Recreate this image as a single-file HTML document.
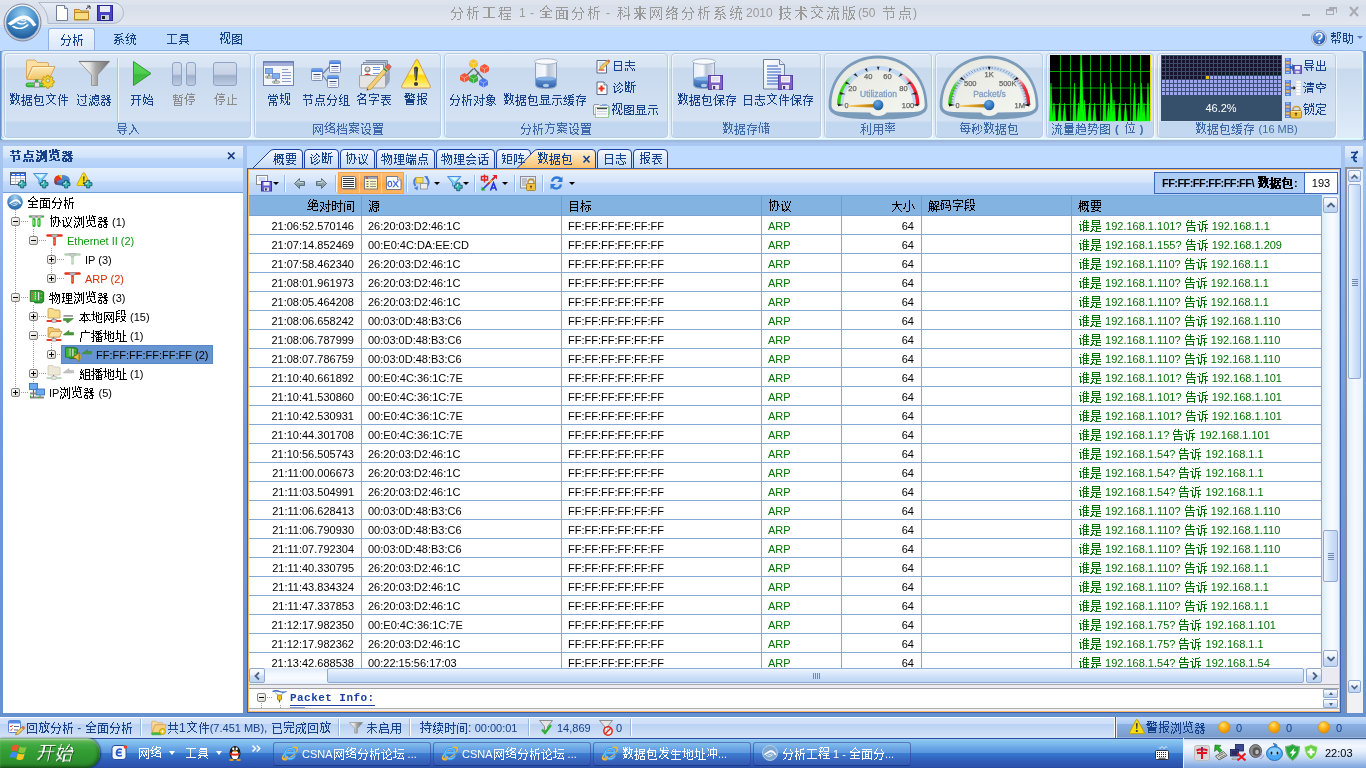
<!DOCTYPE html>
<html lang="zh">
<head>
<meta charset="utf-8">
<title>分析工程 1 - 全面分析 - 科来网络分析系统2010 技术交流版(50 节点)</title>
<style>
*{box-sizing:border-box;margin:0;padding:0}
html,body{width:1366px;height:768px;overflow:hidden}
body{will-change:transform}
body{position:relative;font-family:"Liberation Sans",sans-serif;font-size:11px;color:#000;background:#6593cf;line-height:1}
.c{font-size:12px}
i{display:inline-block;position:relative;overflow:hidden;width:12px;height:13px;font-size:0;line-height:0;vertical-align:-2px;font-style:normal}
i svg{position:absolute;left:0;top:0;width:12px;height:13px;stroke:currentColor;stroke-width:1;fill:none;shape-rendering:crispEdges}
.abs{position:absolute}
svg{display:block;overflow:visible}
/* ---------- title bar ---------- */
#title{position:absolute;left:0;top:0;width:1366px;height:27px;background:linear-gradient(#dfe4ee 0,#dce2ec 5px,#d8deea 5px,#dce2ec 14px,#e2e6ef 24px,#dfe9eb 24px,#dfe9eb 25px,#ccd8ea 25px,#ccd8ea 26px,#dde2ee 26px,#dde2ee 27px)}
#title .txt{position:absolute;left:0;top:5px;white-space:nowrap;color:#9a9a98;font-size:12px;height:16px;line-height:16px}
#title i{width:16px;height:15px;vertical-align:-3px}
#title i svg{width:14px;height:15px}
#title .txt span{position:absolute;top:0}
#left .hd i{width:13px}
#left .hd i svg,.bd i svg{filter:drop-shadow(1px 0 0 currentColor)}
#start i{width:19px;height:18px;vertical-align:0}
#start i svg{width:18px;height:18px;shape-rendering:auto;transform:skewX(-12deg);filter:drop-shadow(1px 1px 0 #1b4d1b)}
#qat{position:absolute;left:40px;top:2px;width:84px;height:22px}
#orb{position:absolute;left:3px;top:3px;width:39px;height:39px}
/* ---------- ribbon ---------- */
#tabrow{position:absolute;left:0;top:27px;width:1366px;height:24px;background:#bfdbff}
.rtab{position:absolute;top:1px;height:23px;line-height:23px;color:#15428b;text-align:center;font-size:12px}
.rtab.on{border:1px solid #8db2e3;border-bottom:none;border-radius:3px 3px 0 0;background:linear-gradient(#f3f8ff,#e1ecfb 60%,#dbe7f7)}
#ribbon{position:absolute;left:1px;top:50px;width:1363px;height:88px;border:1px solid #8db2e3;border-bottom:none;border-radius:4px 4px 3px 3px;background:linear-gradient(#eef5fd 0,#e4eefa 1px,#dde8f5 3px,#d9e4f3 17px,#c8d9ee 18px,#dfecfa 87px);box-shadow:0 1px 0 #e6fdff,0 2px 0 #d2f3fa,inset -1px 0 0 #e8f6fc}
.grp{position:absolute;top:2px;height:85px;border:1px solid #b7cce3;border-radius:4px;background:linear-gradient(#dde8f5 0,#d8e4f3 13px,#c8d9ee 14px,#d4e2f3 67px,#c1d7f0 68px,#c3d8f0 83px);box-shadow:inset 1px 1px 0 rgba(255,255,255,.6),1px 1px 0 rgba(255,255,255,.7)}
.grp .cap{position:absolute;left:0;right:0;bottom:0;height:16px;line-height:16px;text-align:center;color:#3e6aaa;font-size:12px;white-space:nowrap}
.rb{position:absolute;top:1px;margin-left:1px;text-align:center;color:#15428b;font-size:12px;white-space:nowrap}
.rb .ic{position:absolute;top:5px;left:50%;margin-left:-16px;width:32px;height:32px}
.rb .lb{position:absolute;top:38px;left:-20px;right:-20px;height:14px;line-height:14px}
.rb.dis{color:#8d8d8d}
.sb{position:absolute;margin:0;height:18px;line-height:18px;color:#15428b;font-size:12px;white-space:nowrap}
.sb svg{position:absolute;left:0;top:1px}
/* ---------- panels ---------- */
#frame{position:absolute;left:0;top:140px;width:1366px;height:577px;background:linear-gradient(#9db2d3 0,#a3bce2 2px,#a9c7f0 3px,#a4c3ef 30px,#8fb3ea 90px,#7099dd 290px,#6591cf 577px)}
#left{position:absolute;left:3px;top:146px;width:240px;height:567px;background:#fff}
#left .hd{position:absolute;left:0;top:0;width:240px;height:22px;background:linear-gradient(#e3eefd 0,#d0e2fb 50%,#bbd6f9 58%,#b1d0f9 100%);color:#15428b;font-weight:bold;font-size:12px;line-height:21px;padding-left:6px}
#left .tb{position:absolute;left:0;top:22px;width:240px;height:25px;background:linear-gradient(#e6f0fd,#d6e6fc 50%,#c4dbfa 60%,#b3d0f7);border-bottom:1px solid #6f9dd9}
.tn{position:absolute;margin-left:-1px;height:19px;line-height:21px;white-space:nowrap;font-size:11px}
.tn .c{font-size:12px}
i{display:inline-block;position:relative;overflow:hidden;width:12px;height:13px;font-size:0;line-height:0;vertical-align:-2px;font-style:normal}
i svg{position:absolute;left:0;top:0;width:12px;height:13px;stroke:currentColor;stroke-width:1;fill:none;shape-rendering:crispEdges}
.xb{position:absolute;width:9px;height:9px;border:1px solid #848484;border-radius:2px;background:linear-gradient(135deg,#fff,#d8d4c8)}
.xb:before{content:"";position:absolute;left:1px;top:3px;width:5px;height:1px;background:#000}
.xb.p:after{content:"";position:absolute;left:3px;top:1px;width:1px;height:5px;background:#000}
.dh{position:absolute;height:1px;background-image:linear-gradient(90deg,#9a9a9a 50%,transparent 50%);background-size:2px 1px}
.dv{position:absolute;width:1px;background-image:linear-gradient(#9a9a9a 50%,transparent 50%);background-size:1px 2px}
/* main */
#mtabs{position:absolute;left:247px;top:146px;width:1094px;height:23px;background:#bfdbff}
#main{position:absolute;left:247px;top:168px;width:1094px;height:545px;border:1px solid #3c5ea8;background:#eeeef8}
#main .in{position:absolute;left:0;top:0;right:0;bottom:0;border:1px solid #ffb95e}
#mtb{position:absolute;left:249px;top:170px;width:1090px;height:25px;background:linear-gradient(#e6effd,#d6e5fb 45%,#c3d9f8 55%,#b5d3fb)}
#th{position:absolute;left:249px;top:195px;width:1073px;height:21px;background:#83b4e1;border-top:1px solid #74a6dc;border-bottom:1px solid #7aa3d4}
.th{position:absolute;top:0;height:19px;line-height:21px;font-size:12px;white-space:nowrap}
.vs{position:absolute;top:0;width:1px;height:19px;background:#6f9fd2}
#tb{position:absolute;left:249px;top:216px;width:1073px;height:452px;overflow:hidden;background:#fff}
.tr{position:relative;height:19px;border-bottom:1px solid #86a8d6;white-space:nowrap}
.td{position:absolute;top:0;height:18px;line-height:20px;border-right:1px solid #86a8d6;overflow:hidden}
.td .c{font-size:12px}
i{display:inline-block;position:relative;overflow:hidden;width:12px;height:13px;font-size:0;line-height:0;vertical-align:-2px;font-style:normal}
i svg{position:absolute;left:0;top:0;width:12px;height:13px;stroke:currentColor;stroke-width:1;fill:none;shape-rendering:crispEdges}
.c1{left:0;width:113px;text-align:right;padding-right:7px}
.c2{left:113px;width:200px;padding-left:6px}
.c3{left:313px;width:200px;padding-left:6px}
.c4{left:513px;width:80px;padding-left:6px}
.c5{left:593px;width:80px;text-align:right;padding-right:7px}
.c6{left:673px;width:150px}
.c7{left:823px;width:250px;padding-left:6px}
.g{color:#006e00}
.mt{position:absolute;top:5px;height:16px;line-height:16px;font-size:12px;color:#15428b;white-space:nowrap}
.tsep{position:absolute;top:5px;width:2px;height:17px;border-left:1px solid #9ab9e6;border-right:1px solid #f2f7ff}
.dar{position:absolute;top:12px;border:3px solid transparent;border-bottom:none;border-top:3px solid #000;width:0;height:0}
/* scrollbars */
.sbtn{position:absolute;border:1px solid #8fa9d2;border-radius:2px;background:linear-gradient(#fafcff 0,#e9f1fc 45%,#cfdff6 52%,#bfd4f1 100%)}
/* status */
#status{position:absolute;left:0;top:717px;width:1366px;height:21px;background:linear-gradient(#fff 0,#fff 1px,#d4e3f9 1px,#cfdff7 7px,#b9d1f4 7px,#d4e3f6 21px);color:#15428b;font-size:12px;line-height:23px;white-space:nowrap}
#status .it{position:absolute;top:0;height:21px}
#status .sep{position:absolute;top:2px;width:2px;height:17px;border-left:1px solid #9ab5da;border-right:1px solid #fff}
/* taskbar */
#task{position:absolute;left:0;top:738px;width:1366px;height:30px;background:linear-gradient(#2a48a8 0,#2a48a8 1px,#9ccef4 1px,#84c3ec 3px,#7cb9ec 6px,#69a5e6 10px,#5894de 15.500px,#3478cc 15.500px,#3370c8 18px,#3060bc 22px,#2c54b0 27px,#2a50ac 29px,#27479a 30px);color:#fff;font-size:12px;white-space:nowrap}
.tk{position:absolute;top:4px;width:158px;height:24px;line-height:22px;border-radius:3px;background:rgba(255,255,255,.04);border:1px solid rgba(50,60,150,.55);border-bottom-color:#1c3a88;padding-left:28px;color:#fff;overflow:hidden;font-size:11px}
</style>
</head>
<body>
<svg class="abs" style="left:0;top:0" width="0" height="0"><defs><path id="g4ef6" d="M3 1.5h1M7 1.5h1M3 2.5h1M5 2.5h1M7 2.5h1M2 3.5h1M5 3.5h1M7 3.5h1M2 4.5h1M5 4.5h6M1 5.5h2M4 5.5h1M7 5.5h1M2 6.5h1M7 6.5h1M2 7.5h1M4 7.5h7M2 8.5h1M7 8.5h1M2 9.5h1M7 9.5h1M2 10.5h1M7 10.5h1M2 11.5h1M7 11.5h1M2 12.5h1M7 12.5h1"/><path id="g4f1a" d="M6 1.5h1M5 2.5h2M4 3.5h1M7 3.5h1M2 4.5h2M8 4.5h2M1 5.5h10M1 8.5h10M4 9.5h1M3 10.5h1M8 10.5h1M2 11.5h1M5 11.5h5M2 12.5h3M10 12.5h1"/><path id="g4f4d" d="M3 .5h1M7 .5h1M3 1.5h1M7 1.5h1M2 2.5h1M4 2.5h7M2 3.5h1M1 4.5h2M5 4.5h1M9 4.5h1M2 5.5h1M5 5.5h1M9 5.5h1M2 6.5h1M6 6.5h1M9 6.5h1M2 7.5h1M6 7.5h1M9 7.5h1M2 8.5h1M6 8.5h1M8 8.5h1M2 9.5h1M8 9.5h1M2 10.5h1M4 10.5h7M2 11.5h1"/><path id="g4fdd" d="M3 1.5h1M3 2.5h1M5 2.5h6M2 3.5h1M4 3.5h1M10 3.5h1M2 4.5h1M4 4.5h1M10 4.5h1M1 5.5h2M5 5.5h6M0 6.5h1M2 6.5h1M7 6.5h1M2 7.5h1M4 7.5h7M2 8.5h1M6 8.5h3M2 9.5h1M6 9.5h2M9 9.5h1M2 10.5h1M5 10.5h1M7 10.5h1M9 10.5h1M2 11.5h3M7 11.5h1M10 11.5h2M2 12.5h1M7 12.5h1"/><path id="g505c" d="M3 .5h1M7 .5h1M3 1.5h8M2 2.5h1M2 3.5h1M5 3.5h5M1 4.5h2M5 4.5h5M0 5.5h3M2 6.5h1M4 6.5h7M2 7.5h2M10 7.5h1M2 8.5h1M5 8.5h5M2 9.5h1M7 9.5h1M2 10.5h1M7 10.5h1M2 11.5h1M5 11.5h3"/><path id="g50a8" d="M2 .5h1M7 .5h1M2 1.5h1M4 1.5h1M6 1.5h5M2 2.5h1M7 2.5h1M9 2.5h1M1 3.5h1M7 3.5h1M9 3.5h1M1 4.5h1M3 4.5h2M6 4.5h6M0 5.5h2M4 5.5h1M7 5.5h1M1 6.5h1M4 6.5h1M6 6.5h5M1 7.5h1M4 7.5h1M7 7.5h1M10 7.5h1M1 8.5h1M4 8.5h1M7 8.5h4M1 9.5h1M4 9.5h2M7 9.5h1M10 9.5h1M1 10.5h1M4 10.5h1M7 10.5h4M7 11.5h1M10 11.5h1"/><path id="g5165" d="M4 2.5h1M4 3.5h2M5 4.5h1M5 5.5h2M5 6.5h3M5 7.5h1M7 7.5h1M4 8.5h1M7 8.5h2M3 9.5h2M8 9.5h1M3 10.5h1M9 10.5h1M1 11.5h2M10 11.5h1M1 12.5h1"/><path id="g5168" d="M6 .5h1M5 1.5h2M4 2.5h1M7 2.5h1M3 3.5h1M8 3.5h1M1 4.5h2M9 4.5h2M1 5.5h10M5 6.5h1M5 7.5h1M2 8.5h8M5 9.5h1M5 10.5h1M1 11.5h10"/><path id="g5171" d="M3 1.5h1M8 1.5h1M3 2.5h1M8 2.5h1M3 3.5h1M8 3.5h1M1 4.5h10M3 5.5h1M8 5.5h1M3 6.5h1M8 6.5h1M3 7.5h1M8 7.5h1M1 8.5h10M3 10.5h1M8 10.5h1M2 11.5h1M9 11.5h1M1 12.5h1M10 12.5h1"/><path id="g5177" d="M3 2.5h7M3 3.5h7M2 4.5h1M9 4.5h1M3 5.5h7M2 6.5h1M9 6.5h1M3 7.5h7M2 8.5h1M9 8.5h1M1 9.5h10M3 10.5h1M7 10.5h2M2 11.5h2M9 11.5h1M1 12.5h1M10 12.5h1"/><path id="g51b2" d="M7 .5h1M1 1.5h1M7 1.5h1M2 2.5h1M4 2.5h7M2 3.5h1M4 3.5h1M7 3.5h1M10 3.5h1M4 4.5h1M7 4.5h1M10 4.5h1M4 5.5h1M7 5.5h1M10 5.5h1M4 6.5h1M7 6.5h1M10 6.5h1M2 7.5h1M4 7.5h7M2 8.5h1M4 8.5h1M7 8.5h1M10 8.5h1M1 9.5h1M7 9.5h1M7 10.5h1M7 11.5h1"/><path id="g51fa" d="M5 1.5h1M2 2.5h1M5 2.5h1M9 2.5h1M2 3.5h1M5 3.5h1M9 3.5h1M2 4.5h1M5 4.5h1M9 4.5h1M2 5.5h1M5 5.5h1M9 5.5h1M2 6.5h8M5 7.5h1M1 8.5h1M5 8.5h1M10 8.5h1M1 9.5h1M5 9.5h1M10 9.5h1M1 10.5h1M5 10.5h1M10 10.5h1M1 11.5h10M10 12.5h1"/><path id="g5206" d="M4 1.5h1M3 2.5h1M8 2.5h1M3 3.5h1M8 3.5h1M2 4.5h1M9 4.5h1M1 5.5h2M10 5.5h1M1 6.5h10M4 7.5h1M9 7.5h1M4 8.5h1M9 8.5h1M4 9.5h1M9 9.5h1M3 10.5h1M8 10.5h1M2 11.5h2M8 11.5h1M1 12.5h1M6 12.5h3"/><path id="g5229" d="M4 1.5h2M10 1.5h1M1 2.5h3M10 2.5h1M3 3.5h1M7 3.5h1M10 3.5h1M3 4.5h1M7 4.5h1M10 4.5h1M1 5.5h5M7 5.5h1M10 5.5h1M3 6.5h1M7 6.5h1M10 6.5h1M2 7.5h3M7 7.5h1M10 7.5h1M2 8.5h2M5 8.5h1M7 8.5h1M10 8.5h1M1 9.5h1M3 9.5h1M7 9.5h1M10 9.5h1M0 10.5h1M3 10.5h1M10 10.5h1M3 11.5h1M10 11.5h1M3 12.5h1M8 12.5h3"/><path id="g52a9" d="M1 2.5h4M7 2.5h1M1 3.5h1M4 3.5h1M7 3.5h1M1 4.5h4M6 4.5h5M1 5.5h1M4 5.5h1M7 5.5h1M10 5.5h1M1 6.5h1M4 6.5h1M7 6.5h1M10 6.5h1M1 7.5h4M7 7.5h1M10 7.5h1M1 8.5h1M4 8.5h1M7 8.5h1M10 8.5h1M1 9.5h1M4 9.5h2M7 9.5h1M10 9.5h1M1 10.5h4M6 10.5h1M10 10.5h1M5 11.5h2M10 11.5h1M5 12.5h1M8 12.5h2"/><path id="g52bf" d="M2 1.5h1M7 1.5h1M1 2.5h9M2 3.5h1M7 3.5h1M9 3.5h1M1 4.5h4M6 4.5h1M9 4.5h1M2 5.5h1M6 5.5h4M11 5.5h1M1 6.5h2M5 6.5h1M10 6.5h1M5 7.5h1M1 8.5h9M4 9.5h1M9 9.5h1M4 10.5h1M9 10.5h1M2 11.5h2M9 11.5h1M1 12.5h2M7 12.5h2"/><path id="g5305" d="M3 1.5h1M3 2.5h1M2 3.5h8M1 4.5h2M9 4.5h1M1 5.5h6M9 5.5h1M2 6.5h1M6 6.5h1M9 6.5h1M2 7.5h1M6 7.5h1M9 7.5h1M2 8.5h5M9 8.5h1M2 9.5h1M8 9.5h2M2 10.5h1M2 11.5h1M10 11.5h1M3 12.5h8"/><path id="g534f" d="M2 .5h1M2 1.5h1M6 1.5h1M2 2.5h1M4 2.5h6M1 3.5h3M6 3.5h1M9 3.5h1M2 4.5h1M6 4.5h1M9 4.5h1M2 5.5h1M4 5.5h1M6 5.5h1M9 5.5h2M2 6.5h1M4 6.5h1M6 6.5h1M9 6.5h2M2 7.5h1M4 7.5h1M6 7.5h1M9 7.5h1M11 7.5h1M2 8.5h1M5 8.5h1M9 8.5h1M2 9.5h1M5 9.5h1M9 9.5h1M2 10.5h1M4 10.5h1M9 10.5h1M2 11.5h1M4 11.5h1M7 11.5h2"/><path id="g53d1" d="M5 .5h1M8 .5h1M2 1.5h1M5 1.5h1M9 1.5h1M2 2.5h1M5 2.5h1M2 3.5h9M4 4.5h2M4 5.5h6M4 6.5h1M9 6.5h1M3 7.5h1M5 7.5h1M8 7.5h1M2 8.5h1M6 8.5h3M1 9.5h2M6 9.5h2M1 10.5h1M5 10.5h1M8 10.5h2M3 11.5h2M9 11.5h2"/><path id="g540d" d="M4 .5h2M4 1.5h6M2 2.5h2M8 2.5h2M1 3.5h2M8 3.5h1M4 4.5h1M6 4.5h2M5 5.5h2M2 6.5h8M1 7.5h1M3 7.5h1M9 7.5h1M3 8.5h1M9 8.5h1M3 9.5h1M9 9.5h1M3 10.5h7M3 11.5h1M9 11.5h1"/><path id="g542f" d="M5 1.5h1M6 2.5h1M2 3.5h8M2 4.5h1M9 4.5h1M2 5.5h1M9 5.5h1M2 6.5h8M2 7.5h1M2 8.5h9M1 9.5h1M3 9.5h1M10 9.5h1M1 10.5h1M3 10.5h1M10 10.5h1M1 11.5h1M3 11.5h8M3 12.5h1M10 12.5h1"/><path id="g544a" d="M3 1.5h1M6 1.5h1M2 2.5h1M6 2.5h1M2 3.5h8M1 4.5h1M6 4.5h1M1 5.5h1M6 5.5h1M1 6.5h10M2 8.5h8M2 9.5h1M9 9.5h1M2 10.5h1M9 10.5h1M2 11.5h8M2 12.5h1M9 12.5h1"/><path id="g5668" d="M2 2.5h3M7 2.5h3M1 3.5h1M4 3.5h1M6 3.5h1M9 3.5h1M2 4.5h3M7 4.5h3M5 5.5h1M7 5.5h2M1 6.5h10M3 7.5h1M7 7.5h2M2 8.5h1M8 8.5h2M1 9.5h4M7 9.5h4M1 10.5h1M4 10.5h1M6 10.5h1M9 10.5h1M1 11.5h1M4 11.5h1M6 11.5h1M9 11.5h1M2 12.5h3M7 12.5h3"/><path id="g56de" d="M1 2.5h10M1 3.5h1M10 3.5h1M1 4.5h1M4 4.5h4M10 4.5h1M1 5.5h1M3 5.5h1M7 5.5h1M10 5.5h1M1 6.5h1M3 6.5h1M7 6.5h1M10 6.5h1M1 7.5h1M3 7.5h1M7 7.5h1M10 7.5h1M1 8.5h1M4 8.5h4M10 8.5h1M1 9.5h1M10 9.5h1M1 10.5h1M10 10.5h1M1 11.5h10M1 12.5h1M10 12.5h1"/><path id="g56fe" d="M1 2.5h10M1 3.5h1M5 3.5h1M10 3.5h1M1 4.5h1M4 4.5h5M10 4.5h1M1 5.5h4M7 5.5h1M10 5.5h1M1 6.5h1M5 6.5h2M10 6.5h1M1 7.5h4M7 7.5h4M1 8.5h1M5 8.5h3M10 8.5h1M1 9.5h1M3 9.5h3M10 9.5h1M1 10.5h1M6 10.5h2M10 10.5h1M1 11.5h10M1 12.5h1M10 12.5h1"/><path id="g5730" d="M2 1.5h1M2 2.5h1M5 2.5h1M7 2.5h1M2 3.5h1M5 3.5h1M7 3.5h1M10 3.5h1M0 4.5h4M5 4.5h1M8 4.5h3M2 5.5h1M5 5.5h3M10 5.5h1M2 6.5h1M4 6.5h2M7 6.5h1M10 6.5h1M2 7.5h1M5 7.5h1M7 7.5h1M10 7.5h1M2 8.5h1M5 8.5h1M7 8.5h1M10 8.5h1M2 9.5h2M5 9.5h1M7 9.5h1M9 9.5h2M1 10.5h1M5 10.5h1M5 11.5h1M10 11.5h1M6 12.5h5"/><path id="g5740" d="M2 1.5h1M8 1.5h1M2 2.5h1M8 2.5h1M2 3.5h1M8 3.5h1M1 4.5h5M8 4.5h1M2 5.5h1M5 5.5h1M8 5.5h1M2 6.5h1M5 6.5h1M8 6.5h3M2 7.5h1M5 7.5h1M8 7.5h1M2 8.5h1M5 8.5h1M8 8.5h1M2 9.5h2M5 9.5h1M8 9.5h1M0 10.5h2M5 10.5h1M8 10.5h1M5 11.5h1M8 11.5h1M4 12.5h8"/><path id="g575b" d="M2 1.5h1M2 2.5h1M5 2.5h6M2 3.5h1M0 4.5h4M2 5.5h1M2 6.5h1M4 6.5h7M2 7.5h1M7 7.5h1M2 8.5h1M6 8.5h1M9 8.5h1M2 9.5h2M6 9.5h1M9 9.5h1M0 10.5h3M5 10.5h1M10 10.5h1M4 11.5h7M10 12.5h1"/><path id="g5927" d="M5 2.5h1M5 3.5h1M5 4.5h1M1 5.5h10M5 6.5h2M5 7.5h2M4 8.5h1M7 8.5h1M4 9.5h1M7 9.5h1M3 10.5h1M8 10.5h1M2 11.5h1M9 11.5h1M1 12.5h1M10 12.5h1"/><path id="g59cb" d="M2 1.5h1M7 1.5h1M2 2.5h1M7 2.5h1M2 3.5h1M7 3.5h1M9 3.5h1M1 4.5h4M6 4.5h1M9 4.5h1M1 5.5h1M4 5.5h2M10 5.5h1M1 6.5h1M3 6.5h1M5 6.5h6M1 7.5h1M3 7.5h1M1 8.5h1M3 8.5h1M6 8.5h5M2 9.5h2M5 9.5h1M10 9.5h1M2 10.5h1M4 10.5h2M10 10.5h1M1 11.5h1M6 11.5h5M10 12.5h1"/><path id="g5b57" d="M5 .5h1M1 1.5h10M1 2.5h1M10 2.5h1M1 3.5h1M10 3.5h1M3 4.5h6M7 5.5h1M6 6.5h1M1 7.5h10M5 8.5h1M5 9.5h1M5 10.5h1M4 11.5h2"/><path id="g5b58" d="M5 1.5h1M4 2.5h1M1 3.5h10M3 4.5h1M3 5.5h1M5 5.5h6M2 6.5h1M9 6.5h1M1 7.5h2M7 7.5h2M2 8.5h1M4 8.5h7M2 9.5h1M7 9.5h1M2 10.5h1M7 10.5h1M2 11.5h1M7 11.5h1M2 12.5h1M6 12.5h2"/><path id="g5b8c" d="M5 .5h1M1 1.5h10M1 2.5h1M10 2.5h1M1 3.5h1M10 3.5h1M1 4.5h1M3 4.5h6M10 4.5h1M1 6.5h10M4 7.5h1M7 7.5h1M4 8.5h1M7 8.5h1M3 9.5h1M7 9.5h1M3 10.5h1M7 10.5h1M10 10.5h1M1 11.5h2M7 11.5h4"/><path id="g5b9a" d="M5 .5h1M1 1.5h10M1 2.5h1M10 2.5h1M1 3.5h1M10 3.5h1M3 4.5h7M5 5.5h1M3 6.5h1M5 6.5h1M2 7.5h1M6 7.5h4M2 8.5h2M5 8.5h1M2 9.5h2M5 9.5h1M1 10.5h1M4 10.5h2M0 11.5h2M5 11.5h6"/><path id="g5bf9" d="M9 1.5h1M9 2.5h1M1 3.5h4M9 3.5h1M4 4.5h1M9 4.5h1M4 5.5h1M6 5.5h6M1 6.5h1M4 6.5h1M9 6.5h1M2 7.5h1M4 7.5h1M6 7.5h1M9 7.5h1M3 8.5h1M7 8.5h1M9 8.5h1M3 9.5h2M7 9.5h1M9 9.5h1M2 10.5h1M5 10.5h1M9 10.5h1M1 11.5h2M9 11.5h1M1 12.5h1M7 12.5h3"/><path id="g5bfc" d="M2 1.5h8M2 2.5h1M9 2.5h1M2 3.5h1M9 3.5h1M2 4.5h8M2 5.5h1M10 5.5h1M2 6.5h8M8 7.5h1M1 8.5h10M3 9.5h1M8 9.5h1M3 10.5h2M8 10.5h1M4 11.5h1M8 11.5h1M6 12.5h2"/><path id="g5c0f" d="M6 1.5h1M6 2.5h1M6 3.5h1M2 4.5h1M6 4.5h1M2 5.5h1M6 5.5h1M9 5.5h1M2 6.5h1M6 6.5h1M9 6.5h1M2 7.5h1M6 7.5h1M10 7.5h1M1 8.5h1M6 8.5h1M10 8.5h1M0 9.5h2M6 9.5h1M11 9.5h1M6 10.5h1M6 11.5h1M3 12.5h3"/><path id="g5de5" d="M1 2.5h10M5 3.5h1M5 4.5h1M5 5.5h1M5 6.5h1M5 7.5h1M5 8.5h1M5 9.5h1M5 10.5h1M1 11.5h10"/><path id="g5df2" d="M1 2.5h9M9 3.5h1M2 4.5h1M9 4.5h1M2 5.5h1M9 5.5h1M2 6.5h8M2 7.5h1M9 7.5h1M2 8.5h1M2 9.5h1M10 9.5h1M2 10.5h1M10 10.5h1M2 11.5h1M10 11.5h1M2 12.5h9"/><path id="g5e2e" d="M3 1.5h1M7 1.5h4M1 2.5h5M7 2.5h1M10 2.5h1M3 3.5h1M7 3.5h1M9 3.5h1M1 4.5h5M7 4.5h1M9 4.5h1M1 5.5h5M7 5.5h1M10 5.5h1M3 6.5h1M7 6.5h1M10 6.5h1M2 7.5h1M7 7.5h1M9 7.5h1M1 8.5h1M5 8.5h1M2 9.5h8M2 10.5h1M5 10.5h1M9 10.5h1M2 11.5h1M5 11.5h1M8 11.5h2M5 12.5h1"/><path id="g5e38" d="M2 1.5h1M6 1.5h1M9 1.5h1M3 2.5h1M6 2.5h1M8 2.5h1M1 3.5h10M1 4.5h1M10 4.5h1M1 5.5h1M3 5.5h6M10 5.5h1M3 6.5h1M8 6.5h1M3 7.5h6M6 8.5h1M2 9.5h8M2 10.5h1M6 10.5h1M9 10.5h1M2 11.5h1M6 11.5h1M9 11.5h1M2 12.5h1M6 12.5h1M8 12.5h2"/><path id="g5e7f" d="M6 1.5h1M6 2.5h1M2 3.5h9M2 4.5h1M2 5.5h1M2 6.5h1M2 7.5h1M2 8.5h1M1 9.5h1M1 10.5h1M1 11.5h1M1 12.5h1"/><path id="g5f00" d="M1 2.5h10M3 3.5h1M8 3.5h1M3 4.5h1M8 4.5h1M3 5.5h1M8 5.5h1M1 6.5h10M3 7.5h1M8 7.5h1M3 8.5h1M8 8.5h1M3 9.5h1M8 9.5h1M2 10.5h2M8 10.5h1M2 11.5h1M8 11.5h1M1 12.5h1M8 12.5h1"/><path id="g5fd7" d="M5 1.5h1M5 2.5h1M1 3.5h10M5 4.5h1M5 5.5h1M1 6.5h10M5 7.5h1M6 8.5h1M1 9.5h1M3 9.5h1M7 9.5h1M9 9.5h1M1 10.5h1M3 10.5h1M8 10.5h1M10 10.5h1M1 11.5h1M3 11.5h1M8 11.5h1M10 11.5h1M4 12.5h5"/><path id="g6210" d="M8 1.5h1M6 2.5h1M9 2.5h2M2 3.5h9M1 4.5h1M7 4.5h1M1 5.5h1M7 5.5h1M10 5.5h1M2 6.5h4M7 6.5h1M9 6.5h1M1 7.5h1M5 7.5h1M7 7.5h1M9 7.5h1M1 8.5h1M4 8.5h1M7 8.5h2M1 9.5h1M4 9.5h1M7 9.5h2M1 10.5h1M3 10.5h2M7 10.5h2M10 10.5h1M1 11.5h1M6 11.5h1M8 11.5h1M10 11.5h1M0 12.5h2M5 12.5h1M9 12.5h2"/><path id="g62a5" d="M2 .5h1M5 .5h6M2 1.5h1M5 1.5h1M10 1.5h1M2 2.5h1M5 2.5h1M10 2.5h1M1 3.5h5M7 3.5h3M2 4.5h1M5 4.5h1M2 5.5h1M5 5.5h6M2 6.5h5M10 6.5h1M1 7.5h2M5 7.5h1M7 7.5h1M9 7.5h1M2 8.5h1M5 8.5h1M7 8.5h3M2 9.5h1M5 9.5h1M8 9.5h1M2 10.5h1M5 10.5h1M7 10.5h3M1 11.5h2M5 11.5h2M10 11.5h1"/><path id="g6301" d="M2 .5h1M7 .5h1M2 1.5h1M7 1.5h1M0 2.5h4M5 2.5h6M2 3.5h1M7 3.5h1M2 4.5h1M4 4.5h8M2 5.5h1M9 5.5h1M2 6.5h2M9 6.5h1M0 7.5h3M4 7.5h7M2 8.5h1M5 8.5h1M9 8.5h1M2 9.5h1M6 9.5h1M9 9.5h1M2 10.5h1M9 10.5h1M1 11.5h2M8 11.5h2"/><path id="g636e" d="M2 1.5h1M2 2.5h1M5 2.5h6M2 3.5h1M5 3.5h1M10 3.5h1M0 4.5h4M5 4.5h6M2 5.5h1M5 5.5h1M8 5.5h1M2 6.5h1M5 6.5h6M1 7.5h3M5 7.5h1M8 7.5h1M0 8.5h3M4 8.5h1M8 8.5h1M2 9.5h1M4 9.5h1M6 9.5h5M2 10.5h1M4 10.5h1M6 10.5h1M10 10.5h1M2 11.5h1M4 11.5h1M6 11.5h1M10 11.5h1M1 12.5h3M6 12.5h5"/><path id="g64ad" d="M2 1.5h1M9 1.5h2M2 2.5h1M4 2.5h5M2 3.5h1M5 3.5h1M7 3.5h1M9 3.5h1M0 4.5h3M4 4.5h7M2 5.5h1M6 5.5h3M2 6.5h2M5 6.5h1M7 6.5h1M9 6.5h1M2 7.5h1M4 7.5h1M7 7.5h1M10 7.5h2M0 8.5h3M5 8.5h6M2 9.5h1M5 9.5h1M7 9.5h1M10 9.5h1M2 10.5h1M5 10.5h6M2 11.5h1M5 11.5h1M7 11.5h1M10 11.5h1M1 12.5h2M5 12.5h6"/><path id="g653e" d="M7 .5h1M3 1.5h1M7 1.5h1M1 2.5h5M7 2.5h5M2 3.5h1M6 3.5h1M10 3.5h1M2 4.5h1M6 4.5h2M9 4.5h1M2 5.5h3M6 5.5h2M9 5.5h1M2 6.5h1M4 6.5h1M7 6.5h1M9 6.5h1M2 7.5h1M4 7.5h1M7 7.5h1M9 7.5h1M2 8.5h1M4 8.5h1M8 8.5h1M1 9.5h1M4 9.5h1M7 9.5h3M1 10.5h1M4 10.5h1M6 10.5h2M9 10.5h2M3 11.5h4M10 11.5h1"/><path id="g6570" d="M1 .5h1M3 .5h1M5 .5h1M7 .5h1M1 1.5h1M3 1.5h2M7 1.5h1M1 2.5h5M7 2.5h4M2 3.5h3M7 3.5h1M9 3.5h1M2 4.5h2M5 4.5h1M7 4.5h1M9 4.5h1M1 5.5h1M3 5.5h1M6 5.5h2M9 5.5h1M3 6.5h1M6 6.5h2M9 6.5h1M1 7.5h5M8 7.5h2M2 8.5h1M4 8.5h1M8 8.5h1M2 9.5h3M8 9.5h2M2 10.5h3M7 10.5h1M10 10.5h1M1 11.5h1M6 11.5h1M10 11.5h1"/><path id="g6587" d="M5 .5h1M6 1.5h1M1 2.5h10M3 3.5h1M8 3.5h1M3 4.5h1M8 4.5h1M4 5.5h1M7 5.5h2M4 6.5h1M7 6.5h1M5 7.5h2M5 8.5h2M4 9.5h1M7 9.5h1M2 10.5h2M8 10.5h2M1 11.5h1M10 11.5h1"/><path id="g65ad" d="M1 .5h1M4 .5h1M10 .5h1M1 1.5h2M4 1.5h2M7 1.5h3M1 2.5h2M4 2.5h2M7 2.5h1M1 3.5h1M4 3.5h1M7 3.5h1M1 4.5h5M7 4.5h5M1 5.5h1M3 5.5h2M7 5.5h1M9 5.5h1M1 6.5h1M3 6.5h3M7 6.5h1M9 6.5h1M1 7.5h2M4 7.5h1M7 7.5h1M9 7.5h1M1 8.5h2M4 8.5h1M7 8.5h1M9 8.5h1M1 9.5h1M4 9.5h1M6 9.5h1M9 9.5h1M1 10.5h6M9 10.5h1M6 11.5h1M9 11.5h1"/><path id="g65b9" d="M5 .5h1M6 1.5h1M1 2.5h10M4 3.5h1M4 4.5h1M4 5.5h6M4 6.5h1M9 6.5h1M3 7.5h1M9 7.5h1M3 8.5h1M9 8.5h1M3 9.5h1M9 9.5h1M2 10.5h1M8 10.5h1M1 11.5h1M6 11.5h3"/><path id="g65e5" d="M2 2.5h8M2 3.5h1M9 3.5h1M2 4.5h1M9 4.5h1M2 5.5h1M9 5.5h1M2 6.5h8M2 7.5h1M9 7.5h1M2 8.5h1M9 8.5h1M2 9.5h1M9 9.5h1M2 10.5h1M9 10.5h1M2 11.5h8M2 12.5h1M9 12.5h1"/><path id="g65f6" d="M9 1.5h1M1 2.5h4M9 2.5h1M1 3.5h1M4 3.5h1M9 3.5h1M1 4.5h1M4 4.5h8M1 5.5h1M4 5.5h1M9 5.5h1M1 6.5h4M6 6.5h1M9 6.5h1M1 7.5h1M4 7.5h1M6 7.5h1M9 7.5h1M1 8.5h1M4 8.5h1M7 8.5h1M9 8.5h1M1 9.5h1M4 9.5h1M9 9.5h1M1 10.5h4M9 10.5h1M1 11.5h1M9 11.5h1M7 12.5h3"/><path id="g662f" d="M2 1.5h8M2 2.5h1M9 2.5h1M2 3.5h8M2 4.5h1M9 4.5h1M2 5.5h8M1 7.5h10M3 8.5h1M6 8.5h1M2 9.5h1M6 9.5h5M2 10.5h2M6 10.5h1M1 11.5h2M4 11.5h1M6 11.5h1M0 12.5h2M5 12.5h6"/><path id="g663e" d="M2 2.5h8M2 3.5h1M9 3.5h1M2 4.5h8M2 5.5h1M9 5.5h1M2 6.5h8M4 7.5h1M7 7.5h1M2 8.5h1M4 8.5h1M7 8.5h1M9 8.5h1M2 9.5h1M4 9.5h1M7 9.5h1M9 9.5h1M4 10.5h1M7 10.5h1M0 11.5h12"/><path id="g6682" d="M3 1.5h1M10 1.5h1M1 2.5h5M7 2.5h3M1 3.5h1M3 3.5h1M7 3.5h1M1 4.5h5M7 4.5h4M3 5.5h1M6 5.5h1M9 5.5h1M1 6.5h6M9 6.5h1M3 7.5h1M6 7.5h1M9 7.5h1M2 8.5h8M2 9.5h1M9 9.5h1M2 10.5h8M2 11.5h1M9 11.5h1M2 12.5h8"/><path id="g672a" d="M5 1.5h1M5 2.5h1M2 3.5h8M5 4.5h1M5 5.5h1M1 6.5h10M5 7.5h2M4 8.5h2M7 8.5h1M3 9.5h1M5 9.5h1M8 9.5h1M2 10.5h1M5 10.5h1M9 10.5h1M1 11.5h1M5 11.5h1M10 11.5h1M5 12.5h1"/><path id="g672c" d="M5 2.5h1M5 3.5h1M1 4.5h10M4 5.5h2M7 5.5h1M4 6.5h2M7 6.5h1M3 7.5h1M5 7.5h1M8 7.5h1M2 8.5h2M5 8.5h1M8 8.5h1M2 9.5h1M5 9.5h1M9 9.5h1M0 10.5h2M3 10.5h6M10 10.5h2M5 11.5h1M5 12.5h1"/><path id="g6790" d="M2 1.5h1M9 1.5h1M2 2.5h1M6 2.5h4M2 3.5h1M6 3.5h1M1 4.5h4M6 4.5h1M2 5.5h1M6 5.5h1M2 6.5h2M6 6.5h5M2 7.5h1M4 7.5h1M6 7.5h1M9 7.5h1M1 8.5h2M4 8.5h1M6 8.5h1M9 8.5h1M1 9.5h2M5 9.5h1M9 9.5h1M2 10.5h1M5 10.5h1M9 10.5h1M2 11.5h1M5 11.5h1M9 11.5h1M2 12.5h1M5 12.5h1M9 12.5h1"/><path id="g6807" d="M2 1.5h1M2 2.5h1M6 2.5h5M2 3.5h1M1 4.5h4M2 5.5h1M2 6.5h2M5 6.5h6M1 7.5h2M4 7.5h1M8 7.5h1M1 8.5h2M6 8.5h1M8 8.5h2M0 9.5h1M2 9.5h1M5 9.5h1M8 9.5h1M10 9.5h1M2 10.5h1M5 10.5h1M8 10.5h1M10 10.5h1M2 11.5h1M8 11.5h1M2 12.5h1M6 12.5h2"/><path id="g6848" d="M5 .5h1M1 1.5h10M1 2.5h1M5 2.5h1M10 2.5h1M1 3.5h10M3 4.5h1M8 4.5h1M2 5.5h6M4 6.5h1M7 6.5h4M2 7.5h2M5 7.5h1M1 8.5h10M4 9.5h2M7 9.5h1M2 10.5h2M5 10.5h1M8 10.5h2M1 11.5h1M10 11.5h1"/><path id="g6863" d="M2 1.5h1M7 1.5h1M2 2.5h1M5 2.5h1M7 2.5h1M10 2.5h1M2 3.5h1M5 3.5h1M7 3.5h1M10 3.5h1M1 4.5h5M7 4.5h1M9 4.5h1M2 5.5h1M7 5.5h1M2 6.5h2M5 6.5h6M1 7.5h2M4 7.5h1M10 7.5h1M1 8.5h2M5 8.5h6M0 9.5h1M2 9.5h1M10 9.5h1M2 10.5h1M10 10.5h1M2 11.5h1M4 11.5h7M2 12.5h1M10 12.5h1"/><path id="g6982" d="M2 1.5h1M2 2.5h1M4 2.5h7M2 3.5h1M4 3.5h1M6 3.5h1M8 3.5h2M1 4.5h7M9 4.5h1M2 5.5h1M4 5.5h1M6 5.5h2M9 5.5h1M1 6.5h2M4 6.5h7M1 7.5h4M9 7.5h1M1 8.5h2M4 8.5h1M6 8.5h1M9 8.5h1M0 9.5h1M2 9.5h1M4 9.5h1M6 9.5h1M8 9.5h2M2 10.5h1M4 10.5h2M8 10.5h2M2 11.5h1M7 11.5h1M9 11.5h2M2 12.5h1M6 12.5h1M9 12.5h2"/><path id="g6b62" d="M6 1.5h1M6 2.5h1M6 3.5h1M2 4.5h1M6 4.5h1M2 5.5h1M6 5.5h5M2 6.5h1M6 6.5h1M2 7.5h1M6 7.5h1M2 8.5h1M6 8.5h1M2 9.5h1M6 9.5h1M2 10.5h1M6 10.5h1M1 11.5h10"/><path id="g6bb5" d="M3 .5h2M6 .5h4M1 1.5h2M6 1.5h1M9 1.5h1M1 2.5h1M6 2.5h1M9 2.5h1M1 3.5h4M6 3.5h1M9 3.5h1M1 4.5h1M6 4.5h1M9 4.5h2M1 5.5h1M1 6.5h4M6 6.5h5M1 7.5h1M6 7.5h1M9 7.5h1M1 8.5h1M3 8.5h2M7 8.5h1M9 8.5h1M0 9.5h3M7 9.5h2M1 10.5h1M7 10.5h3M1 11.5h1M5 11.5h2M10 11.5h1"/><path id="g6bcf" d="M3 .5h1M2 1.5h9M2 2.5h1M1 3.5h1M3 3.5h7M2 4.5h1M5 4.5h1M9 4.5h1M2 5.5h1M6 5.5h1M9 5.5h1M1 6.5h11M2 7.5h1M4 7.5h2M9 7.5h1M2 8.5h1M6 8.5h1M9 8.5h1M2 9.5h9M8 10.5h1M7 11.5h2"/><path id="g6d41" d="M1 1.5h1M7 1.5h1M2 2.5h1M7 2.5h1M4 3.5h7M6 4.5h1M9 4.5h1M1 5.5h1M5 5.5h1M9 5.5h1M2 6.5h1M4 6.5h5M10 6.5h1M5 7.5h1M7 7.5h1M9 7.5h1M5 8.5h1M7 8.5h1M9 8.5h1M2 9.5h1M5 9.5h1M7 9.5h1M9 9.5h1M2 10.5h1M4 10.5h1M7 10.5h1M9 10.5h1M1 11.5h1M4 11.5h1M7 11.5h1M9 11.5h1M11 11.5h1M1 12.5h1M3 12.5h1M9 12.5h2"/><path id="g6d4f" d="M1 1.5h1M5 1.5h1M10 1.5h1M2 2.5h1M5 2.5h1M8 2.5h1M10 2.5h1M2 3.5h7M10 3.5h1M6 4.5h1M8 4.5h1M10 4.5h1M1 5.5h1M6 5.5h1M8 5.5h1M10 5.5h1M2 6.5h1M4 6.5h1M6 6.5h1M8 6.5h1M10 6.5h1M5 7.5h1M8 7.5h1M10 7.5h1M2 8.5h1M5 8.5h1M8 8.5h1M10 8.5h1M2 9.5h1M5 9.5h2M8 9.5h1M10 9.5h1M1 10.5h1M4 10.5h1M6 10.5h1M10 10.5h1M1 11.5h1M3 11.5h2M10 11.5h1M1 12.5h1M3 12.5h1M9 12.5h2"/><path id="g6e05" d="M1 1.5h1M7 1.5h1M2 2.5h1M4 2.5h7M4 3.5h7M7 4.5h1M0 5.5h2M3 5.5h8M2 6.5h1M4 7.5h6M2 8.5h1M4 8.5h6M2 9.5h1M4 9.5h1M9 9.5h1M2 10.5h1M4 10.5h6M1 11.5h1M4 11.5h1M9 11.5h1M1 12.5h1M4 12.5h1M8 12.5h2"/><path id="g6e90" d="M1 1.5h1M2 2.5h1M4 2.5h7M4 3.5h1M8 3.5h1M4 4.5h1M6 4.5h5M1 5.5h1M4 5.5h2M10 5.5h1M2 6.5h1M4 6.5h1M6 6.5h5M4 7.5h2M10 7.5h1M2 8.5h1M4 8.5h1M6 8.5h5M2 9.5h1M4 9.5h1M8 9.5h1M2 10.5h2M5 10.5h1M8 10.5h1M10 10.5h1M1 11.5h1M3 11.5h1M5 11.5h1M8 11.5h1M10 11.5h1M1 12.5h1M3 12.5h1M6 12.5h3"/><path id="g6ee4" d="M7 1.5h1M2 2.5h1M7 2.5h4M4 3.5h7M4 4.5h1M6 4.5h1M10 4.5h1M1 5.5h1M4 5.5h7M2 6.5h1M4 6.5h1M6 6.5h1M10 6.5h1M4 7.5h1M7 7.5h4M2 8.5h1M4 8.5h1M2 9.5h2M5 9.5h2M8 9.5h1M10 9.5h1M1 10.5h1M3 10.5h1M5 10.5h2M10 10.5h1M1 11.5h1M3 11.5h2M6 11.5h1M9 11.5h1M11 11.5h1M1 12.5h1M3 12.5h1M7 12.5h3"/><path id="g70b9" d="M5 1.5h1M5 2.5h6M5 3.5h1M5 4.5h1M2 5.5h8M2 6.5h1M9 6.5h1M2 7.5h1M9 7.5h1M2 8.5h8M2 10.5h1M4 10.5h1M7 10.5h1M9 10.5h1M1 11.5h1M4 11.5h1M7 11.5h1M10 11.5h1M1 12.5h1M4 12.5h1M7 12.5h1M10 12.5h1"/><path id="g7269" d="M3 1.5h1M6 1.5h1M1 2.5h1M3 2.5h1M6 2.5h1M1 3.5h1M3 3.5h1M6 3.5h5M1 4.5h5M7 4.5h1M9 4.5h2M0 5.5h1M3 5.5h1M5 5.5h1M7 5.5h1M9 5.5h2M3 6.5h1M6 6.5h1M8 6.5h1M10 6.5h1M3 7.5h2M6 7.5h1M8 7.5h1M10 7.5h1M0 8.5h4M5 8.5h1M8 8.5h1M10 8.5h1M3 9.5h1M5 9.5h1M7 9.5h1M10 9.5h1M3 10.5h1M7 10.5h1M10 10.5h1M3 11.5h1M6 11.5h1M10 11.5h1M3 12.5h1M8 12.5h2"/><path id="g7387" d="M5 .5h1M1 1.5h10M5 2.5h1M1 3.5h2M4 3.5h1M7 3.5h1M9 3.5h2M2 4.5h1M4 4.5h3M8 4.5h2M3 5.5h1M5 5.5h1M7 5.5h1M1 6.5h2M4 6.5h4M9 6.5h2M1 8.5h10M5 9.5h1M5 10.5h1"/><path id="g7406" d="M1 2.5h3M5 2.5h6M2 3.5h1M5 3.5h1M7 3.5h1M10 3.5h1M2 4.5h1M5 4.5h6M2 5.5h1M5 5.5h1M7 5.5h1M10 5.5h1M1 6.5h3M5 6.5h1M7 6.5h1M10 6.5h1M2 7.5h1M5 7.5h6M2 8.5h1M7 8.5h1M2 9.5h1M5 9.5h6M1 10.5h3M7 10.5h1M1 11.5h1M7 11.5h1M4 12.5h8"/><path id="g751f" d="M3 2.5h1M5 2.5h1M2 3.5h1M5 3.5h1M2 4.5h9M1 5.5h1M5 5.5h1M1 6.5h1M5 6.5h1M2 7.5h8M5 8.5h1M5 9.5h1M5 10.5h1M5 11.5h1M1 12.5h10"/><path id="g7528" d="M2 2.5h9M2 3.5h1M6 3.5h1M10 3.5h1M2 4.5h1M6 4.5h1M10 4.5h1M2 5.5h9M2 6.5h1M6 6.5h1M10 6.5h1M2 7.5h1M6 7.5h1M10 7.5h1M2 8.5h9M2 9.5h1M6 9.5h1M10 9.5h1M1 10.5h1M6 10.5h1M10 10.5h1M1 11.5h1M6 11.5h1M10 11.5h1M0 12.5h1M6 12.5h1M8 12.5h2"/><path id="g76ee" d="M2 2.5h8M2 3.5h1M9 3.5h1M2 4.5h1M9 4.5h1M2 5.5h8M2 6.5h1M9 6.5h1M2 7.5h1M9 7.5h1M2 8.5h8M2 9.5h1M9 9.5h1M2 10.5h1M9 10.5h1M2 11.5h8M2 12.5h1M9 12.5h1"/><path id="g77e9" d="M2 1.5h1M1 2.5h1M6 2.5h5M1 3.5h4M6 3.5h1M1 4.5h1M3 4.5h1M6 4.5h5M3 5.5h1M6 5.5h1M10 5.5h1M1 6.5h4M6 6.5h1M10 6.5h1M3 7.5h1M6 7.5h1M10 7.5h1M2 8.5h2M6 8.5h5M2 9.5h2M6 9.5h1M2 10.5h1M4 10.5h1M6 10.5h1M1 11.5h1M6 11.5h5"/><path id="g7801" d="M1 1.5h9M2 2.5h1M9 2.5h1M1 3.5h1M6 3.5h1M9 3.5h1M1 4.5h3M6 4.5h1M9 4.5h1M1 5.5h1M3 5.5h1M5 5.5h1M9 5.5h1M0 6.5h2M3 6.5h1M6 6.5h5M1 7.5h1M3 7.5h1M10 7.5h1M1 8.5h1M3 8.5h1M5 8.5h4M10 8.5h1M1 9.5h1M3 9.5h1M10 9.5h1M1 10.5h2M10 10.5h1M8 11.5h2"/><path id="g793a" d="M2 2.5h8M1 5.5h10M6 6.5h1M6 7.5h1M2 8.5h1M6 8.5h1M9 8.5h1M2 9.5h1M6 9.5h1M9 9.5h1M1 10.5h1M6 10.5h1M10 10.5h1M1 11.5h1M6 11.5h1M10 11.5h1M4 12.5h2"/><path id="g79d2" d="M4 1.5h1M1 2.5h3M7 2.5h1M2 3.5h1M7 3.5h1M9 3.5h1M2 4.5h1M6 4.5h2M10 4.5h1M1 5.5h5M7 5.5h1M10 5.5h1M2 6.5h2M5 6.5h1M7 6.5h1M10 6.5h1M1 7.5h3M5 7.5h1M7 7.5h1M1 8.5h2M4 8.5h1M7 8.5h1M10 8.5h1M1 9.5h2M9 9.5h1M2 10.5h1M8 10.5h1M2 11.5h1M6 11.5h2M5 12.5h1"/><path id="g7a0b" d="M2 .5h3M6 .5h5M1 1.5h1M3 1.5h1M5 1.5h1M10 1.5h1M2 2.5h1M5 2.5h1M10 2.5h1M2 3.5h1M5 3.5h1M10 3.5h1M1 4.5h4M6 4.5h5M2 5.5h1M1 6.5h1M3 6.5h1M5 6.5h6M1 7.5h2M4 7.5h1M8 7.5h1M0 8.5h3M5 8.5h6M2 9.5h1M8 9.5h1M2 10.5h1M8 10.5h1M2 11.5h1M5 11.5h7"/><path id="g7a7a" d="M5 1.5h1M5 2.5h2M1 3.5h10M1 4.5h1M10 4.5h1M1 5.5h1M3 5.5h2M7 5.5h2M1 6.5h2M9 6.5h2M2 7.5h8M5 8.5h1M5 9.5h1M5 10.5h1M5 11.5h1M1 12.5h10"/><path id="g7aef" d="M2 1.5h1M2 2.5h1M5 2.5h1M7 2.5h1M10 2.5h1M1 3.5h5M7 3.5h1M10 3.5h1M5 4.5h6M1 5.5h1M3 5.5h1M1 6.5h1M3 6.5h8M1 7.5h1M3 7.5h1M7 7.5h1M1 8.5h1M3 8.5h1M5 8.5h6M1 9.5h1M3 9.5h1M5 9.5h2M8 9.5h1M10 9.5h1M2 10.5h5M8 10.5h1M10 10.5h1M1 11.5h1M5 11.5h2M8 11.5h1M10 11.5h1M5 12.5h2M8 12.5h1M10 12.5h1"/><path id="g7cfb" d="M8 1.5h2M1 2.5h7M4 3.5h1M3 4.5h1M7 4.5h2M2 5.5h5M4 6.5h2M8 6.5h1M2 7.5h2M6 7.5h4M1 8.5h6M10 8.5h1M3 9.5h1M6 9.5h1M8 9.5h1M2 10.5h2M6 10.5h1M9 10.5h1M1 11.5h2M6 11.5h1M10 11.5h1M4 12.5h2"/><path id="g7d44" d="M2 2.5h1M6 2.5h5M2 3.5h1M4 3.5h1M6 3.5h1M10 3.5h1M1 4.5h1M3 4.5h1M6 4.5h1M10 4.5h1M1 5.5h3M6 5.5h5M2 6.5h1M4 6.5h1M6 6.5h1M10 6.5h1M1 7.5h4M6 7.5h1M10 7.5h1M4 8.5h1M6 8.5h5M1 9.5h1M4 9.5h1M6 9.5h1M10 9.5h1M1 10.5h2M4 10.5h1M6 10.5h1M10 10.5h1M1 11.5h2M4 11.5h1M6 11.5h1M10 11.5h1M0 12.5h1M5 12.5h7"/><path id="g7ec4" d="M3 1.5h1M2 2.5h1M6 2.5h4M2 3.5h1M6 3.5h1M9 3.5h1M1 4.5h1M4 4.5h1M6 4.5h1M9 4.5h1M1 5.5h3M6 5.5h4M2 6.5h1M6 6.5h1M9 6.5h1M2 7.5h1M6 7.5h1M9 7.5h1M1 8.5h3M6 8.5h4M6 9.5h1M9 9.5h1M3 10.5h2M6 10.5h1M9 10.5h1M1 11.5h2M6 11.5h1M9 11.5h1M5 12.5h7"/><path id="g7edc" d="M3 .5h1M6 .5h1M2 1.5h1M6 1.5h5M2 2.5h1M5 2.5h2M10 2.5h1M1 3.5h1M4 3.5h3M9 3.5h1M0 4.5h4M7 4.5h2M2 5.5h1M6 5.5h4M2 6.5h1M5 6.5h2M10 6.5h1M1 7.5h3M6 7.5h5M5 8.5h1M10 8.5h1M3 9.5h3M10 9.5h1M1 10.5h2M6 10.5h5M10 11.5h1"/><path id="g7edd" d="M3 .5h1M6 .5h1M2 1.5h1M6 1.5h4M2 2.5h1M5 2.5h1M9 2.5h1M1 3.5h1M4 3.5h2M8 3.5h1M1 4.5h1M3 4.5h1M5 4.5h6M2 5.5h1M5 5.5h1M7 5.5h1M10 5.5h1M2 6.5h1M5 6.5h1M7 6.5h1M10 6.5h1M1 7.5h10M5 8.5h1M4 9.5h2M0 10.5h4M5 10.5h1M10 10.5h1M6 11.5h5"/><path id="g7edf" d="M3 1.5h1M7 1.5h1M2 2.5h1M8 2.5h1M2 3.5h1M5 3.5h6M1 4.5h1M4 4.5h1M7 4.5h1M9 4.5h1M0 5.5h4M6 5.5h1M9 5.5h1M2 6.5h1M5 6.5h6M2 7.5h1M6 7.5h1M8 7.5h1M10 7.5h1M1 8.5h3M6 8.5h1M8 8.5h1M6 9.5h1M8 9.5h1M3 10.5h1M6 10.5h1M8 10.5h1M1 11.5h2M5 11.5h1M8 11.5h1M10 11.5h1M4 12.5h1M9 12.5h2"/><path id="g7eed" d="M3 1.5h1M7 1.5h1M2 2.5h1M5 2.5h6M2 3.5h1M7 3.5h1M1 4.5h1M3 4.5h1M5 4.5h6M1 5.5h3M10 5.5h1M2 6.5h1M6 6.5h1M8 6.5h1M10 6.5h1M2 7.5h1M5 7.5h1M8 7.5h1M1 8.5h3M6 8.5h1M8 8.5h1M1 9.5h1M5 9.5h6M3 10.5h1M7 10.5h1M1 11.5h2M6 11.5h1M9 11.5h1M4 12.5h2M10 12.5h1"/><path id="g7f13" d="M9 1.5h2M2 2.5h1M5 2.5h4M2 3.5h1M5 3.5h1M7 3.5h1M9 3.5h1M1 4.5h1M3 4.5h1M5 4.5h6M0 5.5h4M6 5.5h1M2 6.5h1M4 6.5h7M1 7.5h1M6 7.5h1M1 8.5h3M6 8.5h5M5 9.5h2M9 9.5h1M3 10.5h1M5 10.5h1M7 10.5h3M0 11.5h3M4 11.5h1M7 11.5h3M5 12.5h2M10 12.5h1"/><path id="g7f51" d="M1 2.5h10M1 3.5h1M10 3.5h1M1 4.5h1M5 4.5h1M8 4.5h1M10 4.5h1M1 5.5h1M3 5.5h2M6 5.5h1M8 5.5h1M10 5.5h1M1 6.5h1M3 6.5h2M7 6.5h2M10 6.5h1M1 7.5h1M4 7.5h1M7 7.5h1M10 7.5h1M1 8.5h1M3 8.5h1M5 8.5h1M7 8.5h2M10 8.5h1M1 9.5h1M3 9.5h1M5 9.5h2M8 9.5h1M10 9.5h1M1 10.5h2M6 10.5h1M10 10.5h1M1 11.5h1M10 11.5h1M1 12.5h1M8 12.5h3"/><path id="g7f6e" d="M1 1.5h10M1 2.5h1M4 2.5h1M7 2.5h1M10 2.5h1M1 3.5h10M5 4.5h1M1 5.5h10M2 6.5h8M2 7.5h1M9 7.5h1M2 8.5h8M2 9.5h8M2 10.5h8M2 11.5h1M9 11.5h1M1 12.5h10"/><path id="g8282" d="M3 1.5h1M8 1.5h1M1 2.5h10M3 3.5h1M8 3.5h1M3 4.5h1M8 4.5h1M1 6.5h9M4 7.5h1M9 7.5h1M4 8.5h1M9 8.5h1M4 9.5h1M9 9.5h1M4 10.5h1M7 10.5h3M4 11.5h1M4 12.5h1"/><path id="g8868" d="M1 2.5h10M5 3.5h1M2 4.5h8M5 5.5h1M1 6.5h10M4 7.5h1M6 7.5h1M3 8.5h1M7 8.5h1M9 8.5h1M1 9.5h3M7 9.5h2M3 10.5h1M8 10.5h1M3 11.5h4M9 11.5h2M3 12.5h1"/><path id="g8981" d="M1 1.5h10M4 2.5h1M7 2.5h1M1 3.5h10M1 4.5h1M4 4.5h1M7 4.5h1M10 4.5h1M1 5.5h1M4 5.5h1M7 5.5h1M10 5.5h1M1 6.5h10M4 7.5h1M1 8.5h10M3 9.5h1M8 9.5h1M2 10.5h3M7 10.5h1M5 11.5h4M1 12.5h4M9 12.5h2"/><path id="g89c4" d="M2 .5h1M6 .5h5M2 1.5h1M6 1.5h1M10 1.5h1M1 2.5h4M6 2.5h1M10 2.5h1M2 3.5h1M6 3.5h1M8 3.5h1M10 3.5h1M2 4.5h1M6 4.5h1M8 4.5h1M10 4.5h1M1 5.5h4M6 5.5h1M8 5.5h1M10 5.5h1M2 6.5h1M6 6.5h1M8 6.5h1M10 6.5h1M2 7.5h2M8 7.5h1M2 8.5h1M4 8.5h1M7 8.5h2M2 9.5h1M4 9.5h1M7 9.5h2M10 9.5h1M1 10.5h1M6 10.5h1M8 10.5h1M10 10.5h1M5 11.5h1M8 11.5h3"/><path id="g89c6" d="M2 .5h1M5 .5h6M2 1.5h1M5 1.5h1M10 1.5h1M1 2.5h5M8 2.5h1M10 2.5h1M3 3.5h1M5 3.5h1M8 3.5h1M10 3.5h1M3 4.5h1M5 4.5h1M8 4.5h1M10 4.5h1M2 5.5h1M5 5.5h1M7 5.5h1M10 5.5h1M1 6.5h3M5 6.5h1M7 6.5h1M10 6.5h1M1 7.5h2M4 7.5h1M7 7.5h2M2 8.5h1M7 8.5h2M2 9.5h1M6 9.5h1M8 9.5h1M11 9.5h1M2 10.5h1M5 10.5h2M8 10.5h1M10 10.5h1M2 11.5h1M8 11.5h3"/><path id="g89c8" d="M4 .5h1M7 .5h1M1 1.5h1M4 1.5h1M7 1.5h4M1 2.5h1M4 2.5h1M6 2.5h1M8 2.5h1M1 3.5h1M4 3.5h1M6 3.5h1M8 3.5h2M4 4.5h1M9 4.5h1M2 5.5h8M2 6.5h1M9 6.5h1M2 7.5h1M5 7.5h1M9 7.5h1M2 8.5h1M5 8.5h1M9 8.5h1M5 9.5h2M3 10.5h2M6 10.5h1M10 10.5h1M1 11.5h2M7 11.5h4"/><path id="g89e3" d="M2 1.5h1M2 2.5h3M6 2.5h5M1 3.5h1M4 3.5h1M7 3.5h1M10 3.5h1M1 4.5h5M7 4.5h1M10 4.5h1M1 5.5h1M3 5.5h1M5 5.5h2M9 5.5h2M1 6.5h1M3 6.5h1M5 6.5h1M7 6.5h2M1 7.5h5M7 7.5h4M1 8.5h1M3 8.5h1M5 8.5h2M8 8.5h1M1 9.5h6M8 9.5h1M1 10.5h1M3 10.5h1M5 10.5h7M1 11.5h1M3 11.5h1M5 11.5h1M8 11.5h1M0 12.5h1M4 12.5h1M8 12.5h1"/><path id="g8b66" d="M1 .5h5M7 .5h1M2 1.5h1M4 1.5h1M7 1.5h4M1 2.5h7M9 2.5h1M0 3.5h4M5 3.5h1M8 3.5h2M1 4.5h3M5 4.5h1M7 4.5h1M9 4.5h2M4 5.5h2M1 6.5h10M2 7.5h8M2 8.5h8M2 9.5h8M2 10.5h1M9 10.5h1M2 11.5h8"/><path id="g8bae" d="M2 2.5h1M4 2.5h1M7 2.5h1M10 2.5h1M5 3.5h1M7 3.5h1M10 3.5h1M5 4.5h1M9 4.5h1M1 5.5h2M5 5.5h1M9 5.5h1M2 6.5h1M5 6.5h1M9 6.5h1M2 7.5h1M6 7.5h1M8 7.5h1M2 8.5h1M6 8.5h1M8 8.5h1M2 9.5h1M7 9.5h1M2 10.5h3M6 10.5h3M2 11.5h2M5 11.5h2M9 11.5h1M4 12.5h1M10 12.5h1"/><path id="g8bba" d="M7 1.5h1M2 2.5h1M7 2.5h2M3 3.5h1M6 3.5h1M8 3.5h1M5 4.5h1M9 4.5h1M0 5.5h3M4 5.5h2M10 5.5h1M2 6.5h1M5 6.5h1M9 6.5h1M2 7.5h1M5 7.5h1M8 7.5h2M2 8.5h1M6 8.5h2M2 9.5h1M6 9.5h1M2 10.5h1M4 10.5h2M10 10.5h1M2 11.5h2M5 11.5h1M10 11.5h1M2 12.5h1M6 12.5h5"/><path id="g8bbe" d="M1 1.5h2M6 1.5h4M2 2.5h2M6 2.5h1M9 2.5h1M6 3.5h1M9 3.5h1M5 4.5h1M9 4.5h1M1 5.5h2M4 5.5h2M9 5.5h2M2 6.5h1M2 7.5h1M5 7.5h6M2 8.5h1M5 8.5h1M9 8.5h1M2 9.5h1M6 9.5h1M9 9.5h1M2 10.5h3M7 10.5h2M2 11.5h2M6 11.5h4M4 12.5h2M9 12.5h2"/><path id="g8bc9" d="M9 1.5h1M2 2.5h1M5 2.5h4M3 3.5h1M5 3.5h1M5 4.5h1M0 5.5h3M5 5.5h6M2 6.5h1M5 6.5h1M8 6.5h1M2 7.5h1M5 7.5h1M8 7.5h1M2 8.5h1M5 8.5h1M7 8.5h2M2 9.5h1M5 9.5h1M8 9.5h3M2 10.5h4M8 10.5h1M2 11.5h1M4 11.5h1M8 11.5h1M4 12.5h1M8 12.5h1"/><path id="g8bca" d="M7 1.5h1M2 2.5h1M7 2.5h2M3 3.5h1M6 3.5h1M9 3.5h1M5 4.5h1M9 4.5h2M1 5.5h2M4 5.5h1M7 5.5h1M2 6.5h1M6 6.5h1M2 7.5h1M5 7.5h1M8 7.5h1M2 8.5h1M7 8.5h1M10 8.5h1M2 9.5h1M5 9.5h2M10 9.5h1M2 10.5h3M8 10.5h2M2 11.5h2M7 11.5h2M5 12.5h2"/><path id="g8bdd" d="M9 1.5h2M2 2.5h1M4 2.5h5M7 3.5h1M7 4.5h1M1 5.5h2M4 5.5h8M2 6.5h1M7 6.5h1M2 7.5h1M7 7.5h1M2 8.5h1M5 8.5h6M2 9.5h1M5 9.5h1M10 9.5h1M2 10.5h4M10 10.5h1M2 11.5h2M5 11.5h1M10 11.5h1M2 12.5h1M5 12.5h6"/><path id="g8c01" d="M6 1.5h1M8 1.5h1M2 2.5h1M5 2.5h1M8 2.5h1M5 3.5h6M5 4.5h1M8 4.5h1M1 5.5h2M4 5.5h2M8 5.5h1M2 6.5h1M5 6.5h6M2 7.5h1M5 7.5h1M8 7.5h1M2 8.5h1M5 8.5h6M2 9.5h1M5 9.5h1M8 9.5h1M2 10.5h2M5 10.5h1M8 10.5h1M2 11.5h1M5 11.5h6M5 12.5h1"/><path id="g8c61" d="M4 1.5h1M3 2.5h5M2 3.5h1M6 3.5h1M1 4.5h9M2 5.5h1M5 5.5h1M9 5.5h1M2 6.5h8M2 7.5h2M5 7.5h1M9 7.5h1M1 8.5h1M4 8.5h5M2 9.5h2M6 9.5h1M8 9.5h1M4 10.5h2M7 10.5h1M9 10.5h1M1 11.5h3M6 11.5h1M10 11.5h1M4 12.5h3"/><path id="g8d8b" d="M3 1.5h1M7 1.5h1M3 2.5h1M7 2.5h3M1 3.5h4M6 3.5h1M9 3.5h1M3 4.5h1M5 4.5h2M9 4.5h1M1 5.5h10M3 6.5h1M10 6.5h1M1 7.5h1M3 7.5h8M1 8.5h1M3 8.5h1M10 8.5h1M1 9.5h1M3 9.5h1M6 9.5h5M1 10.5h3M1 11.5h1M3 11.5h1M0 12.5h1M4 12.5h7"/><path id="g8fc7" d="M1 1.5h1M9 1.5h1M2 2.5h1M9 2.5h1M2 3.5h1M4 3.5h7M9 4.5h1M9 5.5h1M1 6.5h2M5 6.5h1M9 6.5h1M2 7.5h1M6 7.5h1M9 7.5h1M2 8.5h1M9 8.5h1M2 9.5h1M9 9.5h1M2 10.5h1M7 10.5h2M1 11.5h1M3 11.5h1M4 12.5h7"/><path id="g91cf" d="M2 1.5h8M2 2.5h1M9 2.5h1M2 3.5h8M2 4.5h8M1 5.5h10M2 6.5h8M2 7.5h1M5 7.5h1M9 7.5h1M2 8.5h8M2 9.5h8M2 10.5h8M5 11.5h1M1 12.5h10"/><path id="g9501" d="M2 .5h1M8 .5h1M10 .5h1M1 1.5h4M6 1.5h1M8 1.5h1M10 1.5h1M1 2.5h1M6 2.5h1M8 2.5h2M0 3.5h1M6 3.5h5M1 4.5h5M10 4.5h1M2 5.5h1M5 5.5h1M8 5.5h1M10 5.5h1M1 6.5h5M8 6.5h1M10 6.5h1M2 7.5h1M5 7.5h1M8 7.5h1M10 7.5h1M2 8.5h1M5 8.5h1M7 8.5h1M10 8.5h1M2 9.5h1M4 9.5h1M7 9.5h1M2 10.5h2M6 10.5h1M9 10.5h2M2 11.5h1M5 11.5h1M10 11.5h1"/><path id="g95f4" d="M2 2.5h1M4 2.5h7M10 3.5h1M1 4.5h1M10 4.5h1M1 5.5h1M4 5.5h4M10 5.5h1M1 6.5h1M4 6.5h1M7 6.5h1M10 6.5h1M1 7.5h1M4 7.5h4M10 7.5h1M1 8.5h1M4 8.5h1M7 8.5h1M10 8.5h1M1 9.5h1M4 9.5h1M7 9.5h1M10 9.5h1M1 10.5h1M4 10.5h4M10 10.5h1M1 11.5h1M10 11.5h1M1 12.5h1M9 12.5h2"/><path id="g9635" d="M7 1.5h1M1 2.5h3M7 2.5h1M1 3.5h1M3 3.5h1M5 3.5h6M1 4.5h1M3 4.5h1M6 4.5h1M1 5.5h1M3 5.5h1M6 5.5h1M8 5.5h1M1 6.5h1M3 6.5h1M5 6.5h6M1 7.5h1M3 7.5h1M8 7.5h1M1 8.5h1M3 8.5h1M8 8.5h1M1 9.5h3M8 9.5h1M1 10.5h1M5 10.5h7M1 11.5h1M8 11.5h1M1 12.5h1M8 12.5h1"/><path id="g9762" d="M1 2.5h10M5 3.5h1M1 4.5h10M1 5.5h1M4 5.5h1M7 5.5h1M10 5.5h1M1 6.5h1M4 6.5h1M7 6.5h1M10 6.5h1M1 7.5h1M4 7.5h4M10 7.5h1M1 8.5h1M4 8.5h1M7 8.5h1M10 8.5h1M1 9.5h1M4 9.5h4M10 9.5h1M1 10.5h1M4 10.5h1M7 10.5h1M10 10.5h1M1 11.5h10M1 12.5h1M10 12.5h1"/><path id="h4ea4" d="M6 .5h1M7 1.5h1M1 2.5h12M4 4.5h1M9 4.5h2M3 5.5h1M10 5.5h2M1 6.5h2M4 6.5h1M9 6.5h1M11 6.5h2M4 7.5h2M9 7.5h1M5 8.5h1M8 8.5h1M6 9.5h3M6 10.5h2M5 11.5h2M8 11.5h2M2 12.5h3M9 12.5h3M1 13.5h2M12 13.5h1"/><path id="h5168" d="M7 .5h1M6 1.5h2M5 2.5h1M8 2.5h1M4 3.5h2M8 3.5h2M3 4.5h2M10 4.5h1M1 5.5h2M11 5.5h2M1 6.5h1M3 6.5h8M12 6.5h1M6 7.5h2M6 8.5h2M3 9.5h8M6 10.5h2M6 11.5h2M1 12.5h12"/><path id="h5206" d="M4 2.5h1M9 2.5h1M4 3.5h1M9 3.5h2M3 4.5h1M10 4.5h1M2 5.5h2M11 5.5h1M1 6.5h2M11 6.5h2M1 7.5h1M3 7.5h8M12 7.5h1M5 8.5h1M10 8.5h1M5 9.5h1M10 9.5h1M5 10.5h1M10 10.5h1M4 11.5h2M10 11.5h1M4 12.5h1M10 12.5h1M3 13.5h1M10 13.5h1M1 14.5h2M7 14.5h3"/><path id="h5de5" d="M1 2.5h12M6 3.5h2M6 4.5h2M6 5.5h2M6 6.5h2M6 7.5h2M6 8.5h2M6 9.5h2M6 10.5h2M6 11.5h2M1 12.5h12"/><path id="h6280" d="M2 1.5h2M9 1.5h1M2 2.5h2M9 2.5h1M2 3.5h2M5 3.5h8M1 4.5h4M9 4.5h1M2 5.5h2M9 5.5h1M2 6.5h2M9 6.5h1M2 7.5h2M6 7.5h7M2 8.5h3M6 8.5h1M11 8.5h1M1 9.5h3M7 9.5h1M11 9.5h1M2 10.5h2M7 10.5h1M10 10.5h1M2 11.5h2M8 11.5h2M2 12.5h2M8 12.5h2M2 13.5h2M6 13.5h2M10 13.5h2M1 14.5h2M5 14.5h1M11 14.5h2"/><path id="h672f" d="M6 1.5h2M6 2.5h2M9 2.5h2M6 3.5h2M10 3.5h2M6 4.5h2M1 5.5h12M6 6.5h2M5 7.5h4M5 8.5h5M4 9.5h1M6 9.5h2M9 9.5h2M3 10.5h1M6 10.5h2M10 10.5h2M2 11.5h1M6 11.5h2M11 11.5h2M1 12.5h1M6 12.5h2M12 12.5h1M6 13.5h2M6 14.5h2"/><path id="h6765" d="M6 1.5h2M6 2.5h2M1 3.5h12M3 4.5h1M6 4.5h2M3 5.5h1M6 5.5h2M10 5.5h1M3 6.5h2M6 6.5h2M10 6.5h1M4 7.5h1M6 7.5h2M9 7.5h1M1 8.5h12M5 9.5h4M4 10.5h6M3 11.5h2M6 11.5h2M9 11.5h2M2 12.5h2M6 12.5h2M10 12.5h2M1 13.5h2M6 13.5h2M11 13.5h2M6 14.5h2"/><path id="h6790" d="M3 1.5h1M11 1.5h1M3 2.5h1M7 2.5h4M3 3.5h1M7 3.5h1M1 4.5h5M7 4.5h1M3 5.5h1M7 5.5h1M2 6.5h2M7 6.5h6M2 7.5h3M7 7.5h1M10 7.5h1M2 8.5h2M5 8.5h1M7 8.5h1M10 8.5h1M1 9.5h1M3 9.5h1M7 9.5h1M10 9.5h1M1 10.5h1M3 10.5h1M7 10.5h1M10 10.5h1M3 11.5h1M6 11.5h1M10 11.5h1M3 12.5h1M6 12.5h1M10 12.5h1M3 13.5h1M6 13.5h1M10 13.5h1M3 14.5h1M10 14.5h1"/><path id="h6d41" d="M8 1.5h1M2 2.5h2M8 2.5h1M3 3.5h10M7 4.5h1M10 4.5h1M6 5.5h1M11 5.5h1M1 6.5h2M5 6.5h8M5 7.5h2M12 7.5h1M6 8.5h1M8 8.5h1M11 8.5h1M3 9.5h1M6 9.5h1M8 9.5h1M11 9.5h1M3 10.5h1M6 10.5h1M8 10.5h1M11 10.5h1M2 11.5h2M5 11.5h1M8 11.5h1M11 11.5h1M2 12.5h1M5 12.5h1M8 12.5h1M11 12.5h2M1 13.5h2M5 13.5h1M8 13.5h1M11 13.5h2M1 14.5h1M4 14.5h1M8 14.5h1M11 14.5h2"/><path id="h70b9" d="M6 1.5h1M6 2.5h1M6 3.5h7M6 4.5h1M6 5.5h1M2 6.5h10M2 7.5h1M11 7.5h1M2 8.5h1M11 8.5h1M2 9.5h10M2 11.5h1M5 11.5h1M8 11.5h1M11 11.5h1M2 12.5h1M5 12.5h1M8 12.5h1M11 12.5h1M1 13.5h1M5 13.5h1M8 13.5h1M12 13.5h1M1 14.5h1M5 14.5h1M12 14.5h1"/><path id="h7248" d="M1 1.5h1M4 1.5h1M11 1.5h2M1 2.5h1M4 2.5h1M7 2.5h4M1 3.5h1M4 3.5h1M7 3.5h1M1 4.5h1M4 4.5h1M7 4.5h1M1 5.5h5M7 5.5h6M1 6.5h1M7 6.5h2M12 6.5h1M1 7.5h1M7 7.5h2M12 7.5h1M1 8.5h4M7 8.5h1M9 8.5h1M11 8.5h1M1 9.5h1M4 9.5h1M7 9.5h1M9 9.5h1M11 9.5h1M1 10.5h1M4 10.5h1M7 10.5h1M9 10.5h3M1 11.5h1M4 11.5h1M6 11.5h1M10 11.5h1M1 12.5h1M4 12.5h1M6 12.5h1M9 12.5h3M1 13.5h1M4 13.5h1M6 13.5h1M8 13.5h2M11 13.5h2M0 14.5h1M4 14.5h1M6 14.5h3M12 14.5h1"/><path id="h79d1" d="M11 1.5h1M1 2.5h4M7 2.5h1M11 2.5h1M3 3.5h1M8 3.5h2M11 3.5h1M3 4.5h1M11 4.5h1M1 5.5h5M11 5.5h1M3 6.5h1M7 6.5h1M11 6.5h1M2 7.5h3M8 7.5h1M11 7.5h1M2 8.5h2M5 8.5h1M11 8.5h1M1 9.5h1M3 9.5h1M5 9.5h1M11 9.5h2M1 10.5h1M3 10.5h1M7 10.5h6M0 11.5h1M3 11.5h1M6 11.5h2M11 11.5h1M3 12.5h1M11 12.5h1M3 13.5h1M11 13.5h1M3 14.5h1M11 14.5h1"/><path id="h7a0b" d="M2 2.5h3M6 2.5h7M1 3.5h1M3 3.5h1M6 3.5h1M12 3.5h1M3 4.5h1M6 4.5h1M12 4.5h1M1 5.5h12M3 6.5h1M2 7.5h2M2 8.5h3M6 8.5h7M2 9.5h2M5 9.5h1M9 9.5h1M1 10.5h1M3 10.5h1M9 10.5h1M0 11.5h2M3 11.5h1M6 11.5h7M3 12.5h1M9 12.5h1M3 13.5h1M9 13.5h1M3 14.5h1M5 14.5h8"/><path id="h7cfb" d="M9 1.5h3M2 2.5h7M5 3.5h1M4 4.5h2M9 4.5h2M3 5.5h2M8 5.5h2M2 6.5h6M5 7.5h2M9 7.5h2M3 8.5h2M10 8.5h2M2 9.5h8M11 9.5h1M7 10.5h1M12 10.5h1M3 11.5h2M7 11.5h1M9 11.5h2M2 12.5h2M7 12.5h1M10 12.5h2M1 13.5h2M7 13.5h1M11 13.5h2M5 14.5h3"/><path id="h7edc" d="M3 1.5h1M8 1.5h1M3 2.5h1M7 2.5h2M2 3.5h2M7 3.5h6M2 4.5h1M6 4.5h2M11 4.5h1M1 5.5h1M4 5.5h3M8 5.5h1M10 5.5h2M1 6.5h4M8 6.5h3M3 7.5h1M7 7.5h2M10 7.5h2M2 8.5h1M5 8.5h2M11 8.5h2M1 9.5h4M7 9.5h5M1 10.5h1M7 10.5h1M11 10.5h1M7 11.5h1M11 11.5h1M2 12.5h3M7 12.5h1M11 12.5h1M1 13.5h2M7 13.5h5M7 14.5h1M11 14.5h1"/><path id="h7edf" d="M3 1.5h1M8 1.5h2M3 2.5h1M9 2.5h1M2 3.5h1M6 3.5h7M2 4.5h1M4 4.5h1M8 4.5h1M1 5.5h1M4 5.5h1M7 5.5h2M11 5.5h1M1 6.5h3M7 6.5h1M11 6.5h1M3 7.5h1M5 7.5h8M2 8.5h1M7 8.5h1M10 8.5h1M12 8.5h1M1 9.5h4M7 9.5h1M10 9.5h1M1 10.5h2M7 10.5h1M10 10.5h1M7 11.5h1M10 11.5h1M3 12.5h2M6 12.5h2M10 12.5h1M12 12.5h1M1 13.5h2M6 13.5h1M10 13.5h1M12 13.5h1M5 14.5h1M10 14.5h3"/><path id="h7f51" d="M1 2.5h12M1 3.5h1M12 3.5h1M1 4.5h1M6 4.5h1M10 4.5h1M12 4.5h1M1 5.5h1M3 5.5h1M5 5.5h1M7 5.5h1M9 5.5h1M12 5.5h1M1 6.5h1M3 6.5h1M5 6.5h1M7 6.5h1M9 6.5h1M12 6.5h1M1 7.5h1M4 7.5h2M8 7.5h2M12 7.5h1M1 8.5h1M5 8.5h1M9 8.5h1M12 8.5h1M1 9.5h1M4 9.5h2M8 9.5h2M12 9.5h1M1 10.5h1M4 10.5h1M6 10.5h1M8 10.5h1M10 10.5h1M12 10.5h1M1 11.5h1M3 11.5h1M7 11.5h1M10 11.5h1M12 11.5h1M1 12.5h3M7 12.5h1M12 12.5h1M1 13.5h1M12 13.5h1M1 14.5h1M10 14.5h3"/><path id="h8282" d="M4 1.5h1M9 1.5h1M4 2.5h1M9 2.5h1M1 3.5h12M4 4.5h1M9 4.5h1M1 6.5h11M5 7.5h1M11 7.5h1M5 8.5h1M11 8.5h1M5 9.5h1M11 9.5h1M5 10.5h1M11 10.5h1M5 11.5h1M11 11.5h1M5 12.5h1M8 12.5h4M5 13.5h1M5 14.5h1"/><path id="h9762" d="M1 2.5h12M6 3.5h1M6 4.5h1M1 5.5h12M1 6.5h1M4 6.5h1M8 6.5h1M11 6.5h2M1 7.5h1M4 7.5h1M8 7.5h1M11 7.5h2M1 8.5h1M4 8.5h5M11 8.5h2M1 9.5h1M4 9.5h1M8 9.5h1M11 9.5h2M1 10.5h1M4 10.5h5M11 10.5h2M1 11.5h1M4 11.5h1M8 11.5h1M11 11.5h2M1 12.5h1M4 12.5h1M8 12.5h1M11 12.5h2M1 13.5h12M1 14.5h1M11 14.5h2"/><path id="k59cb" d="M3 .5h1M11 .5h1M3 1.5h1M11 1.5h1M3 2.5h1M10 2.5h2M3 3.5h1M10 3.5h1M13 3.5h2M1 4.5h6M9 4.5h2M14 4.5h2M2 5.5h2M6 5.5h1M9 5.5h1M15 5.5h1M2 6.5h1M6 6.5h1M8 6.5h1M11 6.5h6M2 7.5h1M5 7.5h12M2 8.5h1M5 8.5h2M16 8.5h1M1 9.5h2M5 9.5h1M1 10.5h2M5 10.5h1M8 10.5h8M2 11.5h4M8 11.5h2M15 11.5h1M3 12.5h2M8 12.5h2M15 12.5h1M4 13.5h2M8 13.5h2M15 13.5h1M3 14.5h4M8 14.5h2M15 14.5h1M2 15.5h2M6 15.5h1M8 15.5h2M15 15.5h1M1 16.5h2M8 16.5h8M1 17.5h1M8 17.5h2M15 17.5h1"/><path id="k5f00" d="M2 1.5h15M5 2.5h2M12 2.5h1M5 3.5h2M12 3.5h1M5 4.5h2M12 4.5h1M5 5.5h2M12 5.5h1M5 6.5h2M12 6.5h1M1 7.5h16M5 8.5h2M12 8.5h1M5 9.5h1M12 9.5h1M5 10.5h1M12 10.5h1M4 11.5h2M12 11.5h1M4 12.5h2M12 12.5h1M3 13.5h2M12 13.5h1M2 14.5h2M12 14.5h1M1 15.5h3M12 15.5h1M12 16.5h1"/></defs></svg>
<div id="title">
  <div id="qat"><svg class="abs" style="left:-40px;top:-2px" width="130" height="27" viewBox="0 0 130 27"><defs><linearGradient id="gQat" x1="0" y1="0" x2="0" y2="1"><stop offset="0" stop-color="#e8edf5"/><stop offset="1" stop-color="#d0d9e7"/></linearGradient></defs><path d="M38.600 2.500H113A10.500 10.500 0 0 1 113 23.500H48A26 26 0 0 0 38.600 2.500z" fill="url(#gQat)" stroke="#aebbd0"/></svg>
    <svg class="abs" style="left:14px;top:3px" width="16" height="16" viewBox="0 0 16 16"><path d="M2.5 .5h8l3 3v12h-11z" fill="#fff" stroke="#6f7f98"/><path d="M10.5 .5v3h3" fill="#dfe6f0" stroke="#6f7f98"/></svg>
    <svg class="abs" style="left:34px;top:3px" width="18" height="16" viewBox="0 0 18 16"><path d="M.5 4.500h5l1.500 1.500h7.500v9h-14z" fill="#f2c95a" stroke="#b8882a"/><path d="M.5 7.500h14v7h-14z" fill="#f7dc84" stroke="#b8882a"/><path d="M12 4l4-3m-3 0h3v3" fill="none" stroke="#3a3a3a"/></svg>
    <svg class="abs" style="left:57px;top:3px" width="16" height="16" viewBox="0 0 16 16"><rect x=".5" y=".5" width="15" height="15" fill="#4b43c7" stroke="#2b2592"/><rect x="3" y="1" width="10" height="6" fill="#e9ecf6"/><rect x="4" y="10" width="8" height="5" fill="#c9cde6"/><rect x="5" y="11" width="3" height="3" fill="#222"/></svg>
  </div>
  <div class="txt"><span style="left:450px"><i>分<svg><use href="#h5206"/></svg></i><i>析<svg><use href="#h6790"/></svg></i><i>工<svg><use href="#h5de5"/></svg></i><i>程<svg><use href="#h7a0b"/></svg></i></span><span style="left:519px"> 1</span><span style="left:530px"> -</span><span style="left:539px"> <i>全<svg><use href="#h5168"/></svg></i><i>面<svg><use href="#h9762"/></svg></i><i>分<svg><use href="#h5206"/></svg></i><i>析<svg><use href="#h6790"/></svg></i></span><span style="left:606px"> -</span><span style="left:617px"> <i>科<svg><use href="#h79d1"/></svg></i><i>来<svg><use href="#h6765"/></svg></i><i>网<svg><use href="#h7f51"/></svg></i><i>络<svg><use href="#h7edc"/></svg></i><i>分<svg><use href="#h5206"/></svg></i><i>析<svg><use href="#h6790"/></svg></i><i>系<svg><use href="#h7cfb"/></svg></i><i>统<svg><use href="#h7edf"/></svg></i></span><span style="left:746px">2010</span><span style="left:778px"> <i>技<svg><use href="#h6280"/></svg></i><i>术<svg><use href="#h672f"/></svg></i><i>交<svg><use href="#h4ea4"/></svg></i><i>流<svg><use href="#h6d41"/></svg></i><i>版<svg><use href="#h7248"/></svg></i></span><span style="left:858px">(50</span><span style="left:882px"> <i>节<svg><use href="#h8282"/></svg></i><i>点<svg><use href="#h70b9"/></svg></i></span><span style="left:913px">)</span></div>
  <!-- window buttons -->
  <div class="abs" style="left:1302px;top:14px;width:8px;height:2px;background:#a8abb3"></div>
  <div class="abs" style="left:1326px;top:9px;width:8px;height:6px;border:1px solid #a8abb3;border-top-width:2px"></div>
  <div class="abs" style="left:1329px;top:7px;width:8px;height:6px;border:1px solid #a8abb3;border-top-width:2px;border-left:none;border-bottom:none"></div>
  <svg class="abs" style="left:1349px;top:7px" width="10" height="9" viewBox="0 0 10 9"><path d="M1 0l8 9M9 0L1 9" stroke="#a8abb3" stroke-width="2"/></svg>
</div>
<svg id="orb" style="z-index:5" viewBox="0 0 39 39" width="39" height="39">
  <defs>
    <radialGradient id="og" cx=".5" cy=".25" r=".8"><stop offset="0" stop-color="#9fd0f0"/><stop offset=".45" stop-color="#4f97d0"/><stop offset="1" stop-color="#154f90"/></radialGradient>
    <linearGradient id="orr" x1="0" y1="0" x2="0" y2="1"><stop offset="0" stop-color="#f4f6fa"/><stop offset="1" stop-color="#b9bfcc"/></linearGradient>
  </defs>
  <circle cx="19.5" cy="19.5" r="18.500" fill="url(#orr)" stroke="#80869a" stroke-width="1"/>
  <circle cx="19.5" cy="19.5" r="16.200" fill="url(#og)" stroke="#5d8fc8" stroke-width=".6"/>
  <path d="M4.500 20.500C9 18 13 13.500 20 12.500c6-.8 10 4 13.500 9.500l-3.200 1.600C27.500 18.500 24 15.500 19.500 16.300c-4 .7-7.500 4.200-11.800 6.200z" fill="#fff"/>
  <path d="M8.500 23.500c5 3.500 12.500 4 17.500-1.800l-1.800-.5c-4 4.200-9.800 4.300-13.300 1.600z" fill="#fff"/>
  <path d="M13.500 19.800c3.200 2.600 7.800 2.400 10.500-.6l-1.500-.5c-2.200 2-5.200 2-7.600.4z" fill="#fff"/>
  <path d="M17.500 17c1.800 1 4 1 5.500 0" stroke="#fff" stroke-width="1" fill="none"/>
</svg>
<div id="tabrow">
  <div class="rtab on" style="left:48px;width:47px"><i>分<svg><use href="#g5206"/></svg></i><i>析<svg><use href="#g6790"/></svg></i></div>
  <div class="rtab" style="left:101px;width:47px"><i>系<svg><use href="#g7cfb"/></svg></i><i>统<svg><use href="#g7edf"/></svg></i></div>
  <div class="rtab" style="left:154px;width:47px"><i>工<svg><use href="#g5de5"/></svg></i><i>具<svg><use href="#g5177"/></svg></i></div>
  <div class="rtab" style="left:207px;width:47px"><i>视<svg><use href="#g89c6"/></svg></i><i>图<svg><use href="#g56fe"/></svg></i></div>
  <div class="abs" style="left:1330px;top:3px;color:#15428b;font-size:12px;line-height:16px"><i>帮<svg><use href="#g5e2e"/></svg></i><i>助<svg><use href="#g52a9"/></svg></i></div>
</div>
<div id="ribbon">
  <div class="grp" style="left:2px;width:247px">
    <div class="rb" style="left:3px;width:60px"><div class="ic" id="i-pkt"></div><div class="lb"><i>数<svg><use href="#g6570"/></svg></i><i>据<svg><use href="#g636e"/></svg></i><i>包<svg><use href="#g5305"/></svg></i><i>文<svg><use href="#g6587"/></svg></i><i>件<svg><use href="#g4ef6"/></svg></i></div></div>
    <div class="rb" style="left:70px;width:36px"><div class="ic" id="i-flt"></div><div class="lb"><i>过<svg><use href="#g8fc7"/></svg></i><i>滤<svg><use href="#g6ee4"/></svg></i><i>器<svg><use href="#g5668"/></svg></i></div></div>
    <div class="abs" style="left:112px;top:4px;width:1px;height:64px;background:#a9c5e8;border-right:1px solid #eef4fc;width:2px"></div>
    <div class="rb" style="left:124px;width:24px"><div class="ic" id="i-play"></div><div class="lb"><i>开<svg><use href="#g5f00"/></svg></i><i>始<svg><use href="#g59cb"/></svg></i></div></div>
    <div class="rb dis" style="left:166px;width:24px"><div class="ic" id="i-pause"></div><div class="lb"><i>暂<svg><use href="#g6682"/></svg></i><i>停<svg><use href="#g505c"/></svg></i></div></div>
    <div class="rb dis" style="left:208px;width:24px"><div class="ic" id="i-stop"></div><div class="lb"><i>停<svg><use href="#g505c"/></svg></i><i>止<svg><use href="#g6b62"/></svg></i></div></div>
    <div class="cap"><i>导<svg><use href="#g5bfc"/></svg></i><i>入<svg><use href="#g5165"/></svg></i></div>
  </div>
  <div class="grp" style="left:252px;width:187px">
    <div class="rb" style="left:11px;width:24px"><div class="ic" id="i-gen"></div><div class="lb"><i>常<svg><use href="#g5e38"/></svg></i><i>规<svg><use href="#g89c4"/></svg></i></div></div>
    <div class="rb" style="left:46px;width:48px"><div class="ic" id="i-node"></div><div class="lb"><i>节<svg><use href="#g8282"/></svg></i><i>点<svg><use href="#g70b9"/></svg></i><i>分<svg><use href="#g5206"/></svg></i><i>组<svg><use href="#g7ec4"/></svg></i></div></div>
    <div class="rb" style="left:100px;width:36px"><div class="ic" id="i-name"></div><div class="lb"><i>名<svg><use href="#g540d"/></svg></i><i>字<svg><use href="#g5b57"/></svg></i><i>表<svg><use href="#g8868"/></svg></i></div></div>
    <div class="rb" style="left:148px;width:24px"><div class="ic" id="i-alarm"></div><div class="lb"><i>警<svg><use href="#g8b66"/></svg></i><i>报<svg><use href="#g62a5"/></svg></i></div></div>
    <div class="cap"><i>网<svg><use href="#g7f51"/></svg></i><i>络<svg><use href="#g7edc"/></svg></i><i>档<svg><use href="#g6863"/></svg></i><i>案<svg><use href="#g6848"/></svg></i><i>设<svg><use href="#g8bbe"/></svg></i><i>置<svg><use href="#g7f6e"/></svg></i></div>
  </div>
  <div class="grp" style="left:442px;width:224px">
    <div class="rb" style="left:3px;width:48px"><div class="ic" id="i-obj"></div><div class="lb"><i>分<svg><use href="#g5206"/></svg></i><i>析<svg><use href="#g6790"/></svg></i><i>对<svg><use href="#g5bf9"/></svg></i><i>象<svg><use href="#g8c61"/></svg></i></div></div>
    <div class="rb" style="left:57px;width:84px"><div class="ic" id="i-buf"></div><div class="lb"><i>数<svg><use href="#g6570"/></svg></i><i>据<svg><use href="#g636e"/></svg></i><i>包<svg><use href="#g5305"/></svg></i><i>显<svg><use href="#g663e"/></svg></i><i>示<svg><use href="#g793a"/></svg></i><i>缓<svg><use href="#g7f13"/></svg></i><i>存<svg><use href="#g5b58"/></svg></i></div></div>
    <div class="sb" style="left:150px;top:2px;padding-left:17px"><i>日<svg><use href="#g65e5"/></svg></i><i>志<svg><use href="#g5fd7"/></svg></i></div>
    <div class="sb" style="left:150px;top:24px;padding-left:17px"><i>诊<svg><use href="#g8bca"/></svg></i><i>断<svg><use href="#g65ad"/></svg></i></div>
    <div class="sb" style="left:147px;top:46px;padding-left:19px"><i>视<svg><use href="#g89c6"/></svg></i><i>图<svg><use href="#g56fe"/></svg></i><i>显<svg><use href="#g663e"/></svg></i><i>示<svg><use href="#g793a"/></svg></i></div>
    <div class="cap"><i>分<svg><use href="#g5206"/></svg></i><i>析<svg><use href="#g6790"/></svg></i><i>方<svg><use href="#g65b9"/></svg></i><i>案<svg><use href="#g6848"/></svg></i><i>设<svg><use href="#g8bbe"/></svg></i><i>置<svg><use href="#g7f6e"/></svg></i></div>
  </div>
  <div class="grp" style="left:669px;width:150px">
    <div class="rb" style="left:4px;width:60px"><div class="ic" id="i-psave"></div><div class="lb"><i>数<svg><use href="#g6570"/></svg></i><i>据<svg><use href="#g636e"/></svg></i><i>包<svg><use href="#g5305"/></svg></i><i>保<svg><use href="#g4fdd"/></svg></i><i>存<svg><use href="#g5b58"/></svg></i></div></div>
    <div class="rb" style="left:69px;width:72px"><div class="ic" id="i-lsave"></div><div class="lb"><i>日<svg><use href="#g65e5"/></svg></i><i>志<svg><use href="#g5fd7"/></svg></i><i>文<svg><use href="#g6587"/></svg></i><i>件<svg><use href="#g4ef6"/></svg></i><i>保<svg><use href="#g4fdd"/></svg></i><i>存<svg><use href="#g5b58"/></svg></i></div></div>
    <div class="cap"><i>数<svg><use href="#g6570"/></svg></i><i>据<svg><use href="#g636e"/></svg></i><i>存<svg><use href="#g5b58"/></svg></i><i>储<svg><use href="#g50a8"/></svg></i></div>
  </div>
  <div class="grp" style="left:822px;width:108px"><div class="cap"><i>利<svg><use href="#g5229"/></svg></i><i>用<svg><use href="#g7528"/></svg></i><i>率<svg><use href="#g7387"/></svg></i></div></div>
  <div class="grp" style="left:933px;width:108px"><div class="cap"><i>每<svg><use href="#g6bcf"/></svg></i><i>秒<svg><use href="#g79d2"/></svg></i><i>数<svg><use href="#g6570"/></svg></i><i>据<svg><use href="#g636e"/></svg></i><i>包<svg><use href="#g5305"/></svg></i></div></div>
  <div class="grp" style="left:1044px;width:108px"><div class="cap" style="text-align:left;padding-left:4px"><i>流<svg><use href="#g6d41"/></svg></i><i>量<svg><use href="#g91cf"/></svg></i><i>趋<svg><use href="#g8d8b"/></svg></i><i>势<svg><use href="#g52bf"/></svg></i><i>图<svg><use href="#g56fe"/></svg></i><b style="margin-left:4px;font-size:11px">(</b><span style="margin-left:5px"><i>位<svg><use href="#g4f4d"/></svg></i></span><b style="margin-left:4px;font-size:11px">)</b></div></div>
  <div class="grp" style="left:1155px;width:179px">
    <div class="sb" style="left:126px;top:2px;padding-left:19px"><i>导<svg><use href="#g5bfc"/></svg></i><i>出<svg><use href="#g51fa"/></svg></i></div>
    <div class="sb" style="left:126px;top:24px;padding-left:19px"><i>清<svg><use href="#g6e05"/></svg></i><i>空<svg><use href="#g7a7a"/></svg></i></div>
    <div class="sb" style="left:126px;top:46px;padding-left:19px"><i>锁<svg><use href="#g9501"/></svg></i><i>定<svg><use href="#g5b9a"/></svg></i></div>
    <div class="cap"><i>数<svg><use href="#g6570"/></svg></i><i>据<svg><use href="#g636e"/></svg></i><i>包<svg><use href="#g5305"/></svg></i><i>缓<svg><use href="#g7f13"/></svg></i><i>存<svg><use href="#g5b58"/></svg></i> <span style="font-size:11px">(16 MB)</span></div>
  </div>
</div>
<svg class="abs" style="left:0;top:0" width="0" height="0"><defs>
  <linearGradient id="gFold" x1="0" y1="0" x2="0" y2="1"><stop offset="0" stop-color="#fdeab8"/><stop offset="1" stop-color="#f2c466"/></linearGradient>
  <linearGradient id="gFun" x1="0" y1="0" x2="1" y2="0"><stop offset="0" stop-color="#fafafa"/><stop offset=".35" stop-color="#e2e2e2"/><stop offset=".55" stop-color="#a8a8a8"/><stop offset="1" stop-color="#6e6e6e"/></linearGradient>
  <linearGradient id="gPlay" x1="0" y1="0" x2="0" y2="1"><stop offset="0" stop-color="#5fdc5f"/><stop offset=".5" stop-color="#4ccc4c"/><stop offset=".55" stop-color="#3db83d"/><stop offset="1" stop-color="#46c646"/></linearGradient>
  <linearGradient id="gDis" x1="0" y1="0" x2="0" y2="1"><stop offset="0" stop-color="#d3ddec"/><stop offset=".5" stop-color="#c6d2e6"/><stop offset=".58" stop-color="#9fb0cc"/><stop offset="1" stop-color="#c0cde2"/></linearGradient>
  <linearGradient id="gWarn" x1="0" y1="0" x2="0" y2="1"><stop offset="0" stop-color="#ffe600"/><stop offset=".5" stop-color="#fff08a"/><stop offset=".58" stop-color="#ffd800"/><stop offset="1" stop-color="#fff3a0"/></linearGradient>
  <linearGradient id="gHdr" x1="0" y1="0" x2="0" y2="1"><stop offset="0" stop-color="#7fb0f4"/><stop offset="1" stop-color="#3c74d8"/></linearGradient>
  <linearGradient id="gWat" x1="0" y1="0" x2="0" y2="1"><stop offset="0" stop-color="#6fa0dc"/><stop offset="1" stop-color="#2c5ea8"/></linearGradient>
  <linearGradient id="gGlass" x1="0" y1="0" x2="1" y2="0"><stop offset="0" stop-color="#e6edf6"/><stop offset=".45" stop-color="#f6f9fd"/><stop offset=".6" stop-color="#b9c3d3"/><stop offset=".85" stop-color="#cfd8e6"/><stop offset="1" stop-color="#e8eef7"/></linearGradient>
  <linearGradient id="gDoc" x1="0" y1="0" x2="1" y2="1"><stop offset="0" stop-color="#ffffff"/><stop offset="1" stop-color="#d6def0"/></linearGradient>
  <g id="beaker">
    <path d="M1.500 3.500V27q0 3.500 10.500 3.500T22.500 27V3.500" fill="url(#gGlass)" stroke="#8da0bd" stroke-width="1"/>
    <path d="M2 20.500q10-3 20 0V27q0 3-10 3T2 27z" fill="url(#gWat)"/>
    <ellipse cx="12" cy="20.500" rx="10" ry="2" fill="#86b2e6"/>
    <ellipse cx="12" cy="27.500" rx="3" ry="1.800" fill="#cfe2f8" opacity=".8"/>
    <ellipse cx="12" cy="3.500" rx="11.500" ry="2.800" fill="#f7f9fc" stroke="#a7b4c8" stroke-width="1"/>
  </g>
  <g id="floppy">
    <rect x=".5" y=".5" width="14" height="14" fill="#7f63c4" stroke="#5a3fa6"/>
    <rect x="3" y="1" width="9" height="6.500" fill="#f4f2f8"/>
    <path d="M4 3h7M4 5h7" stroke="#c9c4d8" stroke-width=".8"/>
    <rect x="4" y="10" width="7" height="4.500" fill="#e8e4f2"/>
    <rect x="5" y="11" width="2.200" height="3" fill="#4a3590"/>
  </g>
  <g id="cube"><path d="M0 2.500L4.500 0 9 2.500V7L4.500 9.500 0 7z"/><path d="M0 2.500L4.500 5 9 2.500M4.500 5V9.500" fill="none" stroke="#fff" stroke-opacity=".55" stroke-width=".7"/></g>
</defs></svg>
<!-- 1 packet file: folder + cable + gear -->
<svg class="abs" style="left:25px;top:58px" width="32" height="32" viewBox="25 58 32 32">
  <path d="M26.500 61.500q0-1.500 1.500-1.500h7l2.500 2.500h9.500q1.500 0 1.500 1.500V66.500H32.500L26.500 79z" fill="#f9dfa0" stroke="#dba965"/>
  <path d="M27 79.500L32.500 66.500H55L49 79.500z" fill="url(#gFold)" stroke="#d8a45a"/>
  <path d="M28.600 78.300L33.300 67.600H53.300" fill="none" stroke="#fff4d0" stroke-width=".8"/>
  <rect x="26" y="83" width="20" height="3.800" rx="1.900" fill="#35c035" stroke="#1c941c" stroke-width=".8"/>
  <path d="M27.500 84.200h17" stroke="#9aee9a" stroke-width=".8"/>
  <rect x="35.200" y="79.800" width="2.800" height="3" fill="#35c035" stroke="#1c941c" stroke-width=".5"/>
  <rect x="34.500" y="82.200" width="5" height="4.800" fill="#e4e4e4" stroke="#8a8a8a" stroke-width=".8"/>
  <g transform="translate(47.800 80.600) scale(.74)"><path d="M-1.300 -7h2.600l.5 2 1.700.7 1.800-1.100 1.800 1.800-1.100 1.800.7 1.700 2 .5v2.600l-2 .5-.7 1.700 1.100 1.800-1.800 1.800-1.800-1.100-1.700.7-.5 2h-2.600l-.5-2-1.700-.7-1.800 1.100-1.800-1.800 1.100-1.800-.7-1.700-2-.5v-2.600l2-.5.7-1.700-1.100-1.800 1.800-1.800 1.800 1.100 1.700-.7z" fill="#f2d22e" stroke="#b08c06" stroke-width="1.100"/><circle r="2.500" fill="#dbe6f5" stroke="#b08c06" stroke-width="1.100"/></g>
</svg>
<!-- 2 filter funnel -->
<svg class="abs" style="left:78px;top:58px" width="32" height="32" viewBox="78 58 32 32">
  <path d="M79 61.500H109.500L97.500 75V85.500H91.500V75z" fill="url(#gFun)" stroke="#8a8a8a" stroke-width=".8"/>
  <path d="M79 61.500H109.500" stroke="#7a7a7a" stroke-width="1.200"/>
</svg>
<!-- 3 play -->
<svg class="abs" style="left:126px;top:58px" width="32" height="32" viewBox="126 58 32 32">
  <path d="M133.500 61.500L151 73.500 133.500 85.500z" fill="url(#gPlay)" stroke="#2b9a2b" stroke-linejoin="round"/>
</svg>
<!-- 4 pause -->
<svg class="abs" style="left:168px;top:58px" width="32" height="32" viewBox="168 58 32 32">
  <rect x="172.500" y="62.500" width="9" height="23" rx="2.500" fill="url(#gDis)" stroke="#8ea3c8"/>
  <rect x="186.500" y="62.500" width="9" height="23" rx="2.500" fill="url(#gDis)" stroke="#8ea3c8"/>
</svg>
<!-- 5 stop -->
<svg class="abs" style="left:209px;top:58px" width="32" height="32" viewBox="209 58 32 32">
  <rect x="213.500" y="62.500" width="23" height="23" rx="2.500" fill="url(#gDis)" stroke="#8ea3c8"/>
</svg>
<!-- 6 general -->
<svg class="abs" style="left:262px;top:58px" width="32" height="32" viewBox="262 58 32 32">
  <rect x="263.500" y="61.500" width="30" height="24" fill="#f4f6fc" stroke="#6e82b4"/>
  <rect x="264" y="62" width="29" height="4" fill="#a3afd6"/><path d="M264 62.500h29" stroke="#7a8cc6" stroke-width="1"/>
  <rect x="265.500" y="68.500" width="7" height="5" fill="#82b0ee" stroke="#5a86cc" stroke-width=".8"/>
  <rect x="272.500" y="73.500" width="7" height="5" fill="#82b0ee" stroke="#5a86cc" stroke-width=".8"/>
  <path d="M269 74v2M276 79v2" stroke="#444" stroke-width="1"/>
  <rect x="265.500" y="76" width="7" height="2.200" rx="1" fill="#d8d8d8" stroke="#777" stroke-width=".6"/>
  <rect x="272.500" y="81" width="7" height="2.200" rx="1" fill="#d8d8d8" stroke="#777" stroke-width=".6"/>
  <path d="M267 77.100h1M274 82.100h1" stroke="#1fb01f" stroke-width="1.200"/>
  <path d="M282 69.500h6M282 72.500h9M282 75.500h9M282 78.500h9M282 81.500h9" stroke="#8a9ccc" stroke-width="1"/>
</svg>
<!-- 7 node group -->
<svg class="abs" style="left:310px;top:58px" width="32" height="32" viewBox="310 58 32 32">
  <path d="M322.500 74l7-7.500M322.500 75l6 8" stroke="#6e82a8" stroke-width="1.200"/>
  <g><rect x="311.500" y="68.500" width="11" height="12" rx="1" fill="#f4f6fb" stroke="#7f90b0"/><path d="M311.500 72v-2.500q0-1 1-1h9q1 0 1 1V72z" fill="url(#gHdr)"/><path d="M313.500 74.500h7" stroke="#3c4c78"/><path d="M313.500 76.500h7M313.500 78.500h7" stroke="#9aa8cc" stroke-width=".8"/></g>
  <g transform="translate(18 -8)"><rect x="311.500" y="68.500" width="11" height="12" rx="1" fill="#f4f6fb" stroke="#7f90b0"/><path d="M311.500 72v-2.500q0-1 1-1h9q1 0 1 1V72z" fill="url(#gHdr)"/><path d="M313.500 74.500h7" stroke="#3c4c78"/><path d="M313.500 76.500h7M313.500 78.500h7" stroke="#9aa8cc" stroke-width=".8"/></g>
  <g transform="translate(16 7)"><rect x="311.500" y="68.500" width="11" height="12" rx="1" fill="#f4f6fb" stroke="#7f90b0"/><path d="M311.500 72v-2.500q0-1 1-1h9q1 0 1 1V72z" fill="url(#gHdr)"/><path d="M313.500 74.500h7" stroke="#3c4c78"/><path d="M313.500 76.500h7M313.500 78.500h7" stroke="#9aa8cc" stroke-width=".8"/></g>
</svg>
<!-- 8 name table -->
<svg class="abs" style="left:358px;top:58px" width="32" height="32" viewBox="358 58 32 32">
  <path d="M365.500 60.500h22v5l1.500 1.500v13l-6 5.500" fill="#b0bdd0" stroke="#8494b0"/>
  <rect x="363.500" y="62.500" width="22" height="14" fill="#c4d0e0" stroke="#8494b0"/>
  <rect x="361.500" y="64.500" width="22" height="14" fill="#ffffff" stroke="#8494b0"/>
  <circle cx="367.500" cy="69.500" r="3" fill="#8a8a8a"/><circle cx="367.500" cy="69" r="1.800" fill="#d8d8d8"/>
  <path d="M364 75q3.500-3 7 0v1.500h-7z" fill="#d82818"/>
  <path d="M373 67.500h7M373 69.500h7M373 73.500h6" stroke="#6f9be0" stroke-width="1"/>
  <path d="M359.500 75.500h26v11q0 1.500-1.500 1.500h-23q-1.500 0-1.500-1.500z" fill="#e4e4e4" stroke="#a4a4a4"/>
  <path d="M385.500 75.500l4-3.500v10l-4 5z" fill="#9aa6b8"/>
  <path d="M366.800 90.300l1.300-3.700 17.400-19.600 3 2.600-17.400 19.600z" fill="#f3cf78" stroke="#b48a3c" stroke-width=".7"/>
  <path d="M385.500 67l2-2.300q.8-.8 1.800 0l1.400 1.200q.8.800 0 1.700l-2 2.300z" fill="#e26a5a" stroke="#a03a30" stroke-width=".6"/>
  <path d="M384 68.700l3 2.600" stroke="#2f8f4f" stroke-width="1.600"/>
  <path d="M366.800 90.300l.6-1.700 1.100.9z" fill="#333"/>
</svg>
<!-- 9 alarm -->
<svg class="abs" style="left:400px;top:58px" width="32" height="32" viewBox="400 58 32 32">
  <path d="M416 60q.9-1.500 1.800 0L430.300 86q.8 2-1.300 2H403q-2.100 0-1.300-2z" fill="url(#gWarn)" stroke="#d49a5a" stroke-width="1"/>
  <path d="M413.800 68q2.200-3 4.400 0l-1.300 12.500h-1.800z" fill="#3f3f3f"/><path d="M415 68.500l.6 11" stroke="#7a7a7a" stroke-width="1"/>
  <circle cx="416" cy="84" r="2.100" fill="#3a3a3a"/>
</svg>
<!-- 10 analysis objects -->
<svg class="abs" style="left:458px;top:58px" width="32" height="32" viewBox="458 58 32 32">
  <path d="M465 77l9-9M471 81l8-9M474 68l10 12" stroke="#666" stroke-width="1.200"/>
  <use href="#cube" x="469" y="59" fill="#f2c628"/>
  <use href="#cube" x="480" y="64" fill="#f0583a"/>
  <use href="#cube" x="460" y="73" fill="#f0583a"/>
  <use href="#cube" x="469" y="74" fill="#3fae3f"/>
  <use href="#cube" x="479" y="78" fill="#4a78e8"/>
</svg>
<!-- 11 buffer beaker -->
<svg class="abs" style="left:530px;top:58px" width="32" height="32" viewBox="0 0 32 32"><use href="#beaker" x="4" y="0"/></svg>
<!-- 12 packet save -->
<svg class="abs" style="left:691px;top:58px" width="32" height="32" viewBox="0 0 32 32"><use href="#beaker" x="1" y="0"/><use href="#floppy" x="17" y="17"/></svg>
<!-- 13 log save -->
<svg class="abs" style="left:762px;top:58px" width="32" height="32" viewBox="0 0 32 32">
  <path d="M1.500 1.500h16l5 5V31h-21z" fill="url(#gDoc)" stroke="#6c7f9f"/><path d="M17.500 1.500v5h5" fill="#e4eaf4" stroke="#6c7f9f"/>
  <path d="M5 8h11M5 11h14M5 14h14M5 17h14M5 20h11M5 23h11M5 26h11" stroke="#2f5fc0" stroke-width="1"/>
  <use href="#floppy" x="16" y="17"/>
</svg>
<!-- small: log -->
<svg class="abs" style="left:596px;top:59px" width="16" height="16" viewBox="0 0 16 16">
  <path d="M1 1.500h9.500V14H1z" fill="#fff" stroke="#56688c"/><path d="M3 4h5M3 6h5M3 8h4" stroke="#9fb0d0" stroke-width=".8"/><path d="M2.500 11h6" stroke="#e03020" stroke-width="1.200"/>
  <path d="M3.500 10.500l1-2.800 6.500-6 2 2-6.600 6.200z" fill="#f2cc60" stroke="#9a7420" stroke-width=".6"/><path d="M11 1.700l1-.9q.6-.4 1.100 0l.9.900q.4.500 0 1l-1 1z" fill="#d06a4a"/>
</svg>
<!-- small: diagnose -->
<svg class="abs" style="left:596px;top:81px" width="16" height="16" viewBox="0 0 16 16">
  <path d="M1 1h7l3 3v9.500H1z" fill="#fff" stroke="#56688c"/><path d="M8 1v3h3" fill="#dfe6f2" stroke="#56688c" stroke-width=".8"/>
  <path d="M5.500 4.500v6M2.500 7.500h6" stroke="#e83020" stroke-width="2.200"/>
</svg>
<!-- small: view -->
<svg class="abs" style="left:593px;top:103px" width="17" height="16" viewBox="0 0 17 16">
  <path d="M.5 3q0-1.500 1.500-1.500h4l1 1h7.500q1.500 0 1.500 1.500v7.500H.5z" fill="#f2f4f8" stroke="#8a98b4"/>
  <rect x="9" y="1" width="5" height="2" fill="#88a8e0"/>
  <rect x="2.500" y="4.500" width="13" height="10" fill="#fafbfd" stroke="#4fb040" stroke-dasharray="1 1"/>
  <path d="M4 5.500h10" stroke="#445" stroke-width="1.400"/><path d="M4 8.500h10M4 11h10" stroke="#b8c0d0" stroke-width=".8"/>
</svg>
<!-- export / clear / lock -->
<svg class="abs" style="left:0;top:0" width="0" height="0"><defs>
  <g id="stack"><rect x="0" y="0" width="6" height="16" fill="#3f6fd8"/><rect x=".5" y="0" width="5" height="3" fill="#5a8af0"/><rect x=".5" y="3.300" width="5" height="3" fill="#c89850"/><rect x=".5" y="6.600" width="5" height="3" fill="#5a8af0"/><rect x=".5" y="9.900" width="5" height="3" fill="#c89850"/><rect x=".5" y="13.100" width="5" height="2.900" fill="#5a8af0"/><path d="M1 1.200h3M1 4.800h3M1 8h3M1 11.300h3M1 14.500h3" stroke="#fff" stroke-opacity=".7" stroke-width=".8"/></g>
</defs></svg>
<svg class="abs" style="left:1285px;top:58px" width="17" height="16" viewBox="0 0 17 16"><use href="#stack"/><path d="M5 8.500h2.500v-2l3 3-3 3v-2H5z" fill="#2a6ae0" stroke="#1a3a90" stroke-width=".5"/><rect x="8.500" y="7.500" width="8" height="8" fill="#7a6ac8" stroke="#4a3aa0" stroke-width=".8"/><rect x="10" y="8" width="5" height="3.500" fill="#f0f0f8"/><rect x="10.500" y="13" width="4" height="2.500" fill="#d8d8e8"/></svg>
<svg class="abs" style="left:1285px;top:80px" width="17" height="16" viewBox="0 0 17 16"><use href="#stack"/><path d="M6 8h3.500" stroke="#222" stroke-width="1.200"/><path d="M8.500 6l2.500 2-2.500 2z" fill="#222"/><rect x="11" y=".5" width="5" height="15" fill="#fff" stroke="#d0d4dc" stroke-width=".6"/><path d="M11 3.500h5M11 6.500h5M11 9.500h5M11 12.500h5" stroke="#d4d8e0" stroke-width=".8"/></svg>
<svg class="abs" style="left:1285px;top:102px" width="17" height="16" viewBox="0 0 17 16"><use href="#stack"/><path d="M8 9V7.500q0-3 3.500-3t3.500 3V9" stroke="#c8a040" stroke-width="1.600" fill="none"/><rect x="5.500" y="8.500" width="11" height="7.500" rx="1.200" fill="#f0c040" stroke="#a07818" stroke-width=".8"/><path d="M6 9.500h10" stroke="#fae8a0" stroke-width="1"/><path d="M11 10.500v3.500M9.800 11.700h2.400" stroke="#5a4208" stroke-width="1"/></svg>
<!-- help -->
<svg class="abs" style="left:1311px;top:30px" width="16" height="16" viewBox="0 0 16 16"><defs><radialGradient id="gHelp" cx=".4" cy=".3" r=".8"><stop offset="0" stop-color="#7aa8e8"/><stop offset=".6" stop-color="#3a72c8"/><stop offset="1" stop-color="#1f4f9a"/></radialGradient></defs><circle cx="8" cy="8" r="7.600" fill="#e8ecf2" stroke="#8a94a8" stroke-width=".8"/><circle cx="8" cy="8" r="6.400" fill="url(#gHelp)"/><path d="M5.500 6q0-2.500 2.700-2.500T10.800 6q0 1.400-1.300 2.200T8.300 10" stroke="#fff" stroke-width="1.700" fill="none"/><circle cx="8.300" cy="12.300" r="1" fill="#fff"/></svg>
<div class="abs" style="left:1357px;top:36px;border:3px solid transparent;border-bottom:none;border-top:3.500px solid #5a7cc0"></div>
<svg class="abs" style="left:0;top:0" width="0" height="0"><defs>
  <linearGradient id="gGa" x1="0" y1="0" x2="1" y2="1"><stop offset="0" stop-color="#e6e6e0"/><stop offset="1" stop-color="#f4f7f0"/></linearGradient>
  <linearGradient id="gGr" x1="0" y1="1" x2="0.600" y2="0" ><stop offset="0" stop-color="#2fcc10"/><stop offset=".7" stop-color="#4fd828"/><stop offset="1" stop-color="#c3d8f2"/></linearGradient>
  <linearGradient id="gRd" x1="1" y1="1" x2="0.300" y2="0"><stop offset="0" stop-color="#f01020"/><stop offset=".65" stop-color="#f43040"/><stop offset="1" stop-color="#f2c8d0"/></linearGradient>
  <linearGradient id="gNd" x1="0" y1="0" x2="1" y2="0"><stop offset="0" stop-color="#f6d878"/><stop offset=".5" stop-color="#e0a020"/><stop offset="1" stop-color="#b07810"/></linearGradient>
  <radialGradient id="gKn" cx=".4" cy=".3" r=".8"><stop offset="0" stop-color="#6aa8e0"/><stop offset=".6" stop-color="#2f74bc"/><stop offset="1" stop-color="#1c4f8c"/></radialGradient>
</defs></svg>
<svg class="abs" style="left:826px;top:55px" width="104" height="67" viewBox="826 55 104 67">
<path d="M828.600 106C828.600 76 850 55.500 878 55.500S927.500 76 927.500 106C927.500 112.500 921 115.500 914 116.800C898 120.500 858 120.500 842 116.800C835 115.500 828.600 112.500 828.600 106z" fill="#7b9bba"/>
<path d="M831.500 105C831.500 77 852 58.500 878 58.500S924.700 77 924.700 105C924.700 110 920.500 111.600 914 112L886.500 112.500C884 117 872.500 117 870 112.500L842 112C835.500 111.600 831.500 110 831.500 105z" fill="url(#gGa)"/>
<path d="M837.00 105.00A41.2 39.3 0 0 1 919.40 105.00L913.00 105.00A34.8 35 0 0 0 843.40 105.00z" fill="#c3d8f2"/>
<path d="M837.00 105.00A41.2 39.3 0 0 1 853.98 73.21L855.98 74.90A37.8 37.2 0 0 0 840.40 105.00z" fill="url(#gGr)"/>
<path d="M903.57 74.03A41.2 39.3 0 0 1 919.40 105.00L916.00 105.00A37.8 37.2 0 0 0 901.47 75.69z" fill="url(#gRd)"/>
<path d="M838.00 106.30L838.00 103.70L843.90 105.00z" fill="#2a2a2a"/>
<path d="M839.57 94.40L840.37 91.93L845.58 94.34z" fill="#2a2a2a"/>
<path d="M844.91 83.54L846.44 81.44L850.45 84.72z" fill="#2a2a2a"/>
<path d="M853.52 74.78L855.62 73.25L858.04 77.09z" fill="#2a2a2a"/>
<path d="M864.54 68.98L867.01 68.17L867.60 72.19z" fill="#2a2a2a"/>
<path d="M876.90 66.70L879.50 66.70L878.20 70.50z" fill="#2a2a2a"/>
<path d="M889.39 68.17L891.86 68.98L888.80 72.19z" fill="#2a2a2a"/>
<path d="M900.78 73.25L902.88 74.78L898.36 77.09z" fill="#2a2a2a"/>
<path d="M909.96 81.44L911.49 83.54L905.95 84.72z" fill="#2a2a2a"/>
<path d="M916.03 91.93L916.83 94.40L910.82 94.34z" fill="#2a2a2a"/>
<path d="M918.40 103.70L918.40 106.30L912.50 105.00z" fill="#2a2a2a"/>
<text x="846.5" y="107.8" font-size="7.500" fill="#686868" text-anchor="middle" font-family="Liberation Sans,sans-serif" stroke="#686868" stroke-width=".25">0</text>
<text x="852.5" y="90.5" font-size="7.500" fill="#686868" text-anchor="middle" font-family="Liberation Sans,sans-serif" stroke="#686868" stroke-width=".25">20</text>
<text x="868.2" y="78.8" font-size="7.500" fill="#686868" text-anchor="middle" font-family="Liberation Sans,sans-serif" stroke="#686868" stroke-width=".25">40</text>
<text x="887.5" y="78.8" font-size="7.500" fill="#686868" text-anchor="middle" font-family="Liberation Sans,sans-serif" stroke="#686868" stroke-width=".25">60</text>
<text x="903.5" y="90.5" font-size="7.500" fill="#686868" text-anchor="middle" font-family="Liberation Sans,sans-serif" stroke="#686868" stroke-width=".25">80</text>
<text x="908" y="107.8" font-size="7.500" fill="#686868" text-anchor="middle" font-family="Liberation Sans,sans-serif" stroke="#686868" stroke-width=".25">100</text>
<text x="878.500" y="97" font-size="8.500" fill="#7d9cc4" text-anchor="middle" font-family="Liberation Sans,sans-serif" stroke="#7d9cc4" stroke-width=".3">Utilization</text>
<path d="M848 105.200L874 104v3.500L848 106.800z" fill="url(#gNd)"/>
<circle cx="878.200" cy="105" r="5.200" fill="url(#gKn)"/>
</svg>
<svg class="abs" style="left:937px;top:55px" width="104" height="67" viewBox="826 55 104 67">
<path d="M828.600 106C828.600 76 850 55.500 878 55.500S927.500 76 927.500 106C927.500 112.500 921 115.500 914 116.800C898 120.500 858 120.500 842 116.800C835 115.500 828.600 112.500 828.600 106z" fill="#7b9bba"/>
<path d="M831.500 105C831.500 77 852 58.500 878 58.500S924.700 77 924.700 105C924.700 110 920.500 111.600 914 112L886.500 112.500C884 117 872.500 117 870 112.500L842 112C835.500 111.600 831.500 110 831.500 105z" fill="url(#gGa)"/>
<path d="M837.00 105.00A41.2 39.3 0 0 1 919.40 105.00L913.00 105.00A34.8 35 0 0 0 843.40 105.00z" fill="#c3d8f2"/>
<path d="M837.00 105.00A41.2 39.3 0 0 1 848.56 77.70L851.01 79.16A37.8 37.2 0 0 0 840.40 105.00z" fill="url(#gGr)"/>
<path d="M907.84 77.70A41.2 39.3 0 0 1 919.40 105.00L916.00 105.00A37.8 37.2 0 0 0 905.39 79.16z" fill="url(#gRd)"/>
<path d="M842.01 102.16L838.82 102.02M842.35 99.34L839.19 99.06M842.90 96.55L839.79 96.13M843.68 93.81L840.63 93.26M844.66 91.15L841.71 90.46M845.86 88.57L843.01 87.75M847.25 86.09L844.52 85.15M848.83 83.72L846.24 82.66M850.60 81.49L848.16 80.32M854.63 77.47L852.55 76.10M856.86 75.71L854.98 74.26M859.23 74.13L857.56 72.60M861.72 72.75L860.27 71.14M864.31 71.56L863.08 69.89M866.98 70.57L865.99 68.86M869.73 69.80L868.98 68.05M872.52 69.25L872.02 67.47M875.35 68.91L875.10 67.12M881.05 68.91L881.30 67.12M883.88 69.25L884.38 67.47M886.67 69.80L887.42 68.05M889.42 70.57L890.41 68.86M892.09 71.56L893.32 69.89M894.68 72.75L896.13 71.14M897.17 74.13L898.84 72.60M899.54 75.71L901.42 74.26M901.77 77.47L903.85 76.10M905.80 81.49L908.24 80.32M907.57 83.72L910.16 82.66M909.15 86.09L911.88 85.15M910.54 88.57L913.39 87.75M911.74 91.15L914.69 90.46M912.72 93.81L915.77 93.26M913.50 96.55L916.61 96.13M914.05 99.34L917.21 99.06M914.39 102.16L917.58 102.02" stroke="#6a6a6a" stroke-width=".7" fill="none"/>
<path d="M838.00 106.40L838.00 103.60L843.90 105.00z" fill="#1a1a1a"/>
<path d="M848.78 78.91L850.76 76.93L853.95 80.60z" fill="#1a1a1a"/>
<path d="M876.80 66.70L879.60 66.70L878.20 70.50z" fill="#1a1a1a"/>
<path d="M905.64 76.93L907.62 78.91L902.45 80.60z" fill="#1a1a1a"/>
<path d="M918.40 103.60L918.40 106.40L912.50 105.00z" fill="#1a1a1a"/>
<text x="846.5" y="107.8" font-size="7.500" fill="#686868" text-anchor="middle" font-family="Liberation Sans,sans-serif" stroke="#686868" stroke-width=".25">0</text>
<text x="859.3" y="86.2" font-size="7.500" fill="#686868" text-anchor="middle" font-family="Liberation Sans,sans-serif" stroke="#686868" stroke-width=".25">500</text>
<text x="878.2" y="76.5" font-size="7.500" fill="#686868" text-anchor="middle" font-family="Liberation Sans,sans-serif" stroke="#686868" stroke-width=".25">1K</text>
<text x="896.8" y="86.2" font-size="7.500" fill="#686868" text-anchor="middle" font-family="Liberation Sans,sans-serif" stroke="#686868" stroke-width=".25">500K</text>
<text x="908.8" y="107.8" font-size="7.500" fill="#686868" text-anchor="middle" font-family="Liberation Sans,sans-serif" stroke="#686868" stroke-width=".25">1M</text>
<text x="878.500" y="97" font-size="8.500" fill="#7d9cc4" text-anchor="middle" font-family="Liberation Sans,sans-serif" stroke="#7d9cc4" stroke-width=".3">Packet/s</text>
<path d="M848 105.200L874 104v3.500L848 106.800z" fill="url(#gNd)"/>
<circle cx="878.200" cy="105" r="5.200" fill="url(#gKn)"/>
</svg>
<svg class="abs" style="left:1050px;top:55px" width="101" height="66" viewBox="1050 55 101 66">
<rect x="1050" y="55" width="101" height="66" fill="#000"/>
<path d="M1060.5 55V121M1070.5 55V121M1080.5 55V121M1090.5 55V121M1100.5 55V121M1110.5 55V121M1120.5 55V121M1130.5 55V121M1140.5 55V121M1050 71.5H1150M1050 88H1150M1050 104.5H1150" stroke="#00a800" stroke-width="1" fill="none"/>
<path d="M1049.3 121L1051.0 83L1052.7 121zM1052.3 121L1054.0 103L1055.7 121zM1057.8 121L1059.5 103L1061.2 121zM1062.8 121L1064.5 103L1066.2 121zM1072.8 121L1074.5 83L1076.2 121zM1076.8 121L1078.5 103L1080.2 121zM1079.2 121L1081.5 55L1083.8 121zM1082.8 121L1084.5 100L1086.2 121zM1087.8 121L1089.5 103L1091.2 121zM1092.8 121L1094.5 103L1096.2 121zM1102.8 121L1104.5 83L1106.2 121zM1106.8 121L1108.5 103L1110.2 121zM1109.8 121L1111.5 83L1113.2 121zM1112.3 121L1114.0 100L1115.7 121zM1117.8 121L1119.5 103L1121.2 121zM1123.8 121L1125.5 103L1127.2 121zM1132.8 121L1134.5 83L1136.2 121zM1136.8 121L1138.5 103L1140.2 121zM1139.8 121L1141.5 83L1143.2 121zM1142.3 121L1144.0 103L1145.7 121zM1146.3 121L1148.0 83L1149.7 121z" fill="#00f400" stroke="#00ff00" stroke-width=".5"/>
<path d="M1150.500 55V121" stroke="#e8d820" stroke-width="1"/>
</svg>
<svg class="abs" style="left:1161px;top:55px" width="121" height="66" viewBox="0 0 121 66" shape-rendering="crispEdges">
<rect width="121" height="66" fill="#364f6a"/>
<rect x="45" y="21" width="3" height="3" fill="#f0c010"/>
<path d="M1 1h3v3h-3zM5 1h3v3h-3zM9 1h3v3h-3zM13 1h3v3h-3zM17 1h3v3h-3zM21 1h3v3h-3zM25 1h3v3h-3zM29 1h3v3h-3zM33 1h3v3h-3zM37 1h3v3h-3zM41 1h3v3h-3zM45 1h3v3h-3zM49 1h3v3h-3zM53 1h3v3h-3zM57 1h3v3h-3zM61 1h3v3h-3zM65 1h3v3h-3zM69 1h3v3h-3zM73 1h3v3h-3zM77 1h3v3h-3zM81 1h3v3h-3zM85 1h3v3h-3zM89 1h3v3h-3zM93 1h3v3h-3zM97 1h3v3h-3zM101 1h3v3h-3zM105 1h3v3h-3zM109 1h3v3h-3zM113 1h3v3h-3zM117 1h3v3h-3zM1 5h3v3h-3zM5 5h3v3h-3zM9 5h3v3h-3zM13 5h3v3h-3zM17 5h3v3h-3zM21 5h3v3h-3zM25 5h3v3h-3zM29 5h3v3h-3zM33 5h3v3h-3zM37 5h3v3h-3zM41 5h3v3h-3zM45 5h3v3h-3zM49 5h3v3h-3zM53 5h3v3h-3zM57 5h3v3h-3zM61 5h3v3h-3zM65 5h3v3h-3zM69 5h3v3h-3zM73 5h3v3h-3zM77 5h3v3h-3zM81 5h3v3h-3zM85 5h3v3h-3zM89 5h3v3h-3zM93 5h3v3h-3zM97 5h3v3h-3zM101 5h3v3h-3zM105 5h3v3h-3zM109 5h3v3h-3zM113 5h3v3h-3zM117 5h3v3h-3zM1 9h3v3h-3zM5 9h3v3h-3zM9 9h3v3h-3zM13 9h3v3h-3zM17 9h3v3h-3zM21 9h3v3h-3zM25 9h3v3h-3zM29 9h3v3h-3zM33 9h3v3h-3zM37 9h3v3h-3zM41 9h3v3h-3zM45 9h3v3h-3zM49 9h3v3h-3zM53 9h3v3h-3zM57 9h3v3h-3zM61 9h3v3h-3zM65 9h3v3h-3zM69 9h3v3h-3zM73 9h3v3h-3zM77 9h3v3h-3zM81 9h3v3h-3zM85 9h3v3h-3zM89 9h3v3h-3zM93 9h3v3h-3zM97 9h3v3h-3zM101 9h3v3h-3zM105 9h3v3h-3zM109 9h3v3h-3zM113 9h3v3h-3zM117 9h3v3h-3zM1 13h3v3h-3zM5 13h3v3h-3zM9 13h3v3h-3zM13 13h3v3h-3zM17 13h3v3h-3zM21 13h3v3h-3zM25 13h3v3h-3zM29 13h3v3h-3zM33 13h3v3h-3zM37 13h3v3h-3zM41 13h3v3h-3zM45 13h3v3h-3zM49 13h3v3h-3zM53 13h3v3h-3zM57 13h3v3h-3zM61 13h3v3h-3zM65 13h3v3h-3zM69 13h3v3h-3zM73 13h3v3h-3zM77 13h3v3h-3zM81 13h3v3h-3zM85 13h3v3h-3zM89 13h3v3h-3zM93 13h3v3h-3zM97 13h3v3h-3zM101 13h3v3h-3zM105 13h3v3h-3zM109 13h3v3h-3zM113 13h3v3h-3zM117 13h3v3h-3zM1 17h3v3h-3zM5 17h3v3h-3zM9 17h3v3h-3zM13 17h3v3h-3zM17 17h3v3h-3zM21 17h3v3h-3zM25 17h3v3h-3zM29 17h3v3h-3zM33 17h3v3h-3zM37 17h3v3h-3zM41 17h3v3h-3zM45 17h3v3h-3zM49 17h3v3h-3zM53 17h3v3h-3zM57 17h3v3h-3zM61 17h3v3h-3zM65 17h3v3h-3zM69 17h3v3h-3zM73 17h3v3h-3zM77 17h3v3h-3zM81 17h3v3h-3zM85 17h3v3h-3zM89 17h3v3h-3zM93 17h3v3h-3zM97 17h3v3h-3zM101 17h3v3h-3zM105 17h3v3h-3zM109 17h3v3h-3zM113 17h3v3h-3zM117 17h3v3h-3zM1 21h3v3h-3zM5 21h3v3h-3zM9 21h3v3h-3zM13 21h3v3h-3zM17 21h3v3h-3zM21 21h3v3h-3zM25 21h3v3h-3zM29 21h3v3h-3zM33 21h3v3h-3zM37 21h3v3h-3zM41 21h3v3h-3z" fill="#15152c"/>
<path d="M49 21h3v3h-3zM53 21h3v3h-3zM57 21h3v3h-3zM61 21h3v3h-3zM65 21h3v3h-3zM69 21h3v3h-3zM73 21h3v3h-3zM77 21h3v3h-3zM81 21h3v3h-3zM85 21h3v3h-3zM89 21h3v3h-3zM93 21h3v3h-3zM97 21h3v3h-3zM101 21h3v3h-3zM105 21h3v3h-3zM109 21h3v3h-3zM113 21h3v3h-3zM117 21h3v3h-3zM1 25h3v3h-3zM5 25h3v3h-3zM9 25h3v3h-3zM13 25h3v3h-3zM17 25h3v3h-3zM21 25h3v3h-3zM25 25h3v3h-3zM29 25h3v3h-3zM33 25h3v3h-3zM37 25h3v3h-3zM41 25h3v3h-3zM45 25h3v3h-3zM49 25h3v3h-3zM53 25h3v3h-3zM57 25h3v3h-3zM61 25h3v3h-3zM65 25h3v3h-3zM69 25h3v3h-3zM73 25h3v3h-3zM77 25h3v3h-3zM81 25h3v3h-3zM85 25h3v3h-3zM89 25h3v3h-3zM93 25h3v3h-3zM97 25h3v3h-3zM101 25h3v3h-3zM105 25h3v3h-3zM109 25h3v3h-3zM113 25h3v3h-3zM117 25h3v3h-3zM1 29h3v3h-3zM5 29h3v3h-3zM9 29h3v3h-3zM13 29h3v3h-3zM17 29h3v3h-3zM21 29h3v3h-3zM25 29h3v3h-3zM29 29h3v3h-3zM33 29h3v3h-3zM37 29h3v3h-3zM41 29h3v3h-3zM45 29h3v3h-3zM49 29h3v3h-3zM53 29h3v3h-3zM57 29h3v3h-3zM61 29h3v3h-3zM65 29h3v3h-3zM69 29h3v3h-3zM73 29h3v3h-3zM77 29h3v3h-3zM81 29h3v3h-3zM85 29h3v3h-3zM89 29h3v3h-3zM93 29h3v3h-3zM97 29h3v3h-3zM101 29h3v3h-3zM105 29h3v3h-3zM109 29h3v3h-3zM113 29h3v3h-3zM117 29h3v3h-3zM1 33h3v3h-3zM5 33h3v3h-3zM9 33h3v3h-3zM13 33h3v3h-3zM17 33h3v3h-3zM21 33h3v3h-3zM25 33h3v3h-3zM29 33h3v3h-3zM33 33h3v3h-3zM37 33h3v3h-3zM41 33h3v3h-3zM45 33h3v3h-3zM49 33h3v3h-3zM53 33h3v3h-3zM57 33h3v3h-3zM61 33h3v3h-3zM65 33h3v3h-3zM69 33h3v3h-3zM73 33h3v3h-3zM77 33h3v3h-3zM81 33h3v3h-3zM85 33h3v3h-3zM89 33h3v3h-3zM93 33h3v3h-3zM97 33h3v3h-3zM101 33h3v3h-3zM105 33h3v3h-3zM109 33h3v3h-3zM113 33h3v3h-3zM117 33h3v3h-3zM1 37h3v3h-3zM5 37h3v3h-3zM9 37h3v3h-3zM13 37h3v3h-3zM17 37h3v3h-3zM21 37h3v3h-3zM25 37h3v3h-3zM29 37h3v3h-3zM33 37h3v3h-3zM37 37h3v3h-3zM41 37h3v3h-3zM45 37h3v3h-3zM49 37h3v3h-3zM53 37h3v3h-3zM57 37h3v3h-3zM61 37h3v3h-3zM65 37h3v3h-3zM69 37h3v3h-3zM73 37h3v3h-3zM77 37h3v3h-3zM81 37h3v3h-3zM85 37h3v3h-3zM89 37h3v3h-3zM93 37h3v3h-3zM97 37h3v3h-3zM101 37h3v3h-3zM105 37h3v3h-3zM109 37h3v3h-3zM113 37h3v3h-3zM117 37h3v3h-3z" fill="#a0a4ea"/>
<text x="60" y="57" font-size="11" fill="#fff" text-anchor="middle" font-family="Liberation Sans,sans-serif" shape-rendering="auto">46.2%</text>
</svg>
<div id="frame"></div>
<div id="left">
  <div class="hd"><i>节<svg><use href="#g8282"/></svg></i><i>点<svg><use href="#g70b9"/></svg></i><i>浏<svg><use href="#g6d4f"/></svg></i><i>览<svg><use href="#g89c8"/></svg></i><i>器<svg><use href="#g5668"/></svg></i></div>
  <svg class="abs" style="left:224px;top:6px" width="9" height="8" viewBox="0 0 9 8"><path d="M1 .5l6.500 6.500M7.500 .5L1 7" stroke="#15367a" stroke-width="1.700"/></svg>
  <div class="tb">
    <div class="abs" id="lt1" style="left:7px;top:4px;width:18px;height:16px"></div>
    <div class="abs" id="lt2" style="left:29px;top:4px;width:18px;height:16px"></div>
    <div class="abs" id="lt3" style="left:51px;top:4px;width:18px;height:16px"></div>
    <div class="abs" id="lt4" style="left:73px;top:4px;width:18px;height:16px"></div>
  </div>
</div>
<div id="tree" class="abs" style="left:0;top:193px;width:243px;height:520px">
  <!-- dotted connector lines -->
  <div class="dv" style="left:15px;top:17px;height:183px"></div>
  <div class="dv" style="left:33px;top:36px;height:8px"></div>
  <div class="dv" style="left:51px;top:55px;height:30px"></div>
  <div class="dv" style="left:33px;top:112px;height:79px"></div>
  <div class="dv" style="left:51px;top:150px;height:12px"></div>
  <div class="dh" style="left:21px;top:28px;width:8px"></div>
  <div class="dh" style="left:39px;top:47px;width:8px"></div>
  <div class="dh" style="left:57px;top:66px;width:8px"></div>
  <div class="dh" style="left:57px;top:85px;width:8px"></div>
  <div class="dh" style="left:21px;top:104px;width:8px"></div>
  <div class="dh" style="left:39px;top:123px;width:8px"></div>
  <div class="dh" style="left:39px;top:142px;width:8px"></div>
  <div class="dh" style="left:57px;top:161px;width:6px"></div>
  <div class="dh" style="left:39px;top:180px;width:8px"></div>
  <div class="dh" style="left:21px;top:199px;width:8px"></div>
  <!-- expanders -->
  <div class="xb" style="left:11px;top:24px"></div>
  <div class="xb" style="left:29px;top:43px"></div>
  <div class="xb p" style="left:47px;top:62px"></div>
  <div class="xb p" style="left:47px;top:81px"></div>
  <div class="xb" style="left:11px;top:100px"></div>
  <div class="xb p" style="left:29px;top:119px"></div>
  <div class="xb" style="left:29px;top:138px"></div>
  <div class="xb p" style="left:47px;top:157px"></div>
  <div class="xb p" style="left:29px;top:176px"></div>
  <div class="xb p" style="left:11px;top:195px"></div>
  <!-- selection -->
  <div class="abs" style="left:61px;top:152px;width:152px;height:19px;background:#6694d1;border:1px solid #5888c8"></div>
  <!-- labels -->
  <div class="tn" style="left:28px;top:0"><i>全<svg><use href="#g5168"/></svg></i><i>面<svg><use href="#g9762"/></svg></i><i>分<svg><use href="#g5206"/></svg></i><i>析<svg><use href="#g6790"/></svg></i></div>
  <div class="tn" style="left:50px;top:19px"><span class="c"><i>协<svg><use href="#g534f"/></svg></i><i>议<svg><use href="#g8bae"/></svg></i><i>浏<svg><use href="#g6d4f"/></svg></i><i>览<svg><use href="#g89c8"/></svg></i><i>器<svg><use href="#g5668"/></svg></i></span> (1)</div>
  <div class="tn" style="left:68px;top:38px;color:#0a9a0a">Ethernet II (2)</div>
  <div class="tn" style="left:86px;top:57px">IP (3)</div>
  <div class="tn" style="left:86px;top:76px;color:#d03000">ARP (2)</div>
  <div class="tn" style="left:50px;top:95px"><span class="c"><i>物<svg><use href="#g7269"/></svg></i><i>理<svg><use href="#g7406"/></svg></i><i>浏<svg><use href="#g6d4f"/></svg></i><i>览<svg><use href="#g89c8"/></svg></i><i>器<svg><use href="#g5668"/></svg></i></span> (3)</div>
  <div class="tn" style="left:80px;top:114px"><span class="c"><i>本<svg><use href="#g672c"/></svg></i><i>地<svg><use href="#g5730"/></svg></i><i>网<svg><use href="#g7f51"/></svg></i><i>段<svg><use href="#g6bb5"/></svg></i></span> (15)</div>
  <div class="tn" style="left:80px;top:133px"><span class="c"><i>广<svg><use href="#g5e7f"/></svg></i><i>播<svg><use href="#g64ad"/></svg></i><i>地<svg><use href="#g5730"/></svg></i><i>址<svg><use href="#g5740"/></svg></i></span> (1)</div>
  <div class="tn" style="left:97px;top:152px">FF:FF:FF:FF:FF:FF (2)</div>
  <div class="tn" style="left:80px;top:171px"><span class="c"><i>組<svg><use href="#g7d44"/></svg></i><i>播<svg><use href="#g64ad"/></svg></i><i>地<svg><use href="#g5730"/></svg></i><i>址<svg><use href="#g5740"/></svg></i></span> (1)</div>
  <div class="tn" style="left:50px;top:190px">IP<span class="c"><i>浏<svg><use href="#g6d4f"/></svg></i><i>览<svg><use href="#g89c8"/></svg></i><i>器<svg><use href="#g5668"/></svg></i></span> (5)</div>
  <!-- icons -->
  <div id="tree-icons"></div>
</div>
<svg class="abs" style="left:0;top:0" width="0" height="0"><defs>
  <radialGradient id="og2" cx=".5" cy=".2" r=".9"><stop offset="0" stop-color="#a8d4f0"/><stop offset=".5" stop-color="#4c8cc4"/><stop offset="1" stop-color="#1f5a9a"/></radialGradient>
  <g id="tT"><path d="M.5 1.500h14" stroke-width="2.400" stroke-linecap="round"/><path d="M4 .5h7l-2.500 3.500h-2z" fill="#b9b9b9" stroke="#8c8c8c" stroke-width=".6"/><path d="M7.500 4.500v6" stroke-width="2.600" stroke-linecap="round"/><path d="M7.200 5v5" stroke="#fff" stroke-opacity=".45" stroke-width=".8"/></g>
  <g id="plus"><path d="M3.500 .5h4v3h3v4h-3v3h-4v-3h-3v-4h3z" fill="#3fb8b8" stroke="#0b4a5a" stroke-width="1"/><path d="M4.500 2v2.500H2" stroke="#d8ffff" stroke-width="1" fill="none"/></g>
  <g id="netfold"><path d="M1 1.500q0-1 1-1h4l1.200 1.500H12q1 0 1 1V10H1z"/><path d="M6.500 10v2.500" stroke="#777" stroke-width="1.400"/><rect x="5" y="11.300" width="4" height="2.800" fill="#ddd" stroke="#888" stroke-width=".6"/></g>
  <g id="nic"><path d="M.5 1.500h10l3 1.500v9l-2 1.500H5l-1-1.500H.5z" fill="#2f9a2f" stroke="#176a17" stroke-width=".8"/><rect x="1.500" y="2.500" width="5" height="9" fill="#49c049"/><path d="M2.500 3.500h1M2.500 5.500h1M2.500 7.500h1M2.500 9.500h1" stroke="#f03020" stroke-width="1"/><path d="M5 3.500h1M5 5.500h1M5 7.500h1M5 9.500h1" stroke="#fff" stroke-width="1"/><path d="M8.500 3v8" stroke="#e8e8e8" stroke-width="1.400"/><path d="M10.500 4.500h1M10.500 8.500h1" stroke="#f0e040" stroke-width="1"/></g>
</defs></svg>
<div id="tree-icons2" class="abs" style="left:0;top:193px;width:243px;height:300px">
<!-- root -->
<svg class="abs" style="left:7px;top:1px" width="16" height="16" viewBox="0 0 16 16"><circle cx="8" cy="8" r="7.800" fill="url(#og2)"/><path d="M1.800 9.300C4 8 5.800 5.800 8.500 5.300c2.500-.4 4.300 1.700 5.800 4.200l-1.400.7C11.700 8.300 10.200 6.900 8.300 7.200 6.500 7.500 5 9.100 3.100 10z" fill="#fff"/><path d="M3.600 10.600c2.100 1.500 5.300 1.700 7.500-.8l-.8-.2c-1.700 1.800-4.200 1.800-5.700.7z" fill="#fff"/><path d="M5.800 9c1.400 1.100 3.300 1 4.500-.3l-.6-.2c-1 .9-2.200.9-3.300.2z" fill="#fff"/></svg>
<!-- protocol browser (double T green) -->
<svg class="abs" style="left:29px;top:22px" width="15" height="12" viewBox="0 0 15 12"><path d="M.8 1.500h13.400" stroke="#8a8a8a" stroke-width="2.200" stroke-linecap="round"/><circle cx="1.200" cy="1.500" r="1.100" fill="#30c030"/><circle cx="13.800" cy="1.500" r="1.100" fill="#30c030"/><path d="M2.500 .8h4.500l-1.500 3h-1.500zM8 .8h4.500l-1.500 3h-1.500z" fill="#c4c4c4" stroke="#8c8c8c" stroke-width=".5"/><path d="M5 4.500v6M10 4.500v6" stroke="#28b428" stroke-width="3.200" stroke-linecap="round"/><path d="M4.800 5v5M9.800 5v5" stroke="#a8f0a8" stroke-width="1"/></svg>
<!-- Ethernet II red T -->
<svg class="abs" style="left:47px;top:41px" width="15" height="12" viewBox="0 0 15 12"><use href="#tT" stroke="#e83018"/></svg>
<!-- IP gray-green T -->
<svg class="abs" style="left:65px;top:60px" width="15" height="12" viewBox="0 0 15 12" opacity=".75"><use href="#tT" stroke="#9cc49c"/></svg>
<!-- ARP red T -->
<svg class="abs" style="left:65px;top:79px" width="15" height="12" viewBox="0 0 15 12"><use href="#tT" stroke="#e83018"/></svg>
<!-- physical browser NIC -->
<svg class="abs" style="left:29px;top:96px" width="16" height="15" viewBox="0 0 14 14.500"><use href="#nic"/></svg>
<!-- local segment -->
<svg class="abs" style="left:47px;top:115px" width="14" height="16" viewBox="0 0 14 16"><use href="#netfold" fill="#f6dc8c" stroke="#c89a50" stroke-width=".8"/><path d="M.5 13h13" stroke="#e83828" stroke-width="2.200" stroke-linecap="round"/><rect x="5" y="11.300" width="4" height="2.800" fill="#ddd" stroke="#888" stroke-width=".6"/></svg>
<svg class="abs" style="left:63px;top:121px" width="11" height="10" viewBox="0 0 11 10"><path d="M.5 1h9.500v1.800H.5z" fill="#9a9a9a"/><path d="M.5 4.500h10l-6 4.500-1.500-1.800L5 6.500H.5z" fill="#4a9a3a" stroke="#2f7a25" stroke-width=".5"/></svg>
<!-- broadcast -->
<svg class="abs" style="left:47px;top:134px" width="16" height="16" viewBox="0 0 16 16"><path d="M1 1.500q0-1 1-1h4l1.200 1.500H12q1 0 1 1V10H1z" fill="#f2c870" stroke="#c08a3c" stroke-width=".8"/><path d="M1.200 10L4 4.500h11L12.500 10z" fill="#fae4a4" stroke="#c89a50" stroke-width=".8"/><path d="M6.500 10v2.500" stroke="#777" stroke-width="1.400"/><path d="M.5 13h13" stroke="#e83828" stroke-width="2.200" stroke-linecap="round"/><rect x="5" y="11.300" width="4" height="2.800" fill="#ddd" stroke="#888" stroke-width=".6"/></svg>
<svg class="abs" style="left:63px;top:137px" width="11" height="6" viewBox="0 0 11 6"><path d="M.5 4.500L6 .5v2h4.500v2.500H.5z" fill="#4a9a3a" stroke="#2f7a25" stroke-width=".5"/></svg>
<!-- selected: NIC + speaker -->
<svg class="abs" style="left:65px;top:153px" width="17" height="16" viewBox="0 0 17 16"><use href="#nic" transform="scale(.93)"/><path d="M9 9.500h2l3-3v9l-3-3H9z" fill="#e8c040" stroke="#7a5a10" stroke-width=".7"/><path d="M15 8.500q1.500 2.500 0 5" stroke="#c8a030" stroke-width="1" fill="none"/></svg>
<svg class="abs" style="left:82px;top:156px" width="10" height="6" viewBox="0 0 11 6"><path d="M.5 4.500L6 .5v2h4.500v2.500H.5z" fill="#4a9a3a" stroke="#2f7a25" stroke-width=".5"/></svg>
<!-- multicast (faded) -->
<svg class="abs" style="left:47px;top:172px" width="14" height="16" viewBox="0 0 14 16" opacity=".9"><use href="#netfold" fill="#ece6d2" stroke="#c8c0a8" stroke-width=".8"/><path d="M.5 13h13" stroke="#b4d4b4" stroke-width="2.200" stroke-linecap="round"/><rect x="5" y="11.300" width="4" height="2.800" fill="#e8e8e8" stroke="#b8b8b8" stroke-width=".6"/></svg>
<svg class="abs" style="left:63px;top:175px" width="11" height="6" viewBox="0 0 11 6"><path d="M.5 4.500L6 .5v2h4.500v2.500H.5z" fill="#c4c4c4" stroke="#a8a8a8" stroke-width=".5"/></svg>
<!-- IP browser -->
<svg class="abs" style="left:29px;top:190px" width="16" height="16" viewBox="0 0 16 16"><rect x=".5" y=".5" width="8" height="6" fill="#6aa8f0" stroke="#2f66b8" stroke-width=".8"/><rect x="7" y="6" width="8.500" height="6" fill="#6aa8f0" stroke="#2f66b8" stroke-width=".8"/><path d="M4.500 7v3M11 12.500v2" stroke="#556" stroke-width="1.200"/><path d="M1 10.500h6.500M1 14.500h14" stroke="#888" stroke-width="1.800"/><path d="M2 10.500h1M2 14.500h1M9 14.500h1" stroke="#20c020" stroke-width="1"/><path d="M1.500 12.500v2M4.500 10.500v4" stroke="#20a020" stroke-width="1"/></svg>
</div>
<!-- left toolbar icons -->
<svg class="abs" style="left:10px;top:172px" width="17" height="17" viewBox="0 0 17 17"><rect x=".5" y=".5" width="15" height="12" fill="#fff" stroke="#555e70"/><rect x="1" y="1" width="14" height="3" fill="#2a6ae0"/><path d="M2 2.500h3M6.500 2.500h3M11 2.500h3" stroke="#fff" stroke-width="1"/><path d="M1 6.500h14M1 9.500h14M5.500 4v8.500M10.500 4v8.500" stroke="#b4bccc" stroke-width=".8"/><use href="#plus" transform="translate(8 8) scale(.76)"/></svg>
<svg class="abs" style="left:33px;top:173px" width="16" height="16" viewBox="0 0 16 16"><path d="M.5 .5h14L9 7v4l-3 0V7z" fill="#7ad0f8" stroke="#3a78d8" stroke-width=".8"/><path d="M2 1.300h10l-4 4z" fill="#d8f8ff"/><use href="#plus" transform="translate(7 7) scale(.76)"/></svg>
<svg class="abs" style="left:54px;top:174px" width="17" height="15" viewBox="0 0 17 15"><path d="M.5 5v3.500q0 3 7.500 3t7.500-3V5z" fill="#2f68b0"/><ellipse cx="8" cy="5" rx="7.500" ry="4" fill="#4a88d0"/><path d="M8 5L8 1q-7.500 0-7.500 4 0 1.500 2 2.600z" fill="#e83818"/><path d="M.5 5v3.500q0 1.500 2 2.500V7.600Q.5 6.500.5 5z" fill="#b82808"/><path d="M8 5V1q-2 0-3.500.5z" fill="#f8d820"/><use href="#plus" transform="translate(8 6) scale(.76)"/></svg>
<svg class="abs" style="left:76px;top:172px" width="17" height="17" viewBox="0 0 17 17"><path d="M7 1q.8-1.200 1.600 0l6 11.500q.4 1-.6 1H1.600q-1 0-.6-1z" fill="#f8dc10" stroke="#c8a000" stroke-width=".8"/><path d="M7.100 4.500q.7-.9 1.400 0l-.3 5h-.8z" fill="#333"/><circle cx="7.800" cy="11.200" r=".9" fill="#333"/><path d="M6 4q.8-.8 1.300.3" stroke="#fff" stroke-width=".8" fill="none"/><use href="#plus" transform="translate(8 8) scale(.76)"/></svg>
<div id="mtabs">
<svg class="abs" style="left:0;top:0" width="1094" height="23" viewBox="0 0 1094 23">
<defs><linearGradient id="tg" x1="0" y1="0" x2="0" y2="1"><stop offset="0" stop-color="#f6faff"/><stop offset=".5" stop-color="#dbe8fb"/><stop offset="1" stop-color="#c3d9f8"/></linearGradient>
<linearGradient id="tga" x1="0" y1="0" x2="0" y2="1"><stop offset="0" stop-color="#fff3df"/><stop offset=".45" stop-color="#ffdca6"/><stop offset="1" stop-color="#ffbf6a"/></linearGradient></defs>
<path d="M5.5 22.5L23 5Q24.500 3.500 27 3.500H52Q55.500 3.500 55.500 7V22.5" fill="url(#tg)" stroke="#1c3fa0"/>
<path d="M57.5 22.5V7Q57.5 3.500 61.0 3.500H88.0Q91.5 3.500 91.5 7V22.5" fill="url(#tg)" stroke="#1c3fa0"/>
<path d="M93.5 22.5V7Q93.5 3.500 97.0 3.500H124.0Q127.5 3.500 127.5 7V22.5" fill="url(#tg)" stroke="#1c3fa0"/>
<path d="M129.5 22.5V7Q129.5 3.500 133.0 3.500H184.0Q187.5 3.500 187.5 7V22.5" fill="url(#tg)" stroke="#1c3fa0"/>
<path d="M189.5 22.5V7Q189.5 3.500 193.0 3.500H244.0Q247.5 3.500 247.5 7V22.5" fill="url(#tg)" stroke="#1c3fa0"/>
<path d="M249.5 22.5V7Q249.5 3.500 253.0 3.500H280.0Q283.5 3.500 283.5 7V22.5" fill="url(#tg)" stroke="#1c3fa0"/>
<path d="M350.5 22.5V7Q350.5 3.500 354.0 3.500H381.0Q384.5 3.500 384.5 7V22.5" fill="url(#tg)" stroke="#1c3fa0"/>
<path d="M386.5 22.5V7Q386.5 3.500 390.0 3.500H417.0Q420.5 3.500 420.5 7V22.5" fill="url(#tg)" stroke="#1c3fa0"/>
<path d="M0 22.500H1094" stroke="#35559f"/>
<path d="M269.500 23L287 5Q288.500 3.500 291 3.500H345Q348.500 3.500 348.500 7V23" fill="url(#tga)" stroke="#1c3fa0"/>
<path d="M270.500 22.500H348" stroke="#ffbf6a"/>
<path d="M336.500 10l6 6.500m0-6.500l-6 6.500" stroke="#15428b" stroke-width="1.600" fill="none"/>
</svg>
<div class="mt" style="left:26px"><i>概<svg><use href="#g6982"/></svg></i><i>要<svg><use href="#g8981"/></svg></i></div>
<div class="mt" style="left:62px"><i>诊<svg><use href="#g8bca"/></svg></i><i>断<svg><use href="#g65ad"/></svg></i></div>
<div class="mt" style="left:98px"><i>协<svg><use href="#g534f"/></svg></i><i>议<svg><use href="#g8bae"/></svg></i></div>
<div class="mt" style="left:134px"><i>物<svg><use href="#g7269"/></svg></i><i>理<svg><use href="#g7406"/></svg></i><i>端<svg><use href="#g7aef"/></svg></i><i>点<svg><use href="#g70b9"/></svg></i></div>
<div class="mt" style="left:194px"><i>物<svg><use href="#g7269"/></svg></i><i>理<svg><use href="#g7406"/></svg></i><i>会<svg><use href="#g4f1a"/></svg></i><i>话<svg><use href="#g8bdd"/></svg></i></div>
<div class="mt" style="left:254px"><i>矩<svg><use href="#g77e9"/></svg></i><i>阵<svg><use href="#g9635"/></svg></i></div>
<div class="mt" style="left:356px"><i>日<svg><use href="#g65e5"/></svg></i><i>志<svg><use href="#g5fd7"/></svg></i></div>
<div class="mt" style="left:392px"><i>报<svg><use href="#g62a5"/></svg></i><i>表<svg><use href="#g8868"/></svg></i></div>
<div class="mt" style="left:290px"><i>数<svg><use href="#g6570"/></svg></i><i>据<svg><use href="#g636e"/></svg></i><i>包<svg><use href="#g5305"/></svg></i></div>
</div>
<div id="main"><div class="in"></div></div>
<div id="mtb">
  <div class="tsep" style="left:35px"></div>
  <div class="tsep" style="left:86px"></div>
  <div class="abs" style="left:89px;top:2px;width:66px;height:22px;background:linear-gradient(#ffbf78,#ffad55 48%,#ffa443 54%,#ffb565);border:1px solid #f3a64e"></div>
  <div class="abs" style="left:110px;top:3px;width:1px;height:20px;background:#ffd09a"></div>
  <div class="abs" style="left:132px;top:3px;width:1px;height:20px;background:#ffd09a"></div>
  <div class="tsep" style="left:157px"></div>
  <div class="tsep" style="left:225px"></div>
  <div class="tsep" style="left:265px"></div>
  <div class="tsep" style="left:293px"></div>
  <div class="dar" style="left:24px"></div>
  <div class="dar" style="left:185px"></div>
  <div class="dar" style="left:214px"></div>
  <div class="dar" style="left:253px"></div>
  <div class="dar" style="left:320px"></div>
  <div id="mtb-icons"></div>
  <div class="abs" style="left:905px;top:2px;width:184px;height:22px;border:1px solid #3a66b8;background:#aecdf5"></div>
  <div class="abs" style="left:913px;top:2px;height:22px;line-height:22px;font-weight:bold;font-size:11px;white-space:nowrap;letter-spacing:-.56px">FF:FF:FF:FF:FF:FF\<span class="c bd" style="letter-spacing:0;margin:0 1px 0 3px"><i>数<svg><use href="#g6570"/></svg></i><i>据<svg><use href="#g636e"/></svg></i><i>包<svg><use href="#g5305"/></svg></i></span>:</div>
  <div class="abs" style="left:1055px;top:3px;width:33px;height:20px;background:#fff;border-left:1px solid #3a66b8;line-height:20px;text-align:center;font-size:11px">193</div>
</div>
<div id="th">
  <div class="th" style="left:0;width:106px;text-align:right"><i>绝<svg><use href="#g7edd"/></svg></i><i>对<svg><use href="#g5bf9"/></svg></i><i>时<svg><use href="#g65f6"/></svg></i><i>间<svg><use href="#g95f4"/></svg></i></div><div class="vs" style="left:112px"></div>
  <div class="th" style="left:119px"><i>源<svg><use href="#g6e90"/></svg></i></div><div class="vs" style="left:312px"></div>
  <div class="th" style="left:319px"><i>目<svg><use href="#g76ee"/></svg></i><i>标<svg><use href="#g6807"/></svg></i></div><div class="vs" style="left:512px"></div>
  <div class="th" style="left:519px"><i>协<svg><use href="#g534f"/></svg></i><i>议<svg><use href="#g8bae"/></svg></i></div><div class="vs" style="left:592px"></div>
  <div class="th" style="left:593px;width:73px;text-align:right"><i>大<svg><use href="#g5927"/></svg></i><i>小<svg><use href="#g5c0f"/></svg></i></div><div class="vs" style="left:672px"></div>
  <div class="th" style="left:679px"><i>解<svg><use href="#g89e3"/></svg></i><i>码<svg><use href="#g7801"/></svg></i><i>字<svg><use href="#g5b57"/></svg></i><i>段<svg><use href="#g6bb5"/></svg></i></div><div class="vs" style="left:822px"></div>
  <div class="th" style="left:829px"><i>概<svg><use href="#g6982"/></svg></i><i>要<svg><use href="#g8981"/></svg></i></div>
</div>
<div id="tb">
<div class="tr"><span class="td c1">21:06:52.570146</span><span class="td c2">26:20:03:D2:46:1C</span><span class="td c3">FF:FF:FF:FF:FF:FF</span><span class="td c4 g">ARP</span><span class="td c5">64</span><span class="td c6"></span><span class="td c7 g"><span class="c"><i>谁<svg><use href="#g8c01"/></svg></i><i>是<svg><use href="#g662f"/></svg></i></span> 192.168.1.101? <span class="c"><i>告<svg><use href="#g544a"/></svg></i><i>诉<svg><use href="#g8bc9"/></svg></i></span> 192.168.1.1</span></div>
<div class="tr"><span class="td c1">21:07:14.852469</span><span class="td c2">00:E0:4C:DA:EE:CD</span><span class="td c3">FF:FF:FF:FF:FF:FF</span><span class="td c4 g">ARP</span><span class="td c5">64</span><span class="td c6"></span><span class="td c7 g"><span class="c"><i>谁<svg><use href="#g8c01"/></svg></i><i>是<svg><use href="#g662f"/></svg></i></span> 192.168.1.155? <span class="c"><i>告<svg><use href="#g544a"/></svg></i><i>诉<svg><use href="#g8bc9"/></svg></i></span> 192.168.1.209</span></div>
<div class="tr"><span class="td c1">21:07:58.462340</span><span class="td c2">26:20:03:D2:46:1C</span><span class="td c3">FF:FF:FF:FF:FF:FF</span><span class="td c4 g">ARP</span><span class="td c5">64</span><span class="td c6"></span><span class="td c7 g"><span class="c"><i>谁<svg><use href="#g8c01"/></svg></i><i>是<svg><use href="#g662f"/></svg></i></span> 192.168.1.110? <span class="c"><i>告<svg><use href="#g544a"/></svg></i><i>诉<svg><use href="#g8bc9"/></svg></i></span> 192.168.1.1</span></div>
<div class="tr"><span class="td c1">21:08:01.961973</span><span class="td c2">26:20:03:D2:46:1C</span><span class="td c3">FF:FF:FF:FF:FF:FF</span><span class="td c4 g">ARP</span><span class="td c5">64</span><span class="td c6"></span><span class="td c7 g"><span class="c"><i>谁<svg><use href="#g8c01"/></svg></i><i>是<svg><use href="#g662f"/></svg></i></span> 192.168.1.110? <span class="c"><i>告<svg><use href="#g544a"/></svg></i><i>诉<svg><use href="#g8bc9"/></svg></i></span> 192.168.1.1</span></div>
<div class="tr"><span class="td c1">21:08:05.464208</span><span class="td c2">26:20:03:D2:46:1C</span><span class="td c3">FF:FF:FF:FF:FF:FF</span><span class="td c4 g">ARP</span><span class="td c5">64</span><span class="td c6"></span><span class="td c7 g"><span class="c"><i>谁<svg><use href="#g8c01"/></svg></i><i>是<svg><use href="#g662f"/></svg></i></span> 192.168.1.110? <span class="c"><i>告<svg><use href="#g544a"/></svg></i><i>诉<svg><use href="#g8bc9"/></svg></i></span> 192.168.1.1</span></div>
<div class="tr"><span class="td c1">21:08:06.658242</span><span class="td c2">00:03:0D:48:B3:C6</span><span class="td c3">FF:FF:FF:FF:FF:FF</span><span class="td c4 g">ARP</span><span class="td c5">64</span><span class="td c6"></span><span class="td c7 g"><span class="c"><i>谁<svg><use href="#g8c01"/></svg></i><i>是<svg><use href="#g662f"/></svg></i></span> 192.168.1.110? <span class="c"><i>告<svg><use href="#g544a"/></svg></i><i>诉<svg><use href="#g8bc9"/></svg></i></span> 192.168.1.110</span></div>
<div class="tr"><span class="td c1">21:08:06.787999</span><span class="td c2">00:03:0D:48:B3:C6</span><span class="td c3">FF:FF:FF:FF:FF:FF</span><span class="td c4 g">ARP</span><span class="td c5">64</span><span class="td c6"></span><span class="td c7 g"><span class="c"><i>谁<svg><use href="#g8c01"/></svg></i><i>是<svg><use href="#g662f"/></svg></i></span> 192.168.1.110? <span class="c"><i>告<svg><use href="#g544a"/></svg></i><i>诉<svg><use href="#g8bc9"/></svg></i></span> 192.168.1.110</span></div>
<div class="tr"><span class="td c1">21:08:07.786759</span><span class="td c2">00:03:0D:48:B3:C6</span><span class="td c3">FF:FF:FF:FF:FF:FF</span><span class="td c4 g">ARP</span><span class="td c5">64</span><span class="td c6"></span><span class="td c7 g"><span class="c"><i>谁<svg><use href="#g8c01"/></svg></i><i>是<svg><use href="#g662f"/></svg></i></span> 192.168.1.110? <span class="c"><i>告<svg><use href="#g544a"/></svg></i><i>诉<svg><use href="#g8bc9"/></svg></i></span> 192.168.1.110</span></div>
<div class="tr"><span class="td c1">21:10:40.661892</span><span class="td c2">00:E0:4C:36:1C:7E</span><span class="td c3">FF:FF:FF:FF:FF:FF</span><span class="td c4 g">ARP</span><span class="td c5">64</span><span class="td c6"></span><span class="td c7 g"><span class="c"><i>谁<svg><use href="#g8c01"/></svg></i><i>是<svg><use href="#g662f"/></svg></i></span> 192.168.1.101? <span class="c"><i>告<svg><use href="#g544a"/></svg></i><i>诉<svg><use href="#g8bc9"/></svg></i></span> 192.168.1.101</span></div>
<div class="tr"><span class="td c1">21:10:41.530860</span><span class="td c2">00:E0:4C:36:1C:7E</span><span class="td c3">FF:FF:FF:FF:FF:FF</span><span class="td c4 g">ARP</span><span class="td c5">64</span><span class="td c6"></span><span class="td c7 g"><span class="c"><i>谁<svg><use href="#g8c01"/></svg></i><i>是<svg><use href="#g662f"/></svg></i></span> 192.168.1.101? <span class="c"><i>告<svg><use href="#g544a"/></svg></i><i>诉<svg><use href="#g8bc9"/></svg></i></span> 192.168.1.101</span></div>
<div class="tr"><span class="td c1">21:10:42.530931</span><span class="td c2">00:E0:4C:36:1C:7E</span><span class="td c3">FF:FF:FF:FF:FF:FF</span><span class="td c4 g">ARP</span><span class="td c5">64</span><span class="td c6"></span><span class="td c7 g"><span class="c"><i>谁<svg><use href="#g8c01"/></svg></i><i>是<svg><use href="#g662f"/></svg></i></span> 192.168.1.101? <span class="c"><i>告<svg><use href="#g544a"/></svg></i><i>诉<svg><use href="#g8bc9"/></svg></i></span> 192.168.1.101</span></div>
<div class="tr"><span class="td c1">21:10:44.301708</span><span class="td c2">00:E0:4C:36:1C:7E</span><span class="td c3">FF:FF:FF:FF:FF:FF</span><span class="td c4 g">ARP</span><span class="td c5">64</span><span class="td c6"></span><span class="td c7 g"><span class="c"><i>谁<svg><use href="#g8c01"/></svg></i><i>是<svg><use href="#g662f"/></svg></i></span> 192.168.1.1? <span class="c"><i>告<svg><use href="#g544a"/></svg></i><i>诉<svg><use href="#g8bc9"/></svg></i></span> 192.168.1.101</span></div>
<div class="tr"><span class="td c1">21:10:56.505743</span><span class="td c2">26:20:03:D2:46:1C</span><span class="td c3">FF:FF:FF:FF:FF:FF</span><span class="td c4 g">ARP</span><span class="td c5">64</span><span class="td c6"></span><span class="td c7 g"><span class="c"><i>谁<svg><use href="#g8c01"/></svg></i><i>是<svg><use href="#g662f"/></svg></i></span> 192.168.1.54? <span class="c"><i>告<svg><use href="#g544a"/></svg></i><i>诉<svg><use href="#g8bc9"/></svg></i></span> 192.168.1.1</span></div>
<div class="tr"><span class="td c1">21:11:00.006673</span><span class="td c2">26:20:03:D2:46:1C</span><span class="td c3">FF:FF:FF:FF:FF:FF</span><span class="td c4 g">ARP</span><span class="td c5">64</span><span class="td c6"></span><span class="td c7 g"><span class="c"><i>谁<svg><use href="#g8c01"/></svg></i><i>是<svg><use href="#g662f"/></svg></i></span> 192.168.1.54? <span class="c"><i>告<svg><use href="#g544a"/></svg></i><i>诉<svg><use href="#g8bc9"/></svg></i></span> 192.168.1.1</span></div>
<div class="tr"><span class="td c1">21:11:03.504991</span><span class="td c2">26:20:03:D2:46:1C</span><span class="td c3">FF:FF:FF:FF:FF:FF</span><span class="td c4 g">ARP</span><span class="td c5">64</span><span class="td c6"></span><span class="td c7 g"><span class="c"><i>谁<svg><use href="#g8c01"/></svg></i><i>是<svg><use href="#g662f"/></svg></i></span> 192.168.1.54? <span class="c"><i>告<svg><use href="#g544a"/></svg></i><i>诉<svg><use href="#g8bc9"/></svg></i></span> 192.168.1.1</span></div>
<div class="tr"><span class="td c1">21:11:06.628413</span><span class="td c2">00:03:0D:48:B3:C6</span><span class="td c3">FF:FF:FF:FF:FF:FF</span><span class="td c4 g">ARP</span><span class="td c5">64</span><span class="td c6"></span><span class="td c7 g"><span class="c"><i>谁<svg><use href="#g8c01"/></svg></i><i>是<svg><use href="#g662f"/></svg></i></span> 192.168.1.110? <span class="c"><i>告<svg><use href="#g544a"/></svg></i><i>诉<svg><use href="#g8bc9"/></svg></i></span> 192.168.1.110</span></div>
<div class="tr"><span class="td c1">21:11:06.790930</span><span class="td c2">00:03:0D:48:B3:C6</span><span class="td c3">FF:FF:FF:FF:FF:FF</span><span class="td c4 g">ARP</span><span class="td c5">64</span><span class="td c6"></span><span class="td c7 g"><span class="c"><i>谁<svg><use href="#g8c01"/></svg></i><i>是<svg><use href="#g662f"/></svg></i></span> 192.168.1.110? <span class="c"><i>告<svg><use href="#g544a"/></svg></i><i>诉<svg><use href="#g8bc9"/></svg></i></span> 192.168.1.110</span></div>
<div class="tr"><span class="td c1">21:11:07.792304</span><span class="td c2">00:03:0D:48:B3:C6</span><span class="td c3">FF:FF:FF:FF:FF:FF</span><span class="td c4 g">ARP</span><span class="td c5">64</span><span class="td c6"></span><span class="td c7 g"><span class="c"><i>谁<svg><use href="#g8c01"/></svg></i><i>是<svg><use href="#g662f"/></svg></i></span> 192.168.1.110? <span class="c"><i>告<svg><use href="#g544a"/></svg></i><i>诉<svg><use href="#g8bc9"/></svg></i></span> 192.168.1.110</span></div>
<div class="tr"><span class="td c1">21:11:40.330795</span><span class="td c2">26:20:03:D2:46:1C</span><span class="td c3">FF:FF:FF:FF:FF:FF</span><span class="td c4 g">ARP</span><span class="td c5">64</span><span class="td c6"></span><span class="td c7 g"><span class="c"><i>谁<svg><use href="#g8c01"/></svg></i><i>是<svg><use href="#g662f"/></svg></i></span> 192.168.1.110? <span class="c"><i>告<svg><use href="#g544a"/></svg></i><i>诉<svg><use href="#g8bc9"/></svg></i></span> 192.168.1.1</span></div>
<div class="tr"><span class="td c1">21:11:43.834324</span><span class="td c2">26:20:03:D2:46:1C</span><span class="td c3">FF:FF:FF:FF:FF:FF</span><span class="td c4 g">ARP</span><span class="td c5">64</span><span class="td c6"></span><span class="td c7 g"><span class="c"><i>谁<svg><use href="#g8c01"/></svg></i><i>是<svg><use href="#g662f"/></svg></i></span> 192.168.1.110? <span class="c"><i>告<svg><use href="#g544a"/></svg></i><i>诉<svg><use href="#g8bc9"/></svg></i></span> 192.168.1.1</span></div>
<div class="tr"><span class="td c1">21:11:47.337853</span><span class="td c2">26:20:03:D2:46:1C</span><span class="td c3">FF:FF:FF:FF:FF:FF</span><span class="td c4 g">ARP</span><span class="td c5">64</span><span class="td c6"></span><span class="td c7 g"><span class="c"><i>谁<svg><use href="#g8c01"/></svg></i><i>是<svg><use href="#g662f"/></svg></i></span> 192.168.1.110? <span class="c"><i>告<svg><use href="#g544a"/></svg></i><i>诉<svg><use href="#g8bc9"/></svg></i></span> 192.168.1.1</span></div>
<div class="tr"><span class="td c1">21:12:17.982350</span><span class="td c2">00:E0:4C:36:1C:7E</span><span class="td c3">FF:FF:FF:FF:FF:FF</span><span class="td c4 g">ARP</span><span class="td c5">64</span><span class="td c6"></span><span class="td c7 g"><span class="c"><i>谁<svg><use href="#g8c01"/></svg></i><i>是<svg><use href="#g662f"/></svg></i></span> 192.168.1.75? <span class="c"><i>告<svg><use href="#g544a"/></svg></i><i>诉<svg><use href="#g8bc9"/></svg></i></span> 192.168.1.101</span></div>
<div class="tr"><span class="td c1">21:12:17.982362</span><span class="td c2">26:20:03:D2:46:1C</span><span class="td c3">FF:FF:FF:FF:FF:FF</span><span class="td c4 g">ARP</span><span class="td c5">64</span><span class="td c6"></span><span class="td c7 g"><span class="c"><i>谁<svg><use href="#g8c01"/></svg></i><i>是<svg><use href="#g662f"/></svg></i></span> 192.168.1.75? <span class="c"><i>告<svg><use href="#g544a"/></svg></i><i>诉<svg><use href="#g8bc9"/></svg></i></span> 192.168.1.1</span></div>
<div class="tr"><span class="td c1">21:13:42.688538</span><span class="td c2">00:22:15:56:17:03</span><span class="td c3">FF:FF:FF:FF:FF:FF</span><span class="td c4 g">ARP</span><span class="td c5">64</span><span class="td c6"></span><span class="td c7 g"><span class="c"><i>谁<svg><use href="#g8c01"/></svg></i><i>是<svg><use href="#g662f"/></svg></i></span> 192.168.1.54? <span class="c"><i>告<svg><use href="#g544a"/></svg></i><i>诉<svg><use href="#g8bc9"/></svg></i></span> 192.168.1.54</span></div>
</div>
<div id="vsb" class="abs" style="left:1322px;top:196px;width:17px;height:472px;background:linear-gradient(90deg,#dce8f9,#f1f7ff 35%,#f8fbff 65%,#e4eefb)">
  <div class="sbtn" style="left:1px;top:1px;width:15px;height:16px"><svg class="abs" style="left:3px;top:4px" width="8" height="6" viewBox="0 0 8 6"><path d="M.5 5L4 1.500 7.500 5" fill="none" stroke="#4d6185" stroke-width="1.800"/></svg></div>
  <div class="sbtn" style="left:1px;top:334px;width:15px;height:52px;background:linear-gradient(90deg,#eef5fe,#d4e4fa 45%,#bdd4f3)"><div class="abs" style="left:4px;top:22px;width:6px;height:7px;background:repeating-linear-gradient(#6f86ad 0,#6f86ad 1px,transparent 1px,transparent 2px)"></div></div>
  <div class="sbtn" style="left:1px;top:454px;width:15px;height:17px"><svg class="abs" style="left:3px;top:5px" width="8" height="6" viewBox="0 0 8 6"><path d="M.5 1L4 4.500 7.500 1" fill="none" stroke="#4d6185" stroke-width="1.800"/></svg></div>
</div>
<div id="hsb" class="abs" style="left:249px;top:668px;width:1073px;height:16px;background:linear-gradient(#dce8f9,#f1f7ff 35%,#f8fbff 65%,#e4eefb)">
  <div class="sbtn" style="left:0;top:0;width:16px;height:15px"><svg class="abs" style="left:4px;top:3px" width="6" height="8" viewBox="0 0 6 8"><path d="M5 .5L1.500 4 5 7.500" fill="none" stroke="#4d6185" stroke-width="1.800"/></svg></div>
  <div class="sbtn" style="left:78px;top:0;width:977px;height:15px;background:linear-gradient(#eef5fe,#d4e4fa 45%,#bdd4f3)"><div class="abs" style="left:485px;top:4px;width:7px;height:6px;background:repeating-linear-gradient(90deg,#6f86ad 0,#6f86ad 1px,transparent 1px,transparent 2px)"></div></div>
  <div class="sbtn" style="left:1057px;top:0;width:16px;height:15px"><svg class="abs" style="left:5px;top:3px" width="6" height="8" viewBox="0 0 6 8"><path d="M1 .5L4.500 4 1 7.500" fill="none" stroke="#4d6185" stroke-width="1.800"/></svg></div>
</div>
<div class="abs" style="left:1322px;top:668px;width:17px;height:16px;background:#ebe9f1"></div>
<div class="abs" style="left:249px;top:684px;width:1090px;height:5px;background:linear-gradient(#a8a8ae 0,#a8a8ae 1px,#ecebef 1px,#ecebef 4px,#a0a0a6 4px,#a0a0a6 5px)"></div>
<div id="pinfo" class="abs" style="left:249px;top:689px;width:1090px;height:20px;background:#fff;border-bottom:1px solid #b0b0b0;overflow:hidden">
  <div class="xb" style="left:8px;top:4px"></div>
  <div class="dh" style="left:18px;top:8px;width:6px"></div>
  <div class="dv" style="left:12px;top:14px;height:8px"></div>
  <div class="dv" style="left:31px;top:16px;height:6px"></div>
  <svg class="abs" style="left:23px;top:1px" width="15" height="13" viewBox="0 0 15 13"><path d="M.5 1.500Q4 0 7.500 1.500T14.500 1.500" fill="none" stroke="#2f5fb8" stroke-width="1.300"/><path d="M3 2.500L6.500 5.500M12 2.500L8.500 5.500" stroke="#8a9cc0" stroke-width=".9"/><rect x="5.500" y="5" width="4" height="5" rx="1" fill="#f0c020" stroke="#a07808" stroke-width=".8"/><path d="M7.500 10v2.500" stroke="#6a5a20" stroke-width="1.200"/></svg>
  <div class="abs" style="left:41px;top:3px;font-family:'Liberation Mono',monospace;font-weight:bold;font-size:11px;letter-spacing:.45px;color:#1a3fa0;line-height:13px;border-bottom:1px solid #1a3fa0;white-space:nowrap">Packet Info:</div>
  <div class="abs" style="left:41px;top:18px;width:15px;height:4px;background:#c6d6f0;border:1px solid #7f9ed6"></div>
  <div class="sbtn" style="left:1074px;top:0;width:15px;height:9px;border-radius:1px"><div class="abs" style="left:5px;top:2px;border:2px solid transparent;border-top:none;border-bottom:3px solid #4d6185"></div></div>
  <div class="sbtn" style="left:1074px;top:10px;width:15px;height:9px;border-radius:1px"><div class="abs" style="left:5px;top:3px;border:2px solid transparent;border-bottom:none;border-top:3px solid #4d6185"></div></div>
</div>
<div id="rstrip" class="abs" style="left:1345px;top:146px;width:18px;height:567px;background:#f1f1f5">
  <div class="abs" style="left:0;top:0;width:18px;height:21px;background:linear-gradient(#e3eefd 0,#d0e2fb 50%,#bbd6f9 58%,#b1d0f9 100%)"></div>
  <svg class="abs" style="left:5px;top:4px" width="9" height="13" viewBox="0 0 9 13"><path d="M1 2.500h7M7.500 1L3 7.500M1 7.500h6M4 6v3q0 2.500 3 2.500" fill="none" stroke="#15428b" stroke-width="1.700"/></svg>
  <div class="abs" style="left:0;top:21px;width:18px;height:546px;border-left:2px solid #8e8e96;border-top:2px solid #8e8e96;background:#f1f1f5"></div>
  <div class="abs" style="left:2px;top:23px;width:16px;height:525px;background:linear-gradient(90deg,#dfeafa,#f6faff 50%,#e8f0fc)"></div>
  <div class="sbtn" style="left:3px;top:24px;width:13px;height:12px"><svg class="abs" style="left:2px;top:3px" width="7" height="5" viewBox="0 0 7 5"><path d="M.5 4.500L3.500 1.500 6.500 4.500" fill="none" stroke="#4d6185" stroke-width="1.600"/></svg></div>
  <div class="sbtn" style="left:3px;top:38px;width:13px;height:195px;background:linear-gradient(90deg,#eef5fe,#d4e4fa 45%,#bdd4f3)"><div class="abs" style="left:3px;top:94px;width:6px;height:7px;background:repeating-linear-gradient(#6f86ad 0,#6f86ad 1px,transparent 1px,transparent 2px)"></div></div>
  <div class="sbtn" style="left:3px;top:534px;width:13px;height:13px"><svg class="abs" style="left:2px;top:4px" width="7" height="5" viewBox="0 0 7 5"><path d="M.5 .5L3.500 3.500 6.500 .5" fill="none" stroke="#4d6185" stroke-width="1.600"/></svg></div>
</div>
<!-- main toolbar icons (page coords) -->
<svg class="abs" style="left:256px;top:175px" width="17" height="17" viewBox="0 0 17 17"><rect x=".5" y=".5" width="11" height="9" fill="#fff" stroke="#8a8a92"/><path d="M2.500 3h7M2.500 5h7" stroke="#9ab4e8" stroke-width="1"/><rect x="5.500" y="6.500" width="10" height="9.500" fill="#6a5ad0" stroke="#3f32a0"/><rect x="7.500" y="7" width="6" height="3.500" fill="#eef0f8"/><rect x="8" y="12.500" width="5" height="3.500" fill="#cfd2e8"/><rect x="9" y="13.300" width="1.800" height="2.200" fill="#333"/></svg>
<svg class="abs" style="left:294px;top:178px" width="11" height="11" viewBox="0 0 11 11"><path d="M.5 5.500L5.500 .5v3h5v4h-5v3z" fill="#8aa0a8" stroke="#4a5a66" stroke-width=".8"/><path d="M2 5.500L5 2.500v2h4.500" stroke="#c8dce0" stroke-width="1" fill="none"/></svg>
<svg class="abs" style="left:316px;top:178px" width="11" height="11" viewBox="0 0 11 11"><path d="M10.500 5.500L5.500 .5v3h-5v4h5v3z" fill="#8aa0a8" stroke="#4a5a66" stroke-width=".8"/><path d="M1.500 4.500h4.500v-2l3 3" stroke="#c8dce0" stroke-width="1" fill="none"/></svg>
<svg class="abs" style="left:341px;top:176px" width="16" height="14" viewBox="0 0 16 14"><rect x=".5" y=".5" width="14" height="12" rx="1" fill="#fff" stroke="#6a7080"/><path d="M2 2.500h11M2 4.500h11M2 6.500h11M2 8.500h11M2 10.500h11" stroke="#30343f" stroke-width="1" shape-rendering="crispEdges"/><path d="M15.300 2v11.300H2" stroke="#6a7896" stroke-width=".8" fill="none" opacity=".6"/></svg>
<svg class="abs" style="left:364px;top:176px" width="15" height="14" viewBox="0 0 15 14"><rect x=".5" y=".5" width="13" height="12.500" fill="#fdf6c0" stroke="#7a7a86"/><path d="M1 2h12" stroke="#7a86b8" stroke-width="1.400"/><path d="M2 2h2" stroke="#e03020" stroke-width="1.400"/><path d="M2.500 5.500h2M2.500 8h2M2.500 10.500h2" stroke="#50545e" stroke-width="1.200"/><path d="M6 5.500h6M6 8h6M6 10.500h6" stroke="#8a8e9a" stroke-width="1"/></svg>
<svg class="abs" style="left:386px;top:176px" width="16" height="14" viewBox="0 0 16 14"><path d="M.5 .5h11l3.500 3.500v9.500H.5z" fill="#fdfdff" stroke="#7a7a86"/><path d="M11.500 .5v3.500h3.500" fill="#dfe4f0" stroke="#7a7a86" stroke-width=".8"/><text x="1.300" y="11" font-size="9.500" font-family="Liberation Sans,sans-serif" fill="#2a5ae0" stroke="#2a5ae0" stroke-width=".3" textLength="11.500" lengthAdjust="spacingAndGlyphs">0X</text></svg>
<svg class="abs" style="left:413px;top:175px" width="17" height="16" viewBox="0 0 17 16"><path d="M2.500 11Q-.5 6 3 3" stroke="#4a7ed8" stroke-width="2" fill="none"/><path d="M1 13l3.500 2.500.5-4.500z" fill="#4a7ed8"/><path d="M13.500 2.500Q17.500 7 14 11.500" stroke="#4a7ed8" stroke-width="2" fill="none"/><path d="M11 1l4 .2-1 3.600z" fill="#4a7ed8"/><rect x="3" y="2.500" width="7" height="5.500" fill="#f8dc60" stroke="#b89a30" stroke-width=".8"/><rect x="7.500" y="8.500" width="7" height="5.500" fill="#ececec" stroke="#8a8a8a" stroke-width=".8"/></svg>
<svg class="abs" style="left:447px;top:176px" width="16" height="15" viewBox="0 0 16 15"><path d="M.5 .5h13.500L8.500 7v3.500L5.500 10V7z" fill="#7ad0f8" stroke="#3a78d8" stroke-width=".8"/><path d="M2.500 1.300h9l-3.500 4z" fill="#d8f8ff"/><use href="#plus" transform="translate(7 6.500) scale(.78)"/></svg>
<svg class="abs" style="left:481px;top:174px" width="17" height="17" viewBox="0 0 17 17"><path d="M.5 2.500h6v3.500h-6zM3.500 .5v8" stroke="#e82020" stroke-width="1.500" fill="none"/><path d="M1 16L15 2" stroke="#2040e0" stroke-width="1.700"/><path d="M6 11L15 2" stroke="#e82020" stroke-width="1.700"/><path d="M8.500 8.500L11 6" stroke="#f0c010" stroke-width="1.700"/><path d="M11.500 1h4.500v4.500z" fill="#e82020"/><path d="M.5 16.500v-4l4 4z" fill="#20b020"/><path d="M9.500 16.500l3-7.500 3 7.500M10.700 14h3.600" stroke="#2030e0" stroke-width="1.600" fill="none"/></svg>
<svg class="abs" style="left:520px;top:176px" width="17" height="15" viewBox="0 0 17 15"><rect x=".5" y=".5" width="15" height="11.500" fill="#e8eaf0" stroke="#8a8e9a"/><path d="M2 3h5M2 5h5M2 7h4M2 9h4" stroke="#7a8296" stroke-width=".8"/><path d="M9 3h5" stroke="#7a8296" stroke-width=".8"/><path d="M8 7.500V6q0-2.500 3-2.500t3 2.500v1.500" stroke="#b89030" stroke-width="1.400" fill="none"/><rect x="6.500" y="7.500" width="9" height="7" rx="1" fill="#f0c040" stroke="#a07818" stroke-width=".8"/><path d="M11 9.500v3M10 10.500h2" stroke="#5a4208" stroke-width="1"/></svg>
<svg class="abs" style="left:550px;top:176px" width="13" height="14" viewBox="0 0 13 14"><path d="M2 5.500Q3 1.500 7 1.500q2.500 0 4 2" stroke="#2f7ad8" stroke-width="2.400" fill="none"/><path d="M12.500 .5v5.500h-5.500z" fill="#2f7ad8"/><path d="M11 8.500Q10 12.500 6 12.500q-2.500 0-4-2" stroke="#2f7ad8" stroke-width="2.400" fill="none"/><path d="M.5 13.500V8h5.500z" fill="#2f7ad8"/></svg>
<div id="status">
  <div class="abs" style="left:1114px;top:0;width:252px;height:21px;background:linear-gradient(#c8dcf8 0,#a8c8f4 7px,#8ab0e4 7px,#7a9ccc 20px,#9ab4dc 20px,#9ab4dc 21px);border-left:1px solid #fff;box-shadow:inset 1px 0 0 #3c5ea8,inset 2px 0 0 #e8f0fc"></div>
  <div class="it" style="left:26px"><i>回<svg><use href="#g56de"/></svg></i><i>放<svg><use href="#g653e"/></svg></i><i>分<svg><use href="#g5206"/></svg></i><i>析<svg><use href="#g6790"/></svg></i> - <i>全<svg><use href="#g5168"/></svg></i><i>面<svg><use href="#g9762"/></svg></i><i>分<svg><use href="#g5206"/></svg></i><i>析<svg><use href="#g6790"/></svg></i></div>
  <div class="sep" style="left:140px"></div>
  <div class="it" style="left:167px"><i>共<svg><use href="#g5171"/></svg></i>1<i>文<svg><use href="#g6587"/></svg></i><i>件<svg><use href="#g4ef6"/></svg></i><span style="font-size:11px">(7.451 MB)</span>, <i>已<svg><use href="#g5df2"/></svg></i><i>完<svg><use href="#g5b8c"/></svg></i><i>成<svg><use href="#g6210"/></svg></i><i>回<svg><use href="#g56de"/></svg></i><i>放<svg><use href="#g653e"/></svg></i></div>
  <div class="sep" style="left:338px"></div>
  <div class="it" style="left:366px"><i>未<svg><use href="#g672a"/></svg></i><i>启<svg><use href="#g542f"/></svg></i><i>用<svg><use href="#g7528"/></svg></i></div>
  <div class="sep" style="left:409px"></div>
  <div class="it" style="left:420px"><i>持<svg><use href="#g6301"/></svg></i><i>续<svg><use href="#g7eed"/></svg></i><i>时<svg><use href="#g65f6"/></svg></i><i>间<svg><use href="#g95f4"/></svg></i>: <span style="font-size:11px">00:00:01</span></div>
  <div class="sep" style="left:528px"></div>
  <div class="it" style="left:557px;font-size:11px">14,869</div>
  <div class="it" style="left:616px;font-size:11px">0</div>
  <div class="sep" style="left:630px"></div>
  <div class="it" style="left:1146px"><i>警<svg><use href="#g8b66"/></svg></i><i>报<svg><use href="#g62a5"/></svg></i><i>浏<svg><use href="#g6d4f"/></svg></i><i>览<svg><use href="#g89c8"/></svg></i><i>器<svg><use href="#g5668"/></svg></i></div>
  <div class="it" style="left:1236px;font-size:11px">0</div>
  <div class="it" style="left:1286px;font-size:11px">0</div>
  <div class="it" style="left:1336px;font-size:11px">0</div>
  <!-- icons -->
  <svg class="abs" style="left:8px;top:3px" width="17" height="16" viewBox="0 0 17 16"><rect x=".5" y=".5" width="12" height="12" rx="1" fill="#fff" stroke="#5a86d8"/><rect x="1" y="1" width="11" height="2.500" fill="#5a8ae8"/><path d="M2 6l1 1 1.500-2M2 9.500l1 1 1.500-2" stroke="#e03020" stroke-width="1" fill="none"/><path d="M6 6.500h5M6 10h4" stroke="#5a6a90" stroke-width="1"/><path d="M7.500 15l1-3 6-5.500 2 2-6 5.500z" fill="#f0cc60" stroke="#8a6a20" stroke-width=".6"/><circle cx="15.300" cy="7.500" r="1.500" fill="#d8704a"/></svg>
  <svg class="abs" style="left:151px;top:3px" width="16" height="16" viewBox="0 0 32 32"><path d="M1.500 4q0-1.500 1.500-1.500h7l2.500 3h9.500q1.500 0 1.500 1.500V9H8L1.500 25z" fill="#f8dc9c" stroke="#d8a763" stroke-width="1.500"/><path d="M2 26.500L8 9.500H30.500L24.500 26.500z" fill="#f6d080" stroke="#d6a25a" stroke-width="1.500"/><rect x="1" y="25.500" width="20" height="4" rx="2" fill="#3fc43f" stroke="#1f9a1f"/><circle cx="23" cy="23" r="6" fill="#f0cf2c" stroke="#b38f08" stroke-width="1.500"/><circle cx="23" cy="23" r="2" fill="#fff"/></svg>
  <svg class="abs" style="left:349px;top:4px" width="14" height="14" viewBox="0 0 32 27"><path d="M1 1H31L19 14.500V25H13V14.500z" fill="url(#gFun)" stroke="#8a8a8a" stroke-width="1.500"/></svg>
  <svg class="abs" style="left:539px;top:3px" width="15" height="16" viewBox="0 0 15 16"><path d="M.5 .5h13L8.500 6.500v4h-3v-4z" fill="#e4e4e4" stroke="#777" stroke-width=".8"/><path d="M3 9.500l3 3.500 6-8" stroke="#28b428" stroke-width="2.200" fill="none"/></svg>
  <svg class="abs" style="left:599px;top:3px" width="16" height="17" viewBox="0 0 16 17"><path d="M.5 .5h13L8.500 6.500v4h-3v-4z" fill="#e4e4e4" stroke="#777" stroke-width=".8"/><circle cx="9" cy="11" r="4.200" fill="#fff" fill-opacity=".6" stroke="#e02818" stroke-width="1.500"/><path d="M6 14l6-6" stroke="#e02818" stroke-width="1.500"/></svg>
  <svg class="abs" style="left:1129px;top:2px" width="16" height="16" viewBox="0 0 16 16"><path d="M7 1q.8-1.300 1.600 0l6.600 12.500q.5 1.200-.8 1.200H1.400q-1.300 0-.8-1.200z" fill="#f8dc10" stroke="#b89800" stroke-width=".9"/><path d="M6.900 4.500q.9-1 1.800 0l-.5 5.500h-.8z" fill="#333"/><circle cx="7.800" cy="12" r="1.100" fill="#333"/></svg>
  <svg class="abs" style="left:1218px;top:4px" width="112" height="13" viewBox="0 0 112 13"><defs><radialGradient id="gBall" cx=".4" cy=".3" r=".75"><stop offset="0" stop-color="#ffe070"/><stop offset=".5" stop-color="#ffb010"/><stop offset="1" stop-color="#e08800"/></radialGradient></defs><circle cx="6.200" cy="6.300" r="5.800" fill="url(#gBall)" stroke="#c8901c" stroke-width=".6"/><circle cx="56.300" cy="6.300" r="5.800" fill="url(#gBall)" stroke="#c8901c" stroke-width=".6"/><circle cx="106" cy="6.300" r="5.800" fill="url(#gBall)" stroke="#c8901c" stroke-width=".6"/></svg>
</div>
<div id="task">
  <div id="start" class="abs" style="left:0;top:0;width:100px;height:30px;border-radius:0 13px 13px 0/0 15px 15px 0;background:linear-gradient(#2f6b3a 0,#8ccc82 1px,#5cb654 3px,#40a840 7px,#349e34 13px,#2f962f 20px,#2b8a2b 26px,#1f661f 30px);box-shadow:inset 0 2px 2px rgba(255,255,255,.3),inset -2px -1px 3px rgba(0,40,0,.45), 1px 0 2px rgba(0,0,40,.6)">
    <svg class="abs" style="left:10px;top:5px" width="19" height="19" viewBox="0 0 19 19"><path d="M2.500 2.800q3.200-2 6.400.2L7.300 8.600q-3.200-2.200-6.400-.2z" fill="#f0562c"/><path d="M9.800 3.500q3.200 2 6.800.2L15 9.300q-3.600 1.800-6.800-.2z" fill="#84c83c"/><path d="M.7 9.600q3.200-2 6.400.2L5.500 15.400q-3.200-2.200-6.400-.2z" transform="translate(.3 0)" fill="#3c8cf0"/><path d="M7.900 10.300q3.200 2 6.800.2l-1.600 5.600q-3.600 1.800-6.800-.2z" fill="#fcc820"/></svg>
    <div class="abs" id="starttxt" style="left:37px;top:6px;color:#fff;white-space:nowrap"><i>开<svg><use href="#k5f00"/></svg></i><i>始<svg><use href="#k59cb"/></svg></i></div>
  </div><!--/start-->
  <svg class="abs" style="left:111px;top:6px" width="17" height="17" viewBox="0 0 17 17"><rect x="1" y="1.500" width="14" height="14" rx="3" fill="#f4f8ff" stroke="#2a4aa0"/><path d="M11 5.500q-5-1.500-5.500 3t5.500 3M5.500 8.500h5" stroke="#2a5ac8" stroke-width="1.800" fill="none"/><circle cx="14.500" cy="3" r="1.800" fill="#e84020"/></svg>
  <div class="abs" style="left:138px;top:8px;line-height:14px"><i>网<svg><use href="#g7f51"/></svg></i><i>络<svg><use href="#g7edc"/></svg></i></div>
  <div class="abs" style="left:169px;top:13px;border:3.500px solid transparent;border-bottom:none;border-top:4px solid #fff"></div>
  <div class="abs" style="left:185px;top:8px;line-height:14px"><i>工<svg><use href="#g5de5"/></svg></i><i>具<svg><use href="#g5177"/></svg></i></div>
  <div class="abs" style="left:216px;top:13px;border:3.500px solid transparent;border-bottom:none;border-top:4px solid #fff"></div>
  <svg class="abs" style="left:227px;top:6px" width="16" height="17" viewBox="0 0 16 17"><ellipse cx="8" cy="9" rx="5.500" ry="7" fill="#1a1a1a"/><ellipse cx="8" cy="11" rx="3.500" ry="4.200" fill="#fff"/><ellipse cx="6.300" cy="4.800" rx="1.100" ry="1.500" fill="#fff"/><ellipse cx="9.700" cy="4.800" rx="1.100" ry="1.500" fill="#fff"/><ellipse cx="8" cy="7.300" rx="2.200" ry=".9" fill="#f0a010"/><path d="M3 8.500q5 2.500 10 0v2q-5 2.500-10 0z" fill="#e02818"/><ellipse cx="4.500" cy="16" rx="2.500" ry="1" fill="#f0a010"/><ellipse cx="11.500" cy="16" rx="2.500" ry="1" fill="#f0a010"/></svg>
  <svg class="abs" style="left:252px;top:7px" width="9" height="7" viewBox="0 0 9 7"><path d="M.5 .5l3 3-3 3M4.700 .5l3 3-3 3" fill="none" stroke="#fff" stroke-width="1.500"/></svg>
  <div class="tk" style="left:273px">CSNA<span class="c"><i>网<svg><use href="#g7f51"/></svg></i><i>络<svg><use href="#g7edc"/></svg></i><i>分<svg><use href="#g5206"/></svg></i><i>析<svg><use href="#g6790"/></svg></i><i>论<svg><use href="#g8bba"/></svg></i><i>坛<svg><use href="#g575b"/></svg></i></span> ...</div>
  <div class="tk" style="left:433px">CSNA<span class="c"><i>网<svg><use href="#g7f51"/></svg></i><i>络<svg><use href="#g7edc"/></svg></i><i>分<svg><use href="#g5206"/></svg></i><i>析<svg><use href="#g6790"/></svg></i><i>论<svg><use href="#g8bba"/></svg></i><i>坛<svg><use href="#g575b"/></svg></i></span> ...</div>
  <div class="tk" style="left:593px"><span class="c"><i>数<svg><use href="#g6570"/></svg></i><i>据<svg><use href="#g636e"/></svg></i><i>包<svg><use href="#g5305"/></svg></i><i>发<svg><use href="#g53d1"/></svg></i><i>生<svg><use href="#g751f"/></svg></i><i>地<svg><use href="#g5730"/></svg></i><i>址<svg><use href="#g5740"/></svg></i><i>冲<svg><use href="#g51b2"/></svg></i></span>...</div>
  <div class="tk" style="left:753px"><span class="c"><i>分<svg><use href="#g5206"/></svg></i><i>析<svg><use href="#g6790"/></svg></i><i>工<svg><use href="#g5de5"/></svg></i><i>程<svg><use href="#g7a0b"/></svg></i></span> 1 - <span class="c"><i>全<svg><use href="#g5168"/></svg></i><i>面<svg><use href="#g9762"/></svg></i><i>分<svg><use href="#g5206"/></svg></i></span>...</div>
  <svg class="abs" style="left:282px;top:7px" width="16" height="16" viewBox="0 0 16 16"><use href="#ie"/></svg>
  <svg class="abs" style="left:442px;top:7px" width="16" height="16" viewBox="0 0 16 16"><defs><g id="ie"><ellipse cx="8" cy="8.500" rx="9" ry="3.600" transform="rotate(-38 8 8.500)" fill="none" stroke="#f2b830" stroke-width="1.500"/><path d="M12.900 10.600A5.200 5.200 0 1 1 13.200 7.800H4.500" fill="none" stroke="#3a9cf0" stroke-width="2.800"/><path d="M12.900 10.600A5.200 5.200 0 1 1 13.200 7.800H4.500" fill="none" stroke="#8fd0ff" stroke-width=".9"/><path d="M1.200 13.500Q3 14 6 11.500" fill="none" stroke="#f2b830" stroke-width="1.500"/></g></defs><use href="#ie"/></svg>
  <svg class="abs" style="left:602px;top:7px" width="16" height="16" viewBox="0 0 16 16"><use href="#ie"/></svg>
  <svg class="abs" style="left:762px;top:7px" width="16" height="16" viewBox="0 0 16 16"><circle cx="8" cy="8" r="7.500" fill="#7fa8d0" stroke="#c8d8ec" stroke-width=".8"/><path d="M1.800 9.300C4 8 5.800 5.800 8.500 5.300c2.500-.4 4.300 1.700 5.800 4.200l-1.400.7C11.700 8.300 10.200 6.900 8.300 7.200 6.500 7.500 5 9.100 3.100 10z" fill="#fff"/><path d="M3.600 10.600c2.100 1.500 5.300 1.700 7.500-.8l-.8-.2c-1.700 1.800-4.200 1.800-5.700.7z" fill="#fff"/><path d="M5.800 9c1.400 1.100 3.300 1 4.500-.3l-.6-.2c-1 .9-2.200.9-3.300.2z" fill="#fff"/></svg>
  <!-- keyboard -->
  <svg class="abs" style="left:1155px;top:9px" width="14" height="13" viewBox="0 0 14 13"><path d="M4 .5q1 2 2 0t2 0 2 0 2 0" stroke="#fff" stroke-width=".9" fill="none"/><rect x=".5" y="3.500" width="13" height="9" rx="1" fill="#fff" stroke="#222" stroke-width=".9"/><path d="M2 5.500h10M2 7.500h10M2 9.500h10" stroke="#222" stroke-width="1" stroke-dasharray="1 1"/><path d="M3.500 11.200h7" stroke="#222" stroke-width=".9"/></svg>
  <div id="tray" class="abs" style="left:1183px;top:0;width:183px;height:30px;background:linear-gradient(#3a5c88 0,#3a5c88 1px,#c4d8f6 1px,#e6eefc 3px,#f3f7fe 8px,#e2ecfb 14px,#bcd2f2 21px,#8fb2e4 27px,#7ea4dc 30px);border-left:1px solid #e8f0fc">
    <div class="abs" style="left:141px;top:9px;font-size:11px;line-height:12px;color:#000">22:03</div>
    <!-- tray icons -->
    <svg class="abs" style="left:10px;top:7px" width="16" height="16" viewBox="0 0 16 16"><rect x=".5" y=".5" width="15" height="15" rx="2" fill="#d8d8d8" stroke="#bbb"/><path d="M8 2v12M2.500 5.500q5.500-2.500 11 0M3 8h10" stroke="#e01020" stroke-width="2" fill="none"/><path d="M8 2v4" stroke="#6a2a80" stroke-width="1.600"/></svg>
    <svg class="abs" style="left:29px;top:6px" width="15" height="17" viewBox="0 0 15 17"><path d="M2 1l6 .5-2 2 3 3-2.500 2L4 5.500l-2.500 2z" fill="#28b028" stroke="#106810" stroke-width=".6"/><path d="M2.500 12l8-4.500 3.500 4-8 4.500z" fill="#dcdcd0" stroke="#444" stroke-width=".8"/><path d="M5 12.500l5.500-3M6.500 14l5.500-3" stroke="#555" stroke-width=".8"/></svg>
    <svg class="abs" style="left:46px;top:6px" width="17" height="17" viewBox="0 0 17 17"><rect x="5.500" y=".5" width="8" height="6.500" fill="#3a4a90" stroke="#1a2050" stroke-width=".8"/><rect x=".5" y="5.500" width="8" height="6.500" fill="#3a4a90" stroke="#1a2050" stroke-width=".8"/><rect x="1.500" y="6.500" width="6" height="4.500" fill="#2a2a60"/><path d="M2 14h5.500v1.500H2z" fill="#ccc" stroke="#777" stroke-width=".5"/><path d="M7.500 9.500l8 7M15.500 9.500l-8 7" stroke="#e81818" stroke-width="2"/></svg>
    <svg class="abs" style="left:65px;top:6px" width="16" height="17" viewBox="0 0 16 17"><ellipse cx="6.500" cy="7" rx="6" ry="6.500" fill="#8a8a8a" stroke="#444" stroke-width=".8"/><ellipse cx="7.500" cy="7.500" rx="3.800" ry="4.300" fill="#555"/><ellipse cx="8" cy="8" rx="1.800" ry="2.200" fill="#bbb"/><path d="M11 15q3-1 4-4M9.500 13q2.500-.5 3.500-3" stroke="#9a8ad8" stroke-width=".9" fill="none"/></svg>
    <svg class="abs" style="left:82px;top:5px" width="17" height="18" viewBox="0 0 17 18"><path d="M8.500 3.500Q9 1 7 .5q4.500 0 4 3.200" fill="#2f90e8" stroke="#1a5aa8" stroke-width=".6"/><ellipse cx="8.500" cy="10.500" rx="8" ry="7" fill="#48a8f4" stroke="#1a5aa8" stroke-width=".8"/><ellipse cx="8.500" cy="8.500" rx="6" ry="3.800" fill="#a8dcff" opacity=".7"/><ellipse cx="5.500" cy="10" rx=".9" ry="1.600" fill="#111"/><ellipse cx="11.500" cy="10" rx=".9" ry="1.600" fill="#111"/></svg>
    <svg class="abs" style="left:101px;top:6px" width="15" height="17" viewBox="0 0 15 17"><path d="M7.500 .5Q10.500 2.500 14.500 2.500q0 10-7 14-7-4-7-14 4 0 7-2z" fill="#28a838" stroke="#e8f4e8" stroke-width="1"/><path d="M7.500 .5Q10.500 2.500 14.500 2.500q0 10-7 14-7-4-7-14 4 0 7-2z" fill="none" stroke="#0a6818" stroke-width=".5"/><path d="M9.500 4L4.500 9.500h3l-1.500 4 5.500-6h-3z" fill="#fff"/></svg>
    <svg class="abs" style="left:120px;top:6px" width="14" height="17" viewBox="0 0 14 17"><path d="M7 .5Q10 2 13.500 2.500q0 9.500-6.500 13.500Q.5 12 .5 2.500 4 2 7 .5z" fill="#6ad048" stroke="#d8f0d0" stroke-width="1"/><path d="M7 4.500v7M3.500 8h7" stroke="#fff" stroke-width="2.600"/></svg>
  </div>
</div>

</body>
</html>
